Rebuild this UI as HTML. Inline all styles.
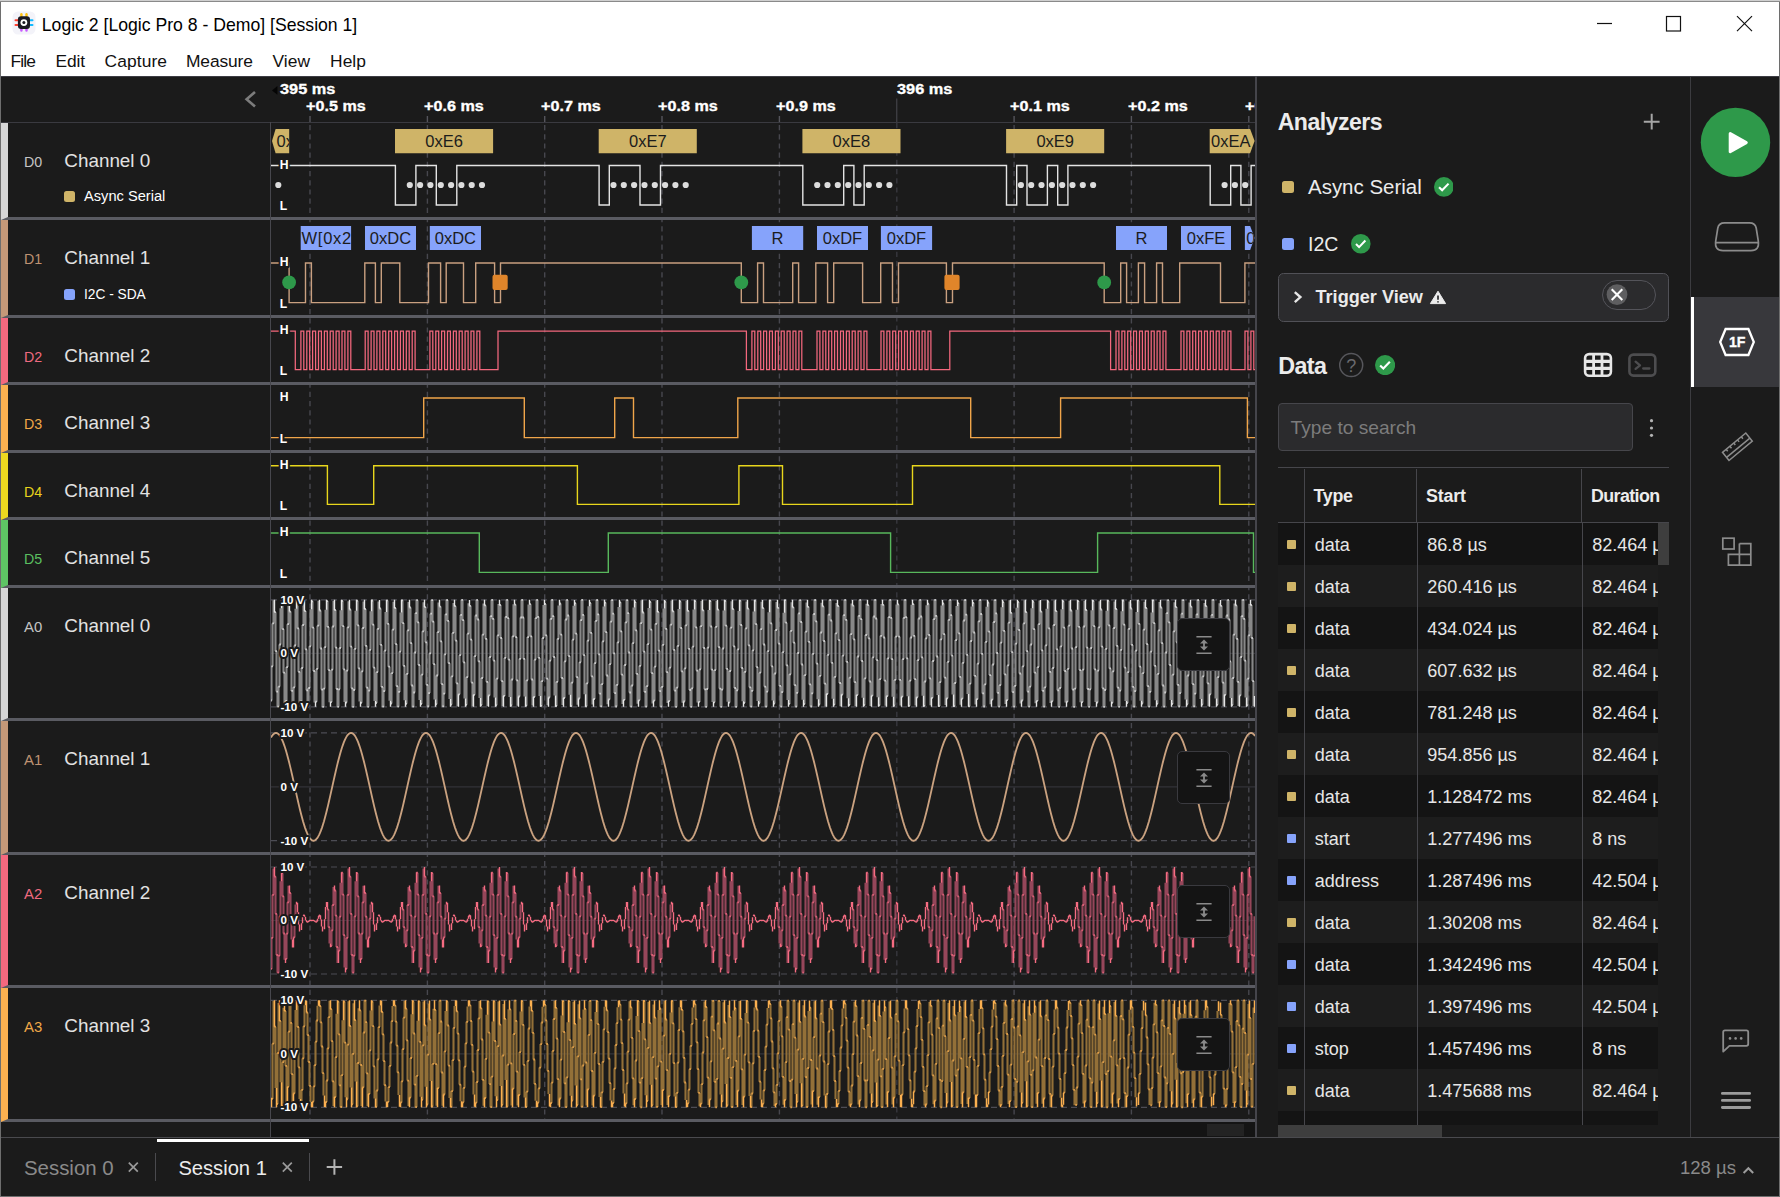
<!DOCTYPE html>
<html lang="en"><head><meta charset="utf-8"><title>Logic 2 [Logic Pro 8 - Demo] [Session 1]</title>
<style>
html,body{margin:0;padding:0;}
body{width:1780px;height:1197px;position:relative;overflow:hidden;background:#fff;font-family:"Liberation Sans", sans-serif;}
.t{position:absolute;white-space:nowrap;line-height:1;}
.abs{position:absolute;}
svg{position:absolute;overflow:hidden;}
svg text{font-family:"Liberation Sans", sans-serif;}
</style></head><body>
<header id="titlebar">
<div style="position:absolute;left:0.0px;top:0.0px;width:1780.0px;height:1.0px;background:#cfcfcf;"></div>
<div style="position:absolute;left:0.0px;top:1.0px;width:1780.0px;height:1.0px;background:#8a8a8a;"></div>
<div class="t" style="left:41.8px;top:17px;font-size:17.64px;color:#000;">Logic 2 [Logic Pro 8 - Demo] [Session 1]</div>
<svg style="left:12px;top:11px" width="24" height="24" viewBox="12 11 24 24">
<rect x="12.5" y="11.5" width="23" height="23" rx="5.5" fill="#f3f3f9"/>
<rect x="20.2" y="13.1" width="2.4" height="4" rx="1.2" fill="#ffc20e"/><rect x="25.3" y="13.1" width="2.4" height="4" rx="1.2" fill="#ffc20e"/>
<rect x="20.2" y="28" width="2.4" height="3.8" rx="1.2" fill="#c85aff"/><rect x="25.3" y="28" width="2.4" height="3.8" rx="1.2" fill="#c85aff"/>
<rect x="14.5" y="19.2" width="4" height="2.1" rx="1" fill="#ff4030"/><rect x="14.5" y="23.9" width="4" height="2.1" rx="1" fill="#ff4030"/>
<rect x="29.5" y="19.2" width="4" height="2.1" rx="1" fill="#10baff"/><rect x="29.5" y="23.9" width="4" height="2.1" rx="1" fill="#10baff"/>
<rect x="17.9" y="16.2" width="12.1" height="12.8" rx="3.2" fill="#1a1a22"/>
<circle cx="23.9" cy="22.6" r="3.4" fill="#fff"/><circle cx="23.9" cy="22.6" r="1.5" fill="#1a1a22"/>
</svg>
<svg style="left:1580px;top:2px" width="198" height="44" viewBox="1580 2 198 44" stroke="#111" stroke-width="1.2" fill="none">
<path d="M1597 23.5H1612"/><rect x="1666.5" y="16.5" width="14" height="14.5"/><path d="M1737 16.2L1752 31.2M1752 16.2L1737 31.2"/></svg>
<div class="t" style="left:10.5px;top:53px;font-size:17.4px;color:#111;letter-spacing:-0.85px;">File</div>
<div class="t" style="left:55.5px;top:53px;font-size:17.4px;color:#111;letter-spacing:-0.16px;">Edit</div>
<div class="t" style="left:104.5px;top:53px;font-size:17.4px;color:#111;letter-spacing:0.10px;">Capture</div>
<div class="t" style="left:186.0px;top:53px;font-size:17.4px;color:#111;letter-spacing:-0.12px;">Measure</div>
<div class="t" style="left:272.5px;top:53px;font-size:17.4px;color:#111;letter-spacing:0.03px;">View</div>
<div class="t" style="left:330.0px;top:53px;font-size:17.4px;color:#111;letter-spacing:0.07px;">Help</div>
</header>
<div id="app-frame">
<div style="position:absolute;left:1.0px;top:76.0px;width:1778.0px;height:1120.0px;background:#1b1b1b;"></div>
<div style="position:absolute;left:0.0px;top:2.0px;width:1.0px;height:1195.0px;background:#6e6e6e;"></div>
<div style="position:absolute;left:1779.0px;top:2.0px;width:1.0px;height:1195.0px;background:#6e6e6e;"></div>
<div style="position:absolute;left:0.0px;top:1196.0px;width:1780.0px;height:1.0px;background:#6e6e6e;"></div>
<div style="position:absolute;left:1.0px;top:76.0px;width:1778.0px;height:1.0px;background:#3d3d44;"></div>
</div>
<main id="capture-view">
<div style="position:absolute;left:1.0px;top:122.0px;width:1254.0px;height:1.0px;background:#3a3a40;"></div>
<svg style="left:240px;top:86px" width="22" height="26" viewBox="240 86 22 26" fill="none" stroke="#7c7c7c" stroke-width="2.6" stroke-linecap="butt"><path d="M255 92L246.6 99.3L255 106.6"/></svg>
<div class="abs" style="left:1px;top:123px;width:1254px;height:94px;border-left:7px solid #d6d6d6;border-bottom:3px solid #5a5b62;box-sizing:content-box;width:1247px"></div>
<div class="t" style="left:24.0px;top:155px;font-size:14.24px;color:#c4c4c4;">D0</div>
<div class="t" style="left:64.3px;top:152px;font-size:18.88px;color:#e2e2e2;">Channel 0</div>
<div class="abs" style="left:1px;top:220px;width:1254px;height:95px;border-left:7px solid #c49878;border-bottom:3px solid #5a5b62;box-sizing:content-box;width:1247px"></div>
<div class="t" style="left:24.0px;top:252px;font-size:14.24px;color:#bf9272;">D1</div>
<div class="t" style="left:64.3px;top:249px;font-size:18.88px;color:#e2e2e2;">Channel 1</div>
<div class="abs" style="left:1px;top:318px;width:1254px;height:64px;border-left:7px solid #f4687e;border-bottom:3px solid #5a5b62;box-sizing:content-box;width:1247px"></div>
<div class="t" style="left:24.0px;top:350px;font-size:14.24px;color:#ee6a80;">D2</div>
<div class="t" style="left:64.3px;top:347px;font-size:18.88px;color:#e2e2e2;">Channel 2</div>
<div class="abs" style="left:1px;top:385px;width:1254px;height:65px;border-left:7px solid #fbb050;border-bottom:3px solid #5a5b62;box-sizing:content-box;width:1247px"></div>
<div class="t" style="left:24.0px;top:417px;font-size:14.24px;color:#f0a848;">D3</div>
<div class="t" style="left:64.3px;top:414px;font-size:18.88px;color:#e2e2e2;">Channel 3</div>
<div class="abs" style="left:1px;top:453px;width:1254px;height:64px;border-left:7px solid #ecd820;border-bottom:3px solid #5a5b62;box-sizing:content-box;width:1247px"></div>
<div class="t" style="left:24.0px;top:485px;font-size:14.24px;color:#e6d21c;">D4</div>
<div class="t" style="left:64.3px;top:482px;font-size:18.88px;color:#e2e2e2;">Channel 4</div>
<div class="abs" style="left:1px;top:520px;width:1254px;height:65px;border-left:7px solid #5ec464;border-bottom:3px solid #5a5b62;box-sizing:content-box;width:1247px"></div>
<div class="t" style="left:24.0px;top:552px;font-size:14.24px;color:#5abf60;">D5</div>
<div class="t" style="left:64.3px;top:549px;font-size:18.88px;color:#e2e2e2;">Channel 5</div>
<div class="abs" style="left:1px;top:588px;width:1254px;height:130px;border-left:7px solid #d6d6d6;border-bottom:3px solid #5a5b62;box-sizing:content-box;width:1247px"></div>
<div class="t" style="left:24.0px;top:620px;font-size:14.88px;color:#c4c4c4;">A0</div>
<div class="t" style="left:64.3px;top:617px;font-size:18.88px;color:#e2e2e2;">Channel 0</div>
<div class="abs" style="left:1px;top:721px;width:1254px;height:131px;border-left:7px solid #c49878;border-bottom:3px solid #5a5b62;box-sizing:content-box;width:1247px"></div>
<div class="t" style="left:24.0px;top:753px;font-size:14.88px;color:#bf9272;">A1</div>
<div class="t" style="left:64.3px;top:750px;font-size:18.88px;color:#e2e2e2;">Channel 1</div>
<div class="abs" style="left:1px;top:855px;width:1254px;height:130px;border-left:7px solid #f4687e;border-bottom:3px solid #5a5b62;box-sizing:content-box;width:1247px"></div>
<div class="t" style="left:24.0px;top:887px;font-size:14.88px;color:#ee6a80;">A2</div>
<div class="t" style="left:64.3px;top:884px;font-size:18.88px;color:#e2e2e2;">Channel 2</div>
<div class="abs" style="left:1px;top:988px;width:1254px;height:131px;border-left:7px solid #fbb050;border-bottom:3px solid #5a5b62;box-sizing:content-box;width:1247px"></div>
<div class="t" style="left:24.0px;top:1020px;font-size:14.88px;color:#f0a848;">A3</div>
<div class="t" style="left:64.3px;top:1017px;font-size:18.88px;color:#e2e2e2;">Channel 3</div>
<div style="position:absolute;left:64.0px;top:191.0px;width:11.0px;height:11.0px;background:#cfb468;border-radius:2.5px;"></div>
<div class="t" style="left:84.0px;top:189px;font-size:14.65px;color:#fff;">Async Serial</div>
<div style="position:absolute;left:64.0px;top:289.0px;width:11.0px;height:10.5px;background:#86a3fb;border-radius:2.5px;"></div>
<div class="t" style="left:84.0px;top:288px;font-size:13.73px;color:#fff;">I2C - SDA</div>
<div style="position:absolute;left:270.0px;top:122.0px;width:1.0px;height:1015.0px;background:#47474d;"></div>
<div style="position:absolute;left:271.0px;top:1122.0px;width:984.0px;height:15.0px;background:#141414;"></div>
<div style="position:absolute;left:1207.0px;top:1124.0px;width:37.0px;height:12.0px;background:#232323;"></div>
<div style="position:absolute;left:1255.0px;top:76.0px;width:1.5px;height:1061.0px;background:#45454b;"></div>
<svg style="left:271px;top:76px" width="984" height="1061" viewBox="271 76 984 1061"><path d="M310 116V122" stroke="#55555c" stroke-width="1.4"/><path d="M310 125V1122" stroke="#47474e" stroke-width="1.4" stroke-dasharray="5.2 4"/><path d="M427.4 116V122" stroke="#55555c" stroke-width="1.4"/><path d="M427.4 125V1122" stroke="#47474e" stroke-width="1.4" stroke-dasharray="5.2 4"/><path d="M544.7 116V122" stroke="#55555c" stroke-width="1.4"/><path d="M544.7 125V1122" stroke="#47474e" stroke-width="1.4" stroke-dasharray="5.2 4"/><path d="M662 116V122" stroke="#55555c" stroke-width="1.4"/><path d="M662 125V1122" stroke="#47474e" stroke-width="1.4" stroke-dasharray="5.2 4"/><path d="M779.4 116V122" stroke="#55555c" stroke-width="1.4"/><path d="M779.4 125V1122" stroke="#47474e" stroke-width="1.4" stroke-dasharray="5.2 4"/><path d="M896.8 98.5V122" stroke="#4a4a52" stroke-width="1"/><path d="M896.8 123V1122" stroke="#38383e" stroke-width="1.4" stroke-dasharray="5.2 4"/><path d="M1014.1 116V122" stroke="#55555c" stroke-width="1.4"/><path d="M1014.1 125V1122" stroke="#47474e" stroke-width="1.4" stroke-dasharray="5.2 4"/><path d="M1131.4 116V122" stroke="#55555c" stroke-width="1.4"/><path d="M1131.4 125V1122" stroke="#47474e" stroke-width="1.4" stroke-dasharray="5.2 4"/><path d="M1248.8 116V122" stroke="#55555c" stroke-width="1.4"/><path d="M1248.8 125V1122" stroke="#47474e" stroke-width="1.4" stroke-dasharray="5.2 4"/><rect x="271" y="217" width="984" height="3" fill="#5a5b62"/><rect x="271" y="315" width="984" height="3" fill="#5a5b62"/><rect x="271" y="382" width="984" height="3" fill="#5a5b62"/><rect x="271" y="450" width="984" height="3" fill="#5a5b62"/><rect x="271" y="517" width="984" height="3" fill="#5a5b62"/><rect x="271" y="585" width="984" height="3" fill="#5a5b62"/><rect x="271" y="718" width="984" height="3" fill="#5a5b62"/><rect x="271" y="852" width="984" height="3" fill="#5a5b62"/><rect x="271" y="985" width="984" height="3" fill="#5a5b62"/><rect x="271" y="1119" width="984" height="3" fill="#5a5b62"/><path d="M271 165.5H395.4V205H415.9V165.5H436.3V205H456.8V165.5H599.1V205H609.3V165.5H640V205H660.5V165.5H802.8V205H843.7V165.5H853.9V205H864.2V165.5H1006.5V205H1016.7V165.5H1027V205H1047.4V165.5H1057.7V205H1067.9V165.5H1210.2V205H1230.7V165.5H1240.9V205H1251.1V165.5H1255" fill="none" stroke="#e4e4e4" stroke-width="1.4" stroke-linejoin="miter"/><text x="279.8" y="168.7" font-size="12.2" font-weight="bold" fill="#fff" stroke="#1b1b1b" stroke-width="4" stroke-linejoin="round" paint-order="stroke">H</text><text x="279.8" y="210.2" font-size="12.2" font-weight="bold" fill="#fff" stroke="#1b1b1b" stroke-width="4" stroke-linejoin="round" paint-order="stroke">L</text><g fill="#dcdcdc"><circle cx="278.3" cy="185" r="3.1"/><circle cx="409.8" cy="185" r="3.1"/><circle cx="420.1" cy="185" r="3.1"/><circle cx="430.4" cy="185" r="3.1"/><circle cx="440.8" cy="185" r="3.1"/><circle cx="451.1" cy="185" r="3.1"/><circle cx="461.4" cy="185" r="3.1"/><circle cx="471.7" cy="185" r="3.1"/><circle cx="482" cy="185" r="3.1"/><circle cx="613.5" cy="185" r="3.1"/><circle cx="623.8" cy="185" r="3.1"/><circle cx="634.1" cy="185" r="3.1"/><circle cx="644.5" cy="185" r="3.1"/><circle cx="654.8" cy="185" r="3.1"/><circle cx="665.1" cy="185" r="3.1"/><circle cx="675.4" cy="185" r="3.1"/><circle cx="685.7" cy="185" r="3.1"/><circle cx="817.2" cy="185" r="3.1"/><circle cx="827.5" cy="185" r="3.1"/><circle cx="837.8" cy="185" r="3.1"/><circle cx="848.2" cy="185" r="3.1"/><circle cx="858.5" cy="185" r="3.1"/><circle cx="868.8" cy="185" r="3.1"/><circle cx="879.1" cy="185" r="3.1"/><circle cx="889.4" cy="185" r="3.1"/><circle cx="1020.9" cy="185" r="3.1"/><circle cx="1031.2" cy="185" r="3.1"/><circle cx="1041.5" cy="185" r="3.1"/><circle cx="1051.9" cy="185" r="3.1"/><circle cx="1062.2" cy="185" r="3.1"/><circle cx="1072.5" cy="185" r="3.1"/><circle cx="1082.8" cy="185" r="3.1"/><circle cx="1093.1" cy="185" r="3.1"/><circle cx="1224.6" cy="185" r="3.1"/><circle cx="1234.9" cy="185" r="3.1"/><circle cx="1245.2" cy="185" r="3.1"/></g><path d="M272 141.1L275.6 129H289.2V153.2H275.6Z" fill="#cfb468"/><clipPath id="c2720_129"><path d="M272 141.1L275.6 129H289.2V153.2H275.6Z"/></clipPath><text x="276.5" y="147" font-size="16.5" letter-spacing="0" fill="#1c1c1c" clip-path="url(#c2720_129)">0xE5</text><path d="M395 129H493.1V153.2H395Z" fill="#cfb468"/><text x="444.1" y="147" font-size="16.5" text-anchor="middle" fill="#1c1c1c">0xE6</text><path d="M598.7 129H696.8V153.2H598.7Z" fill="#cfb468"/><text x="647.8" y="147" font-size="16.5" text-anchor="middle" fill="#1c1c1c">0xE7</text><path d="M802.4 129H900.5V153.2H802.4Z" fill="#cfb468"/><text x="851.4" y="147" font-size="16.5" text-anchor="middle" fill="#1c1c1c">0xE8</text><path d="M1006.1 129H1104.2V153.2H1006.1Z" fill="#cfb468"/><text x="1055.2" y="147" font-size="16.5" text-anchor="middle" fill="#1c1c1c">0xE9</text><path d="M1209.7 129H1250.1L1254.6 141.1L1250.1 153.2H1209.7Z" fill="#cfb468"/><clipPath id="c12097_129"><path d="M1209.7 129H1250.1L1254.6 141.1L1250.1 153.2H1209.7Z"/></clipPath><text x="1211" y="147" font-size="16.5" letter-spacing="0" fill="#1c1c1c" clip-path="url(#c12097_129)">0xEA</text><path d="M271 263H289.1V302.6H305.5V263H311.4V302.6H364.8V263H375.4V302.6H381.3V263H399.8V302.6H428.5V263H440.6V302.6H446.2V263H463.5V302.6H475.7V263H494.6V302.6H500.5V263H741.3V302.6H757.6V263H763.5V302.6H792.7V263H798.6V302.6H815.8V263H827.6V302.6H833.7V263H862.6V302.6H880.7V263H892.5V302.6H898.5V263H946.4V302.6H952.5V263H1104.2V302.6H1120.7V263H1126.6V302.6H1138.4V263H1144.6V302.6H1156.6V263H1162.5V302.6H1179.7V263H1220.5V302.6H1244.9V263H1255" fill="none" stroke="#c9a080" stroke-width="1.4" stroke-linejoin="miter"/><text x="279.8" y="266.2" font-size="12.2" font-weight="bold" fill="#fff" stroke="#1b1b1b" stroke-width="4" stroke-linejoin="round" paint-order="stroke">H</text><text x="279.8" y="307.8" font-size="12.2" font-weight="bold" fill="#fff" stroke="#1b1b1b" stroke-width="4" stroke-linejoin="round" paint-order="stroke">L</text><circle cx="289.1" cy="282.4" r="6.9" fill="#2e994a"/><circle cx="741.3" cy="282.4" r="6.9" fill="#2e994a"/><circle cx="1104.2" cy="282.4" r="6.9" fill="#2e994a"/><rect x="492.5" y="274.8" width="15.2" height="15.2" rx="2" fill="#e0852a"/><rect x="944.4" y="274.8" width="15.2" height="15.2" rx="2" fill="#e0852a"/><path d="M300.7 226.1H351.1V250H300.7Z" fill="#86a3fb"/><clipPath id="c3007_226"><path d="M300.7 226.1H351.1V250H300.7Z"/></clipPath><text x="301.6" y="244" font-size="16.5" letter-spacing="0.7" fill="#1c1c1c" clip-path="url(#c3007_226)">W[0x20]</text><path d="M365 226.1H416V250H365Z" fill="#86a3fb"/><text x="390.5" y="244" font-size="16.5" text-anchor="middle" fill="#1c1c1c">0xDC</text><path d="M429.8 226.1H481V250H429.8Z" fill="#86a3fb"/><text x="455.4" y="244" font-size="16.5" text-anchor="middle" fill="#1c1c1c">0xDC</text><path d="M751.9 226.1H803.2V250H751.9Z" fill="#86a3fb"/><text x="777.5" y="244" font-size="16.5" text-anchor="middle" fill="#1c1c1c">R</text><path d="M817 226.1H868V250H817Z" fill="#86a3fb"/><text x="842.5" y="244" font-size="16.5" text-anchor="middle" fill="#1c1c1c">0xDF</text><path d="M880.9 226.1H932.1V250H880.9Z" fill="#86a3fb"/><text x="906.5" y="244" font-size="16.5" text-anchor="middle" fill="#1c1c1c">0xDF</text><path d="M1116 226.1H1167V250H1116Z" fill="#86a3fb"/><text x="1141.5" y="244" font-size="16.5" text-anchor="middle" fill="#1c1c1c">R</text><path d="M1181 226.1H1231V250H1181Z" fill="#86a3fb"/><text x="1206" y="244" font-size="16.5" text-anchor="middle" fill="#1c1c1c">0xFE</text><path d="M1244.9 226.1H1250.1L1254.6 238.1L1250.1 250H1244.9Z" fill="#86a3fb"/><clipPath id="c12449_226"><path d="M1244.9 226.1H1250.1L1254.6 238.1L1250.1 250H1244.9Z"/></clipPath><text x="1246.2" y="244" font-size="16.5" letter-spacing="0" fill="#1c1c1c" clip-path="url(#c12449_226)">0xFE</text><path d="M271 331H295.3V369.6H300.9V331H303.8V369.6H306.8V331H309.7V369.6H312.6V331H315.6V369.6H318.5V331H321.4V369.6H324.4V331H327.3V369.6H330.2V331H333.2V369.6H336.1V331H339.1V369.6H342V331H344.9V369.6H347.9V331H350.8V369.6H365.2V331H368.1V369.6H371.1V331H374V369.6H376.9V331H379.9V369.6H382.8V331H385.7V369.6H388.7V331H391.6V369.6H394.6V331H397.5V369.6H400.4V331H403.4V369.6H406.3V331H409.2V369.6H412.2V331H415.1V369.6H429.9V331H432.8V369.6H435.8V331H438.7V369.6H441.6V331H444.6V369.6H447.5V331H450.4V369.6H453.4V331H456.3V369.6H459.2V331H462.2V369.6H465.1V331H468.1V369.6H471V331H473.9V369.6H476.9V331H479.8V369.6H498V331H746.4V369.6H751.9V331H754.8V369.6H757.8V331H760.7V369.6H763.6V331H766.6V369.6H769.5V331H772.4V369.6H775.4V331H778.3V369.6H781.2V331H784.2V369.6H787.1V331H790.1V369.6H793V331H795.9V369.6H798.9V331H801.8V369.6H817V331H819.9V369.6H822.9V331H825.8V369.6H828.7V331H831.7V369.6H834.6V331H837.5V369.6H840.5V331H843.4V369.6H846.4V331H849.3V369.6H852.2V331H855.2V369.6H858.1V331H861V369.6H864V331H866.9V369.6H881V331H883.9V369.6H886.9V331H889.8V369.6H892.7V331H895.7V369.6H898.6V331H901.5V369.6H904.5V331H907.4V369.6H910.4V331H913.3V369.6H916.2V331H919.2V369.6H922.1V331H925V369.6H928V331H930.9V369.6H949.8V331H1110.6V369.6H1116V331H1118.9V369.6H1121.9V331H1124.8V369.6H1127.7V331H1130.7V369.6H1133.6V331H1136.5V369.6H1139.5V331H1142.4V369.6H1145.3V331H1148.3V369.6H1151.2V331H1154.2V369.6H1157.1V331H1160V369.6H1163V331H1165.9V369.6H1181V331H1183.9V369.6H1186.9V331H1189.8V369.6H1192.7V331H1195.7V369.6H1198.6V331H1201.5V369.6H1204.5V331H1207.4V369.6H1210.3V331H1213.3V369.6H1216.2V331H1219.2V369.6H1222.1V331H1225V369.6H1228V331H1230.9V369.6H1245V331H1247.9V369.6H1250.9V331H1253.8V369.6H1255" fill="none" stroke="#f4687e" stroke-width="1.25" stroke-linejoin="miter"/><text x="279.8" y="334.2" font-size="12.2" font-weight="bold" fill="#fff" stroke="#1b1b1b" stroke-width="4" stroke-linejoin="round" paint-order="stroke">H</text><text x="279.8" y="374.8" font-size="12.2" font-weight="bold" fill="#fff" stroke="#1b1b1b" stroke-width="4" stroke-linejoin="round" paint-order="stroke">L</text><path d="M271 437.6H423.7V398H524.3V437.6H614.7V398H633.5V437.6H737.8V398H970.7V437.6H1060.6V398H1247.4V437.6H1255" fill="none" stroke="#f0a54a" stroke-width="1.4" stroke-linejoin="miter"/><text x="279.8" y="401.2" font-size="12.2" font-weight="bold" fill="#fff" stroke="#1b1b1b" stroke-width="4" stroke-linejoin="round" paint-order="stroke">H</text><text x="279.8" y="442.8" font-size="12.2" font-weight="bold" fill="#fff" stroke="#1b1b1b" stroke-width="4" stroke-linejoin="round" paint-order="stroke">L</text><path d="M271 465.7H327.4V504.4H373.7V465.7H577.4V504.4H738.9V465.7H782.5V504.4H912.5V465.7H1219.8V504.4H1255" fill="none" stroke="#e8d61c" stroke-width="1.4" stroke-linejoin="miter"/><text x="279.8" y="468.9" font-size="12.2" font-weight="bold" fill="#fff" stroke="#1b1b1b" stroke-width="4" stroke-linejoin="round" paint-order="stroke">H</text><text x="279.8" y="509.6" font-size="12.2" font-weight="bold" fill="#fff" stroke="#1b1b1b" stroke-width="4" stroke-linejoin="round" paint-order="stroke">L</text><path d="M271 533H479.3V572.4H608.3V533H890.6V572.4H1097.6V533H1253.5V572.4H1255" fill="none" stroke="#58b85c" stroke-width="1.4" stroke-linejoin="miter"/><text x="279.8" y="536.2" font-size="12.2" font-weight="bold" fill="#fff" stroke="#1b1b1b" stroke-width="4" stroke-linejoin="round" paint-order="stroke">H</text><text x="279.8" y="577.6" font-size="12.2" font-weight="bold" fill="#fff" stroke="#1b1b1b" stroke-width="4" stroke-linejoin="round" paint-order="stroke">L</text><path d="M271 599.8H1255M271 706.8H1255" stroke="#4c4c54" stroke-width="1.2" stroke-dasharray="6 4" fill="none"/><path d="M271 653.3H1255" stroke="#333338" stroke-width="1.2"/><path d="M271.5 666.3V700.5M272.5 623.4V666.3M273.5 600.3V623.4M275.5 612.2V651.2M276.5 651.2V691.6M277.5 691.6V706.8M278.5 686.6V706.7M279.5 644.5V686.6M280.5 608.2V644.5M282.5 601.7V629.2M283.5 629.2V672.7M284.5 672.7V703.3M286.5 667.1V700.9M287.5 624.2V667.1M288.5 600.5V624.2M290.5 611.6V650.3M291.5 650.3V690.9M292.5 690.9V706.7M293.5 687.3V706.7M294.5 645.4V687.3M295.5 608.7V645.4M297.5 601.5V628.4M298.5 628.4V671.8M299.5 671.8V703M301.5 668V701.3M302.5 625V668M303.5 600.6V625M305.5 611.1V649.4M306.5 649.4V690.3M307.5 690.3V706.8M308.5 688V706.8M309.5 646.3V688M310.5 609.2V646.3M312.5 601.3V627.7M313.5 627.7V671M314.5 671V702.6M316.5 668.9V701.7M317.5 625.7V668.9M318.5 600.8V625.7M320.5 610.5V648.5M321.5 648.5V689.6M322.5 689.6V706.8M323.5 688.6V706.8M324.5 647.2V688.6M325.5 609.7V647.2M327.5 601.1V626.9M328.5 626.9V670.1M329.5 670.1V702.3M331.5 669.7V702.1M332.5 626.5V669.7M333.5 601V626.5M335.5 610V647.6M336.5 647.6V689M337.5 689V706.8M338.5 689.3V706.8M339.5 648V689.3M340.5 610.3V648M342.5 600.9V626.1M343.5 626.1V669.3M344.5 669.3V701.9M346.5 670.6V702.5M347.5 627.3V670.6M348.5 601.2V627.3M350.5 609.5V646.7M351.5 646.7V688.3M352.5 688.3V706.8M353.5 690V706.8M354.5 648.9V690M355.5 610.8V648.9M357.5 600.7V625.3M358.5 625.3V668.4M359.5 668.4V701.5M361.5 671.4V702.8M362.5 628V671.4M363.5 601.4V628M365.5 609V645.8M366.5 645.8V687.6M367.5 687.6V706.8M368.5 690.6V706.8M369.5 649.8V690.6M370.5 611.3V649.8M372.5 600.5V624.6M373.5 624.6V667.6M374.5 667.6V701.1M376.5 672.2V703.1M377.5 628.8V672.2M378.5 601.6V628.8M380.5 608.5V644.9M381.5 644.9V686.9M382.5 686.9V706.7M383.5 691.2V706.7M384.5 650.7V691.2M385.5 611.9V650.7M387.5 600.4V623.8M388.5 623.8V666.7M389.5 666.7V700.7M391.5 673.1V703.5M392.5 629.6V673.1M393.5 601.8V629.6M395.5 608V644.1M396.5 644.1V686.2M397.5 686.2V706.7M398.5 691.9V706.8M399.5 651.6V691.9M400.5 612.5V651.6M402.5 600.3V623.1M403.5 623.1V665.8M404.5 665.8V700.3M406.5 673.9V703.8M407.5 630.4V673.9M408.5 602.1V630.4M410.5 607.5V643.2M411.5 643.2V685.5M412.5 685.5V706.6M413.5 692.5V706.8M414.5 652.5V692.5M415.5 613.1V652.5M416.5 599.8V613.1M417.5 600.2V622.3M418.5 622.3V665M419.5 665V699.9M421.5 674.7V704M422.5 631.3V674.7M423.5 602.3V631.3M425.5 607.1V642.3M426.5 642.3V684.8M427.5 684.8V706.5M428.5 693.1V706.8M429.5 653.4V693.1M430.5 613.7V653.4M431.5 599.8V613.7M432.5 600.1V621.6M433.5 621.6V664.1M434.5 664.1V699.4M436.5 675.5V704.3M437.5 632.1V675.5M438.5 602.6V632.1M440.5 606.6V641.4M441.5 641.4V684.1M442.5 684.1V706.4M443.5 693.7V706.8M444.5 654.3V693.7M445.5 614.3V654.3M446.5 599.8V614.3M447.5 600V620.9M448.5 620.9V663.2M449.5 663.2V699M451.5 676.4V704.6M452.5 632.9V676.4M453.5 602.9V632.9M455.5 606.2V640.6M456.5 640.6V683.3M457.5 683.3V706.3M459.5 655.2V694.3M460.5 614.9V655.2M461.5 599.8V614.9M462.5 599.9V620.2M463.5 620.2V662.3M464.5 662.3V698.5M466.5 677.2V704.8M467.5 633.7V677.2M468.5 603.2V633.7M470.5 605.8V639.7M471.5 639.7V682.6M472.5 682.6V706.2M474.5 656.1V694.8M475.5 615.5V656.1M476.5 599.9V615.5M477.5 599.9V619.5M478.5 619.5V661.4M479.5 661.4V698M481.5 678V705.1M482.5 634.6V678M483.5 603.5V634.6M485.5 605.4V638.8M486.5 638.8V681.8M487.5 681.8V706M489.5 657V695.4M490.5 616.1V657M491.5 599.8V616.1M492.5 599.8V618.8M493.5 618.8V660.6M494.5 660.6V697.5M496.5 678.7V705.3M497.5 635.4V678.7M498.5 603.9V635.4M500.5 605V638M501.5 638V681.1M502.5 681.1V705.9M504.5 657.9V695.9M505.5 616.8V657.9M506.5 599.8V616.8M507.5 599.8V618.1M508.5 618.1V659.7M509.5 659.7V697M511.5 679.5V705.5M512.5 636.3V679.5M513.5 604.2V636.3M515.5 604.6V637.1M516.5 637.1V680.3M517.5 680.3V705.7M519.5 658.8V696.5M520.5 617.5V658.8M521.5 599.8V617.5M522.5 599.8V617.5M523.5 617.5V658.8M524.5 658.8V696.5M526.5 680.3V705.7M527.5 637.1V680.3M528.5 604.6V637.1M530.5 604.2V636.3M531.5 636.3V679.5M532.5 679.5V705.5M534.5 659.7V697M535.5 618.1V659.7M536.5 599.8V618.1M537.5 599.8V616.8M538.5 616.8V657.9M539.5 657.9V695.9M541.5 681.1V705.9M542.5 638V681.1M543.5 605V638M545.5 603.9V635.4M546.5 635.4V678.7M547.5 678.7V705.3M549.5 660.6V697.5M550.5 618.8V660.6M551.5 599.8V618.8M552.5 599.8V616.1M553.5 616.1V657M554.5 657V695.4M556.5 681.8V706M557.5 638.8V681.8M558.5 605.4V638.8M560.5 603.5V634.6M561.5 634.6V678M562.5 678V705.1M564.5 661.4V698M565.5 619.5V661.4M566.5 599.9V619.5M567.5 599.9V615.5M568.5 615.5V656.1M569.5 656.1V694.8M571.5 682.6V706.2M572.5 639.7V682.6M573.5 605.8V639.7M575.5 603.2V633.7M576.5 633.7V677.2M577.5 677.2V704.8M579.5 662.3V698.5M580.5 620.2V662.3M581.5 599.9V620.2M582.5 599.8V614.9M583.5 614.9V655.2M584.5 655.2V694.3M586.5 683.3V706.3M587.5 640.6V683.3M588.5 606.2V640.6M590.5 602.9V632.9M591.5 632.9V676.4M592.5 676.4V704.6M594.5 663.2V699M595.5 620.9V663.2M596.5 600V620.9M597.5 599.8V614.3M598.5 614.3V654.3M599.5 654.3V693.7M600.5 693.7V706.8M601.5 684.1V706.4M602.5 641.4V684.1M603.5 606.6V641.4M605.5 602.6V632.1M606.5 632.1V675.5M607.5 675.5V704.3M609.5 664.1V699.4M610.5 621.6V664.1M611.5 600.1V621.6M612.5 599.8V613.7M613.5 613.7V653.4M614.5 653.4V693.1M615.5 693.1V706.8M616.5 684.8V706.5M617.5 642.3V684.8M618.5 607.1V642.3M620.5 602.3V631.3M621.5 631.3V674.7M622.5 674.7V704M624.5 665V699.9M625.5 622.3V665M626.5 600.2V622.3M627.5 599.8V613.1M628.5 613.1V652.5M629.5 652.5V692.5M630.5 692.5V706.8M631.5 685.5V706.6M632.5 643.2V685.5M633.5 607.5V643.2M635.5 602.1V630.4M636.5 630.4V673.9M637.5 673.9V703.8M639.5 665.8V700.3M640.5 623.1V665.8M641.5 600.3V623.1M643.5 612.5V651.6M644.5 651.6V691.9M645.5 691.9V706.8M646.5 686.2V706.7M647.5 644.1V686.2M648.5 608V644.1M650.5 601.8V629.6M651.5 629.6V673.1M652.5 673.1V703.5M654.5 666.7V700.7M655.5 623.8V666.7M656.5 600.4V623.8M658.5 611.9V650.7M659.5 650.7V691.2M660.5 691.2V706.7M661.5 686.9V706.7M662.5 644.9V686.9M663.5 608.5V644.9M665.5 601.6V628.8M666.5 628.8V672.2M667.5 672.2V703.1M669.5 667.6V701.1M670.5 624.6V667.6M671.5 600.5V624.6M673.5 611.3V649.8M674.5 649.8V690.6M675.5 690.6V706.8M676.5 687.6V706.8M677.5 645.8V687.6M678.5 609V645.8M680.5 601.4V628M681.5 628V671.4M682.5 671.4V702.8M684.5 668.4V701.5M685.5 625.3V668.4M686.5 600.7V625.3M688.5 610.8V648.9M689.5 648.9V690M690.5 690V706.8M691.5 688.3V706.8M692.5 646.7V688.3M693.5 609.5V646.7M695.5 601.2V627.3M696.5 627.3V670.6M697.5 670.6V702.5M699.5 669.3V701.9M700.5 626.1V669.3M701.5 600.9V626.1M703.5 610.3V648M704.5 648V689.3M705.5 689.3V706.8M706.5 689V706.8M707.5 647.6V689M708.5 610V647.6M710.5 601V626.5M711.5 626.5V669.7M712.5 669.7V702.1M714.5 670.1V702.3M715.5 626.9V670.1M716.5 601.1V626.9M718.5 609.7V647.2M719.5 647.2V688.6M720.5 688.6V706.8M721.5 689.6V706.8M722.5 648.5V689.6M723.5 610.5V648.5M725.5 600.8V625.7M726.5 625.7V668.9M727.5 668.9V701.7M729.5 671V702.6M730.5 627.7V671M731.5 601.3V627.7M733.5 609.2V646.3M734.5 646.3V688M735.5 688V706.8M736.5 690.3V706.8M737.5 649.4V690.3M738.5 611.1V649.4M740.5 600.6V625M741.5 625V668M742.5 668V701.3M744.5 671.8V703M745.5 628.4V671.8M746.5 601.5V628.4M748.5 608.7V645.4M749.5 645.4V687.3M750.5 687.3V706.7M751.5 690.9V706.7M752.5 650.3V690.9M753.5 611.6V650.3M755.5 600.5V624.2M756.5 624.2V667.1M757.5 667.1V700.9M759.5 672.7V703.3M760.5 629.2V672.7M761.5 601.7V629.2M763.5 608.2V644.5M764.5 644.5V686.6M765.5 686.6V706.7M766.5 691.6V706.8M767.5 651.2V691.6M768.5 612.2V651.2M770.5 600.3V623.4M771.5 623.4V666.3M772.5 666.3V700.5M774.5 673.5V703.6M775.5 630V673.5M776.5 601.9V630M778.5 607.8V643.6M779.5 643.6V685.9M780.5 685.9V706.6M781.5 692.2V706.8M782.5 652.1V692.2M783.5 612.8V652.1M785.5 600.2V622.7M786.5 622.7V665.4M787.5 665.4V700.1M789.5 674.3V703.9M790.5 630.9V674.3M791.5 602.2V630.9M793.5 607.3V642.7M794.5 642.7V685.2M795.5 685.2V706.6M796.5 692.8V706.8M797.5 653V692.8M798.5 613.4V653M799.5 599.8V613.4M800.5 600.1V622M801.5 622V664.5M802.5 664.5V699.7M804.5 675.1V704.2M805.5 631.7V675.1M806.5 602.5V631.7M808.5 606.8V641.9M809.5 641.9V684.4M810.5 684.4V706.5M811.5 693.4V706.8M812.5 653.9V693.4M813.5 614V653.9M814.5 599.8V614M815.5 600V621.3M816.5 621.3V663.6M817.5 663.6V699.2M819.5 675.9V704.5M820.5 632.5V675.9M821.5 602.8V632.5M823.5 606.4V641M824.5 641V683.7M825.5 683.7V706.4M827.5 654.8V694M828.5 614.6V654.8M829.5 599.8V614.6M830.5 600V620.5M831.5 620.5V662.8M832.5 662.8V698.7M834.5 676.8V704.7M835.5 633.3V676.8M836.5 603.1V633.3M838.5 606V640.1M839.5 640.1V683M840.5 683V706.2M842.5 655.6V694.6M843.5 615.2V655.6M844.5 599.9V615.2M845.5 599.9V619.8M846.5 619.8V661.9M847.5 661.9V698.3M849.5 677.6V705M850.5 634.2V677.6M851.5 603.4V634.2M853.5 605.6V639.3M854.5 639.3V682.2M855.5 682.2V706.1M857.5 656.5V695.1M858.5 615.8V656.5M859.5 599.8V615.8M860.5 599.8V619.1M861.5 619.1V661M862.5 661V697.8M864.5 678.4V705.2M865.5 635V678.4M866.5 603.7V635M868.5 605.2V638.4M869.5 638.4V681.5M870.5 681.5V705.9M872.5 657.4V695.7M873.5 616.5V657.4M874.5 599.8V616.5M875.5 599.8V618.5M876.5 618.5V660.1M877.5 660.1V697.3M879.5 679.1V705.4M880.5 635.8V679.1M881.5 604.1V635.8M883.5 604.8V637.5M884.5 637.5V680.7M885.5 680.7V705.8M887.5 658.3V696.2M888.5 617.1V658.3M889.5 599.8V617.1M890.5 599.8V617.8M891.5 617.8V659.2M892.5 659.2V696.7M894.5 679.9V705.6M895.5 636.7V679.9M896.5 604.4V636.7M898.5 604.4V636.7M899.5 636.7V679.9M900.5 679.9V705.6M902.5 659.2V696.7M903.5 617.8V659.2M904.5 599.8V617.8M905.5 599.8V617.1M906.5 617.1V658.3M907.5 658.3V696.2M909.5 680.7V705.8M910.5 637.5V680.7M911.5 604.8V637.5M913.5 604.1V635.8M914.5 635.8V679.1M915.5 679.1V705.4M917.5 660.1V697.3M918.5 618.5V660.1M919.5 599.8V618.5M920.5 599.8V616.5M921.5 616.5V657.4M922.5 657.4V695.7M924.5 681.5V705.9M925.5 638.4V681.5M926.5 605.2V638.4M928.5 603.7V635M929.5 635V678.4M930.5 678.4V705.2M932.5 661V697.8M933.5 619.1V661M934.5 599.8V619.1M935.5 599.8V615.8M936.5 615.8V656.5M937.5 656.5V695.1M939.5 682.2V706.1M940.5 639.3V682.2M941.5 605.6V639.3M943.5 603.4V634.2M944.5 634.2V677.6M945.5 677.6V705M947.5 661.9V698.3M948.5 619.8V661.9M949.5 599.9V619.8M950.5 599.9V615.2M951.5 615.2V655.6M952.5 655.6V694.6M954.5 683V706.2M955.5 640.1V683M956.5 606V640.1M958.5 603.1V633.3M959.5 633.3V676.8M960.5 676.8V704.7M962.5 662.8V698.7M963.5 620.5V662.8M964.5 600V620.5M965.5 599.8V614.6M966.5 614.6V654.8M967.5 654.8V694M969.5 683.7V706.4M970.5 641V683.7M971.5 606.4V641M973.5 602.8V632.5M974.5 632.5V675.9M975.5 675.9V704.5M977.5 663.6V699.2M978.5 621.3V663.6M979.5 600V621.3M980.5 599.8V614M981.5 614V653.9M982.5 653.9V693.4M983.5 693.4V706.8M984.5 684.4V706.5M985.5 641.9V684.4M986.5 606.8V641.9M988.5 602.5V631.7M989.5 631.7V675.1M990.5 675.1V704.2M992.5 664.5V699.7M993.5 622V664.5M994.5 600.1V622M995.5 599.8V613.4M996.5 613.4V653M997.5 653V692.8M998.5 692.8V706.8M999.5 685.2V706.6M1000.5 642.7V685.2M1001.5 607.3V642.7M1003.5 602.2V630.9M1004.5 630.9V674.3M1005.5 674.3V703.9M1007.5 665.4V700.1M1008.5 622.7V665.4M1009.5 600.2V622.7M1011.5 612.8V652.1M1012.5 652.1V692.2M1013.5 692.2V706.8M1014.5 685.9V706.6M1015.5 643.6V685.9M1016.5 607.8V643.6M1018.5 601.9V630M1019.5 630V673.5M1020.5 673.5V703.6M1022.5 666.3V700.5M1023.5 623.4V666.3M1024.5 600.3V623.4M1026.5 612.2V651.2M1027.5 651.2V691.6M1028.5 691.6V706.8M1029.5 686.6V706.7M1030.5 644.5V686.6M1031.5 608.2V644.5M1033.5 601.7V629.2M1034.5 629.2V672.7M1035.5 672.7V703.3M1037.5 667.1V700.9M1038.5 624.2V667.1M1039.5 600.5V624.2M1041.5 611.6V650.3M1042.5 650.3V690.9M1043.5 690.9V706.7M1044.5 687.3V706.7M1045.5 645.4V687.3M1046.5 608.7V645.4M1048.5 601.5V628.4M1049.5 628.4V671.8M1050.5 671.8V703M1052.5 668V701.3M1053.5 625V668M1054.5 600.6V625M1056.5 611.1V649.4M1057.5 649.4V690.3M1058.5 690.3V706.8M1059.5 688V706.8M1060.5 646.3V688M1061.5 609.2V646.3M1063.5 601.3V627.7M1064.5 627.7V671M1065.5 671V702.6M1067.5 668.9V701.7M1068.5 625.7V668.9M1069.5 600.8V625.7M1071.5 610.5V648.5M1072.5 648.5V689.6M1073.5 689.6V706.8M1074.5 688.6V706.8M1075.5 647.2V688.6M1076.5 609.7V647.2M1078.5 601.1V626.9M1079.5 626.9V670.1M1080.5 670.1V702.3M1082.5 669.7V702.1M1083.5 626.5V669.7M1084.5 601V626.5M1086.5 610V647.6M1087.5 647.6V689M1088.5 689V706.8M1089.5 689.3V706.8M1090.5 648V689.3M1091.5 610.3V648M1093.5 600.9V626.1M1094.5 626.1V669.3M1095.5 669.3V701.9M1097.5 670.6V702.5M1098.5 627.3V670.6M1099.5 601.2V627.3M1101.5 609.5V646.7M1102.5 646.7V688.3M1103.5 688.3V706.8M1104.5 690V706.8M1105.5 648.9V690M1106.5 610.8V648.9M1108.5 600.7V625.3M1109.5 625.3V668.4M1110.5 668.4V701.5M1112.5 671.4V702.8M1113.5 628V671.4M1114.5 601.4V628M1116.5 609V645.8M1117.5 645.8V687.6M1118.5 687.6V706.8M1119.5 690.6V706.8M1120.5 649.8V690.6M1121.5 611.3V649.8M1123.5 600.5V624.6M1124.5 624.6V667.6M1125.5 667.6V701.1M1127.5 672.2V703.1M1128.5 628.8V672.2M1129.5 601.6V628.8M1131.5 608.5V644.9M1132.5 644.9V686.9M1133.5 686.9V706.7M1134.5 691.2V706.7M1135.5 650.7V691.2M1136.5 611.9V650.7M1138.5 600.4V623.8M1139.5 623.8V666.7M1140.5 666.7V700.7M1142.5 673.1V703.5M1143.5 629.6V673.1M1144.5 601.8V629.6M1146.5 608V644.1M1147.5 644.1V686.2M1148.5 686.2V706.7M1149.5 691.9V706.8M1150.5 651.6V691.9M1151.5 612.5V651.6M1153.5 600.3V623.1M1154.5 623.1V665.8M1155.5 665.8V700.3M1157.5 673.9V703.8M1158.5 630.4V673.9M1159.5 602.1V630.4M1161.5 607.5V643.2M1162.5 643.2V685.5M1163.5 685.5V706.6M1164.5 692.5V706.8M1165.5 652.5V692.5M1166.5 613.1V652.5M1167.5 599.8V613.1M1168.5 600.2V622.3M1169.5 622.3V665M1170.5 665V699.9M1172.5 674.7V704M1173.5 631.3V674.7M1174.5 602.3V631.3M1176.5 607.1V642.3M1177.5 642.3V684.8M1178.5 684.8V706.5M1179.5 693.1V706.8M1180.5 653.4V693.1M1181.5 613.7V653.4M1182.5 599.8V613.7M1183.5 600.1V621.6M1184.5 621.6V664.1M1185.5 664.1V699.4M1187.5 675.5V704.3M1188.5 632.1V675.5M1189.5 602.6V632.1M1191.5 606.6V641.4M1192.5 641.4V684.1M1193.5 684.1V706.4M1194.5 693.7V706.8M1195.5 654.3V693.7M1196.5 614.3V654.3M1197.5 599.8V614.3M1198.5 600V620.9M1199.5 620.9V663.2M1200.5 663.2V699M1202.5 676.4V704.6M1203.5 632.9V676.4M1204.5 602.9V632.9M1206.5 606.2V640.6M1207.5 640.6V683.3M1208.5 683.3V706.3M1210.5 655.2V694.3M1211.5 614.9V655.2M1212.5 599.8V614.9M1213.5 599.9V620.2M1214.5 620.2V662.3M1215.5 662.3V698.5M1217.5 677.2V704.8M1218.5 633.7V677.2M1219.5 603.2V633.7M1221.5 605.8V639.7M1222.5 639.7V682.6M1223.5 682.6V706.2M1225.5 656.1V694.8M1226.5 615.5V656.1M1227.5 599.9V615.5M1228.5 599.9V619.5M1229.5 619.5V661.4M1230.5 661.4V698M1232.5 678V705.1M1233.5 634.6V678M1234.5 603.5V634.6M1236.5 605.4V638.8M1237.5 638.8V681.8M1238.5 681.8V706M1240.5 657V695.4M1241.5 616.1V657M1242.5 599.8V616.1M1243.5 599.8V618.8M1244.5 618.8V660.6M1245.5 660.6V697.5M1247.5 678.7V705.3M1248.5 635.4V678.7M1249.5 603.9V635.4M1251.5 605V638M1252.5 638V681.1M1253.5 681.1V705.9" fill="none" stroke="#888888" stroke-width="2.1"/><path d="M274.5 599.8V612.2M281.5 599.9V608.2M285.5 700.9V706.7M289.5 599.9V611.6M296.5 599.8V608.7M300.5 701.3V706.8M304.5 599.8V611.1M311.5 599.8V609.2M315.5 701.7V706.8M319.5 599.8V610.5M326.5 599.8V609.7M330.5 702.1V706.8M334.5 599.8V610M341.5 599.8V610.3M345.5 701.9V706.8M349.5 599.8V609.5M356.5 599.8V610.8M360.5 701.5V706.8M364.5 599.8V609M371.5 599.8V611.3M375.5 701.1V706.7M379.5 599.9V608.5M386.5 599.9V611.9M390.5 700.7V706.8M394.5 599.8V608M401.5 599.8V612.5M405.5 700.3V706.8M409.5 599.8V607.5M420.5 699.9V706.8M424.5 599.8V607.1M435.5 699.4V706.8M439.5 599.8V606.6M450.5 699V706.8M454.5 599.8V606.2M458.5 694.3V706.8M465.5 698.5V706.8M469.5 599.9V605.8M473.5 694.8V706.7M480.5 698V706.7M484.5 599.8V605.4M488.5 695.4V706.8M495.5 697.5V706.8M499.5 599.8V605M503.5 695.9V706.8M510.5 697V706.8M514.5 599.8V604.6M518.5 696.5V706.8M525.5 696.5V706.8M529.5 599.8V604.6M533.5 697V706.8M540.5 695.9V706.8M544.5 599.8V605M548.5 697.5V706.8M555.5 695.4V706.8M559.5 599.8V605.4M563.5 698V706.7M570.5 694.8V706.7M574.5 599.9V605.8M578.5 698.5V706.8M585.5 694.3V706.8M589.5 599.8V606.2M593.5 699V706.8M604.5 599.8V606.6M608.5 699.4V706.8M619.5 599.8V607.1M623.5 699.9V706.8M634.5 599.8V607.5M638.5 700.3V706.8M642.5 599.8V612.5M649.5 599.8V608M653.5 700.7V706.8M657.5 599.9V611.9M664.5 599.9V608.5M668.5 701.1V706.7M672.5 599.8V611.3M679.5 599.8V609M683.5 701.5V706.8M687.5 599.8V610.8M694.5 599.8V609.5M698.5 701.9V706.8M702.5 599.8V610.3M709.5 599.8V610M713.5 702.1V706.8M717.5 599.8V609.7M724.5 599.8V610.5M728.5 701.7V706.8M732.5 599.8V609.2M739.5 599.8V611.1M743.5 701.3V706.8M747.5 599.8V608.7M754.5 599.9V611.6M758.5 700.9V706.7M762.5 599.9V608.2M769.5 599.8V612.2M773.5 700.5V706.8M777.5 599.8V607.8M784.5 599.8V612.8M788.5 700.1V706.8M792.5 599.8V607.3M803.5 699.7V706.8M807.5 599.8V606.8M818.5 699.2V706.8M822.5 599.8V606.4M826.5 694V706.8M833.5 698.7V706.8M837.5 599.8V606M841.5 694.6V706.8M848.5 698.3V706.7M852.5 599.9V605.6M856.5 695.1V706.7M863.5 697.8V706.8M867.5 599.8V605.2M871.5 695.7V706.8M878.5 697.3V706.8M882.5 599.8V604.8M886.5 696.2V706.8M893.5 696.7V706.8M897.5 599.8V604.4M901.5 696.7V706.8M908.5 696.2V706.8M912.5 599.8V604.8M916.5 697.3V706.8M923.5 695.7V706.8M927.5 599.8V605.2M931.5 697.8V706.8M938.5 695.1V706.7M942.5 599.9V605.6M946.5 698.3V706.7M953.5 694.6V706.8M957.5 599.8V606M961.5 698.7V706.8M968.5 694V706.8M972.5 599.8V606.4M976.5 699.2V706.8M987.5 599.8V606.8M991.5 699.7V706.8M1002.5 599.8V607.3M1006.5 700.1V706.8M1010.5 599.8V612.8M1017.5 599.8V607.8M1021.5 700.5V706.8M1025.5 599.8V612.2M1032.5 599.9V608.2M1036.5 700.9V706.7M1040.5 599.9V611.6M1047.5 599.8V608.7M1051.5 701.3V706.8M1055.5 599.8V611.1M1062.5 599.8V609.2M1066.5 701.7V706.8M1070.5 599.8V610.5M1077.5 599.8V609.7M1081.5 702.1V706.8M1085.5 599.8V610M1092.5 599.8V610.3M1096.5 701.9V706.8M1100.5 599.8V609.5M1107.5 599.8V610.8M1111.5 701.5V706.8M1115.5 599.8V609M1122.5 599.8V611.3M1126.5 701.1V706.7M1130.5 599.9V608.5M1137.5 599.9V611.9M1141.5 700.7V706.8M1145.5 599.8V608M1152.5 599.8V612.5M1156.5 700.3V706.8M1160.5 599.8V607.5M1171.5 699.9V706.8M1175.5 599.8V607.1M1186.5 699.4V706.8M1190.5 599.8V606.6M1201.5 699V706.8M1205.5 599.8V606.2M1209.5 694.3V706.8M1216.5 698.5V706.8M1220.5 599.9V605.8M1224.5 694.8V706.7M1231.5 698V706.7M1235.5 599.8V605.4M1239.5 695.4V706.8M1246.5 697.5V706.8M1250.5 599.8V605M1254.5 695.9V706.8" fill="none" stroke="#e6e6e6" stroke-width="1.4"/><path d="M271.1 699.6V701.4M272.1 665.4V667.2M273.1 622.5V624.3M275.1 611.3V613.1M276.1 650.3V652.1M277.1 690.7V692.5M278.1 705.8V707.6M279.1 685.7V687.5M280.1 643.6V645.4M282.1 600.8V602.6M283.1 628.3V630.1M284.1 671.8V673.6M286.1 700V701.8M287.1 666.2V668M288.1 623.3V625.1M290.1 610.7V612.5M291.1 649.4V651.2M292.1 690V691.8M293.1 705.8V707.6M294.1 686.4V688.2M295.1 644.5V646.3M297.1 600.6V602.4M298.1 627.5V629.3M299.1 670.9V672.7M301.1 700.4V702.2M302.1 667.1V668.9M303.1 624.1V625.9M305.1 610.2V612M306.1 648.5V650.3M307.1 689.4V691.2M308.1 705.9V707.7M309.1 687.1V688.9M310.1 645.4V647.2M312.1 600.4V602.2M313.1 626.8V628.6M314.1 670.1V671.9M316.1 700.8V702.6M317.1 668V669.8M318.1 624.8V626.6M320.1 609.6V611.4M321.1 647.6V649.4M322.1 688.7V690.5M323.1 705.9V707.7M324.1 687.7V689.5M325.1 646.3V648.1M327.1 600.2V602M328.1 626V627.8M329.1 669.2V671M331.1 701.2V703M332.1 668.8V670.6M333.1 625.6V627.4M335.1 609.1V610.9M336.1 646.7V648.5M337.1 688.1V689.9M338.1 705.9V707.7M339.1 688.4V690.2M340.1 647.1V648.9M342.1 600V601.8M343.1 625.2V627M344.1 668.4V670.2M346.1 701.6V703.4M347.1 669.7V671.5M348.1 626.4V628.2M350.1 608.6V610.4M351.1 645.8V647.6M352.1 687.4V689.2M353.1 705.9V707.7M354.1 689.1V690.9M355.1 648V649.8M357.1 599.8V601.6M358.1 624.4V626.2M359.1 667.5V669.3M361.1 701.9V703.7M362.1 670.5V672.3M363.1 627.1V628.9M365.1 608.1V609.9M366.1 644.9V646.7M367.1 686.7V688.5M368.1 705.9V707.7M369.1 689.7V691.5M370.1 648.9V650.7M372.1 599.6V601.4M373.1 623.7V625.5M374.1 666.7V668.5M376.1 702.2V704M377.1 671.3V673.1M378.1 627.9V629.7M380.1 607.6V609.4M381.1 644V645.8M382.1 686V687.8M383.1 705.8V707.6M384.1 690.3V692.1M385.1 649.8V651.6M387.1 599.5V601.3M388.1 622.9V624.7M389.1 665.8V667.6M391.1 702.6V704.4M392.1 672.2V674M393.1 628.7V630.5M395.1 607.1V608.9M396.1 643.2V645M397.1 685.3V687.1M398.1 705.8V707.6M399.1 691V692.8M400.1 650.7V652.5M402.1 599.4V601.2M403.1 622.2V624M404.1 664.9V666.7M406.1 702.9V704.7M407.1 673V674.8M408.1 629.5V631.3M410.1 606.6V608.4M411.1 642.3V644.1M412.1 684.6V686.4M413.1 705.7V707.5M414.1 691.6V693.4M415.1 651.6V653.4M416.1 612.2V614M417.1 599.3V601.1M418.1 621.4V623.2M419.1 664.1V665.9M421.1 703.1V704.9M422.1 673.8V675.6M423.1 630.4V632.2M425.1 606.2V608M426.1 641.4V643.2M427.1 683.9V685.7M428.1 705.6V707.4M429.1 692.2V694M430.1 652.5V654.3M431.1 612.8V614.6M432.1 599.2V601M433.1 620.7V622.5M434.1 663.2V665M436.1 703.4V705.2M437.1 674.6V676.4M438.1 631.2V633M440.1 605.7V607.5M441.1 640.5V642.3M442.1 683.2V685M443.1 705.5V707.3M444.1 692.8V694.6M445.1 653.4V655.2M446.1 613.4V615.2M447.1 599.1V600.9M448.1 620V621.8M449.1 662.3V664.1M451.1 703.7V705.5M452.1 675.5V677.3M453.1 632V633.8M455.1 605.3V607.1M456.1 639.7V641.5M457.1 682.4V684.2M459.1 693.4V695.2M460.1 654.3V656.1M461.1 614V615.8M462.1 599V600.8M463.1 619.3V621.1M464.1 661.4V663.2M466.1 703.9V705.7M467.1 676.3V678.1M468.1 632.8V634.6M470.1 604.9V606.7M471.1 638.8V640.6M472.1 681.7V683.5M474.1 693.9V695.7M475.1 655.2V657M476.1 614.6V616.4M477.1 599V600.8M478.1 618.6V620.4M479.1 660.5V662.3M481.1 704.2V706M482.1 677.1V678.9M483.1 633.7V635.5M485.1 604.5V606.3M486.1 637.9V639.7M487.1 680.9V682.7M489.1 694.5V696.3M490.1 656.1V657.9M491.1 615.2V617M492.1 598.9V600.7M493.1 617.9V619.7M494.1 659.7V661.5M496.1 704.4V706.2M497.1 677.8V679.6M498.1 634.5V636.3M500.1 604.1V605.9M501.1 637.1V638.9M502.1 680.2V682M504.1 695V696.8M505.1 657V658.8M506.1 615.9V617.7M507.1 598.9V600.7M508.1 617.2V619M509.1 658.8V660.6M511.1 704.6V706.4M512.1 678.6V680.4M513.1 635.4V637.2M515.1 603.7V605.5M516.1 636.2V638M517.1 679.4V681.2M519.1 695.6V697.4M520.1 657.9V659.7M521.1 616.6V618.4M522.1 598.9V600.7M523.1 616.6V618.4M524.1 657.9V659.7M526.1 704.8V706.6M527.1 679.4V681.2M528.1 636.2V638M530.1 603.3V605.1M531.1 635.4V637.2M532.1 678.6V680.4M534.1 696.1V697.9M535.1 658.8V660.6M536.1 617.2V619M537.1 598.9V600.7M538.1 615.9V617.7M539.1 657V658.8M541.1 705V706.8M542.1 680.2V682M543.1 637.1V638.9M545.1 603V604.8M546.1 634.5V636.3M547.1 677.8V679.6M549.1 696.6V698.4M550.1 659.7V661.5M551.1 617.9V619.7M552.1 598.9V600.7M553.1 615.2V617M554.1 656.1V657.9M556.1 705.1V706.9M557.1 680.9V682.7M558.1 637.9V639.7M560.1 602.6V604.4M561.1 633.7V635.5M562.1 677.1V678.9M564.1 697.1V698.9M565.1 660.5V662.3M566.1 618.6V620.4M567.1 599V600.8M568.1 614.6V616.4M569.1 655.2V657M571.1 705.3V707.1M572.1 681.7V683.5M573.1 638.8V640.6M575.1 602.3V604.1M576.1 632.8V634.6M577.1 676.3V678.1M579.1 697.6V699.4M580.1 661.4V663.2M581.1 619.3V621.1M582.1 599V600.8M583.1 614V615.8M584.1 654.3V656.1M586.1 705.4V707.2M587.1 682.4V684.2M588.1 639.7V641.5M590.1 602V603.8M591.1 632V633.8M592.1 675.5V677.3M594.1 698.1V699.9M595.1 662.3V664.1M596.1 620V621.8M597.1 599.1V600.9M598.1 613.4V615.2M599.1 653.4V655.2M600.1 692.8V694.6M601.1 705.5V707.3M602.1 683.2V685M603.1 640.5V642.3M605.1 601.7V603.5M606.1 631.2V633M607.1 674.6V676.4M609.1 698.5V700.3M610.1 663.2V665M611.1 620.7V622.5M612.1 599.2V601M613.1 612.8V614.6M614.1 652.5V654.3M615.1 692.2V694M616.1 705.6V707.4M617.1 683.9V685.7M618.1 641.4V643.2M620.1 601.4V603.2M621.1 630.4V632.2M622.1 673.8V675.6M624.1 699V700.8M625.1 664.1V665.9M626.1 621.4V623.2M627.1 599.3V601.1M628.1 612.2V614M629.1 651.6V653.4M630.1 691.6V693.4M631.1 705.7V707.5M632.1 684.6V686.4M633.1 642.3V644.1M635.1 601.2V603M636.1 629.5V631.3M637.1 673V674.8M639.1 699.4V701.2M640.1 664.9V666.7M641.1 622.2V624M643.1 611.6V613.4M644.1 650.7V652.5M645.1 691V692.8M646.1 705.8V707.6M647.1 685.3V687.1M648.1 643.2V645M650.1 600.9V602.7M651.1 628.7V630.5M652.1 672.2V674M654.1 699.8V701.6M655.1 665.8V667.6M656.1 622.9V624.7M658.1 611V612.8M659.1 649.8V651.6M660.1 690.3V692.1M661.1 705.8V707.6M662.1 686V687.8M663.1 644V645.8M665.1 600.7V602.5M666.1 627.9V629.7M667.1 671.3V673.1M669.1 700.2V702M670.1 666.7V668.5M671.1 623.7V625.5M673.1 610.4V612.2M674.1 648.9V650.7M675.1 689.7V691.5M676.1 705.9V707.7M677.1 686.7V688.5M678.1 644.9V646.7M680.1 600.5V602.3M681.1 627.1V628.9M682.1 670.5V672.3M684.1 700.6V702.4M685.1 667.5V669.3M686.1 624.4V626.2M688.1 609.9V611.7M689.1 648V649.8M690.1 689.1V690.9M691.1 705.9V707.7M692.1 687.4V689.2M693.1 645.8V647.6M695.1 600.3V602.1M696.1 626.4V628.2M697.1 669.7V671.5M699.1 701V702.8M700.1 668.4V670.2M701.1 625.2V627M703.1 609.4V611.2M704.1 647.1V648.9M705.1 688.4V690.2M706.1 705.9V707.7M707.1 688.1V689.9M708.1 646.7V648.5M710.1 600.1V601.9M711.1 625.6V627.4M712.1 668.8V670.6M714.1 701.4V703.2M715.1 669.2V671M716.1 626V627.8M718.1 608.8V610.6M719.1 646.3V648.1M720.1 687.7V689.5M721.1 705.9V707.7M722.1 688.7V690.5M723.1 647.6V649.4M725.1 599.9V601.7M726.1 624.8V626.6M727.1 668V669.8M729.1 701.7V703.5M730.1 670.1V671.9M731.1 626.8V628.6M733.1 608.3V610.1M734.1 645.4V647.2M735.1 687.1V688.9M736.1 705.9V707.7M737.1 689.4V691.2M738.1 648.5V650.3M740.1 599.7V601.5M741.1 624.1V625.9M742.1 667.1V668.9M744.1 702.1V703.9M745.1 670.9V672.7M746.1 627.5V629.3M748.1 607.8V609.6M749.1 644.5V646.3M750.1 686.4V688.2M751.1 705.8V707.6M752.1 690V691.8M753.1 649.4V651.2M755.1 599.6V601.4M756.1 623.3V625.1M757.1 666.2V668M759.1 702.4V704.2M760.1 671.8V673.6M761.1 628.3V630.1M763.1 607.3V609.1M764.1 643.6V645.4M765.1 685.7V687.5M766.1 705.8V707.6M767.1 690.7V692.5M768.1 650.3V652.1M770.1 599.4V601.2M771.1 622.5V624.3M772.1 665.4V667.2M774.1 702.7V704.5M775.1 672.6V674.4M776.1 629.1V630.9M778.1 606.9V608.7M779.1 642.7V644.5M780.1 685V686.8M781.1 705.7V707.5M782.1 691.3V693.1M783.1 651.2V653M785.1 599.3V601.1M786.1 621.8V623.6M787.1 664.5V666.3M789.1 703V704.8M790.1 673.4V675.2M791.1 630V631.8M793.1 606.4V608.2M794.1 641.8V643.6M795.1 684.3V686.1M796.1 705.7V707.5M797.1 691.9V693.7M798.1 652.1V653.9M799.1 612.5V614.3M800.1 599.2V601M801.1 621.1V622.9M802.1 663.6V665.4M804.1 703.3V705.1M805.1 674.2V676M806.1 630.8V632.6M808.1 605.9V607.7M809.1 641V642.8M810.1 683.5V685.3M811.1 705.6V707.4M812.1 692.5V694.3M813.1 653V654.8M814.1 613.1V614.9M815.1 599.1V600.9M816.1 620.4V622.2M817.1 662.7V664.5M819.1 703.6V705.4M820.1 675V676.8M821.1 631.6V633.4M823.1 605.5V607.3M824.1 640.1V641.9M825.1 682.8V684.6M827.1 693.1V694.9M828.1 653.9V655.7M829.1 613.7V615.5M830.1 599.1V600.9M831.1 619.6V621.4M832.1 661.9V663.7M834.1 703.8V705.6M835.1 675.9V677.7M836.1 632.4V634.2M838.1 605.1V606.9M839.1 639.2V641M840.1 682.1V683.9M842.1 693.7V695.5M843.1 654.7V656.5M844.1 614.3V616.1M845.1 599V600.8M846.1 618.9V620.7M847.1 661V662.8M849.1 704.1V705.9M850.1 676.7V678.5M851.1 633.3V635.1M853.1 604.7V606.5M854.1 638.4V640.2M855.1 681.3V683.1M857.1 694.2V696M858.1 655.6V657.4M859.1 614.9V616.7M860.1 598.9V600.7M861.1 618.2V620M862.1 660.1V661.9M864.1 704.3V706.1M865.1 677.5V679.3M866.1 634.1V635.9M868.1 604.3V606.1M869.1 637.5V639.3M870.1 680.6V682.4M872.1 694.8V696.6M873.1 656.5V658.3M874.1 615.6V617.4M875.1 598.9V600.7M876.1 617.6V619.4M877.1 659.2V661M879.1 704.5V706.3M880.1 678.2V680M881.1 634.9V636.7M883.1 603.9V605.7M884.1 636.6V638.4M885.1 679.8V681.6M887.1 695.3V697.1M888.1 657.4V659.2M889.1 616.2V618M890.1 598.9V600.7M891.1 616.9V618.7M892.1 658.3V660.1M894.1 704.7V706.5M895.1 679V680.8M896.1 635.8V637.6M898.1 603.5V605.3M899.1 635.8V637.6M900.1 679V680.8M902.1 695.8V697.6M903.1 658.3V660.1M904.1 616.9V618.7M905.1 598.9V600.7M906.1 616.2V618M907.1 657.4V659.2M909.1 704.9V706.7M910.1 679.8V681.6M911.1 636.6V638.4M913.1 603.2V605M914.1 634.9V636.7M915.1 678.2V680M917.1 696.4V698.2M918.1 659.2V661M919.1 617.6V619.4M920.1 598.9V600.7M921.1 615.6V617.4M922.1 656.5V658.3M924.1 705V706.8M925.1 680.6V682.4M926.1 637.5V639.3M928.1 602.8V604.6M929.1 634.1V635.9M930.1 677.5V679.3M932.1 696.9V698.7M933.1 660.1V661.9M934.1 618.2V620M935.1 598.9V600.7M936.1 614.9V616.7M937.1 655.6V657.4M939.1 705.2V707M940.1 681.3V683.1M941.1 638.4V640.2M943.1 602.5V604.3M944.1 633.3V635.1M945.1 676.7V678.5M947.1 697.4V699.2M948.1 661V662.8M949.1 618.9V620.7M950.1 599V600.8M951.1 614.3V616.1M952.1 654.7V656.5M954.1 705.3V707.1M955.1 682.1V683.9M956.1 639.2V641M958.1 602.2V604M959.1 632.4V634.2M960.1 675.9V677.7M962.1 697.8V699.6M963.1 661.9V663.7M964.1 619.6V621.4M965.1 599.1V600.9M966.1 613.7V615.5M967.1 653.9V655.7M969.1 705.5V707.3M970.1 682.8V684.6M971.1 640.1V641.9M973.1 601.9V603.7M974.1 631.6V633.4M975.1 675V676.8M977.1 698.3V700.1M978.1 662.7V664.5M979.1 620.4V622.2M980.1 599.1V600.9M981.1 613.1V614.9M982.1 653V654.8M983.1 692.5V694.3M984.1 705.6V707.4M985.1 683.5V685.3M986.1 641V642.8M988.1 601.6V603.4M989.1 630.8V632.6M990.1 674.2V676M992.1 698.8V700.6M993.1 663.6V665.4M994.1 621.1V622.9M995.1 599.2V601M996.1 612.5V614.3M997.1 652.1V653.9M998.1 691.9V693.7M999.1 705.7V707.5M1000.1 684.3V686.1M1001.1 641.8V643.6M1003.1 601.3V603.1M1004.1 630V631.8M1005.1 673.4V675.2M1007.1 699.2V701M1008.1 664.5V666.3M1009.1 621.8V623.6M1011.1 611.9V613.7M1012.1 651.2V653M1013.1 691.3V693.1M1014.1 705.7V707.5M1015.1 685V686.8M1016.1 642.7V644.5M1018.1 601V602.8M1019.1 629.1V630.9M1020.1 672.6V674.4M1022.1 699.6V701.4M1023.1 665.4V667.2M1024.1 622.5V624.3M1026.1 611.3V613.1M1027.1 650.3V652.1M1028.1 690.7V692.5M1029.1 705.8V707.6M1030.1 685.7V687.5M1031.1 643.6V645.4M1033.1 600.8V602.6M1034.1 628.3V630.1M1035.1 671.8V673.6M1037.1 700V701.8M1038.1 666.2V668M1039.1 623.3V625.1M1041.1 610.7V612.5M1042.1 649.4V651.2M1043.1 690V691.8M1044.1 705.8V707.6M1045.1 686.4V688.2M1046.1 644.5V646.3M1048.1 600.6V602.4M1049.1 627.5V629.3M1050.1 670.9V672.7M1052.1 700.4V702.2M1053.1 667.1V668.9M1054.1 624.1V625.9M1056.1 610.2V612M1057.1 648.5V650.3M1058.1 689.4V691.2M1059.1 705.9V707.7M1060.1 687.1V688.9M1061.1 645.4V647.2M1063.1 600.4V602.2M1064.1 626.8V628.6M1065.1 670.1V671.9M1067.1 700.8V702.6M1068.1 668V669.8M1069.1 624.8V626.6M1071.1 609.6V611.4M1072.1 647.6V649.4M1073.1 688.7V690.5M1074.1 705.9V707.7M1075.1 687.7V689.5M1076.1 646.3V648.1M1078.1 600.2V602M1079.1 626V627.8M1080.1 669.2V671M1082.1 701.2V703M1083.1 668.8V670.6M1084.1 625.6V627.4M1086.1 609.1V610.9M1087.1 646.7V648.5M1088.1 688.1V689.9M1089.1 705.9V707.7M1090.1 688.4V690.2M1091.1 647.1V648.9M1093.1 600V601.8M1094.1 625.2V627M1095.1 668.4V670.2M1097.1 701.6V703.4M1098.1 669.7V671.5M1099.1 626.4V628.2M1101.1 608.6V610.4M1102.1 645.8V647.6M1103.1 687.4V689.2M1104.1 705.9V707.7M1105.1 689.1V690.9M1106.1 648V649.8M1108.1 599.8V601.6M1109.1 624.4V626.2M1110.1 667.5V669.3M1112.1 701.9V703.7M1113.1 670.5V672.3M1114.1 627.1V628.9M1116.1 608.1V609.9M1117.1 644.9V646.7M1118.1 686.7V688.5M1119.1 705.9V707.7M1120.1 689.7V691.5M1121.1 648.9V650.7M1123.1 599.6V601.4M1124.1 623.7V625.5M1125.1 666.7V668.5M1127.1 702.2V704M1128.1 671.3V673.1M1129.1 627.9V629.7M1131.1 607.6V609.4M1132.1 644V645.8M1133.1 686V687.8M1134.1 705.8V707.6M1135.1 690.3V692.1M1136.1 649.8V651.6M1138.1 599.5V601.3M1139.1 622.9V624.7M1140.1 665.8V667.6M1142.1 702.6V704.4M1143.1 672.2V674M1144.1 628.7V630.5M1146.1 607.1V608.9M1147.1 643.2V645M1148.1 685.3V687.1M1149.1 705.8V707.6M1150.1 691V692.8M1151.1 650.7V652.5M1153.1 599.4V601.2M1154.1 622.2V624M1155.1 664.9V666.7M1157.1 702.9V704.7M1158.1 673V674.8M1159.1 629.5V631.3M1161.1 606.6V608.4M1162.1 642.3V644.1M1163.1 684.6V686.4M1164.1 705.7V707.5M1165.1 691.6V693.4M1166.1 651.6V653.4M1167.1 612.2V614M1168.1 599.3V601.1M1169.1 621.4V623.2M1170.1 664.1V665.9M1172.1 703.1V704.9M1173.1 673.8V675.6M1174.1 630.4V632.2M1176.1 606.2V608M1177.1 641.4V643.2M1178.1 683.9V685.7M1179.1 705.6V707.4M1180.1 692.2V694M1181.1 652.5V654.3M1182.1 612.8V614.6M1183.1 599.2V601M1184.1 620.7V622.5M1185.1 663.2V665M1187.1 703.4V705.2M1188.1 674.6V676.4M1189.1 631.2V633M1191.1 605.7V607.5M1192.1 640.5V642.3M1193.1 683.2V685M1194.1 705.5V707.3M1195.1 692.8V694.6M1196.1 653.4V655.2M1197.1 613.4V615.2M1198.1 599.1V600.9M1199.1 620V621.8M1200.1 662.3V664.1M1202.1 703.7V705.5M1203.1 675.5V677.3M1204.1 632V633.8M1206.1 605.3V607.1M1207.1 639.7V641.5M1208.1 682.4V684.2M1210.1 693.4V695.2M1211.1 654.3V656.1M1212.1 614V615.8M1213.1 599V600.8M1214.1 619.3V621.1M1215.1 661.4V663.2M1217.1 703.9V705.7M1218.1 676.3V678.1M1219.1 632.8V634.6M1221.1 604.9V606.7M1222.1 638.8V640.6M1223.1 681.7V683.5M1225.1 693.9V695.7M1226.1 655.2V657M1227.1 614.6V616.4M1228.1 599V600.8M1229.1 618.6V620.4M1230.1 660.5V662.3M1232.1 704.2V706M1233.1 677.1V678.9M1234.1 633.7V635.5M1236.1 604.5V606.3M1237.1 637.9V639.7M1238.1 680.9V682.7M1240.1 694.5V696.3M1241.1 656.1V657.9M1242.1 615.2V617M1243.1 598.9V600.7M1244.1 617.9V619.7M1245.1 659.7V661.5M1247.1 704.4V706.2M1248.1 677.8V679.6M1249.1 634.5V636.3M1251.1 604.1V605.9M1252.1 637.1V638.9M1253.1 680.2V682" fill="none" stroke="#e6e6e6" stroke-width="1.3"/><text x="280.5" y="603.7" font-size="11.6" font-weight="bold" fill="#fff" stroke="#1b1b1b" stroke-width="4" stroke-linejoin="round" paint-order="stroke">10 V</text><text x="280.5" y="657.2" font-size="11.6" font-weight="bold" fill="#fff" stroke="#1b1b1b" stroke-width="4" stroke-linejoin="round" paint-order="stroke">0 V</text><text x="280.5" y="710.7" font-size="11.6" font-weight="bold" fill="#fff" stroke="#1b1b1b" stroke-width="4" stroke-linejoin="round" paint-order="stroke">-10 V</text><path d="M271 732.9H1255M271 840.7H1255" stroke="#4c4c54" stroke-width="1.2" stroke-dasharray="6 4" fill="none"/><path d="M271 786.8H1255" stroke="#333338" stroke-width="1.2"/><path d="M271 737.6L272 735.9L273 734.6L274 733.7L275 733.1L276 732.9L277 733.1L278 733.7L279 734.6L280 735.9L281 737.6L282 739.6L283 741.9L284 744.6L285 747.5L286 750.7L287 754.2L288 757.9L289 761.8L290 765.9L291 770.1L292 774.5L293 778.9L294 783.4L295 787.9L296 792.4L297 796.9L298 801.3L299 805.6L300 809.7L301 813.8L302 817.6L303 821.2L304 824.5L305 827.6L306 830.4L307 832.9L308 835.1L309 836.9L310 838.4L311 839.5L312 840.3L313 840.7L314 840.7L315 840.3L316 839.5L317 838.4L318 836.9L319 835.1L320 832.9L321 830.4L322 827.6L323 824.5L324 821.2L325 817.6L326 813.7L327 809.7L328 805.6L329 801.3L330 796.9L331 792.4L332 787.9L333 783.4L334 778.9L335 774.5L336 770.1L337 765.9L338 761.8L339 757.9L340 754.2L341 750.7L342 747.5L343 744.6L344 741.9L345 739.6L346 737.6L347 735.9L348 734.6L349 733.7L350 733.1L351 732.9L352 733.1L353 733.7L354 734.6L355 735.9L356 737.6L357 739.6L358 741.9L359 744.6L360 747.5L361 750.7L362 754.2L363 757.9L364 761.8L365 765.9L366 770.1L367 774.5L368 778.9L369 783.4L370 787.9L371 792.4L372 796.9L373 801.3L374 805.6L375 809.7L376 813.8L377 817.6L378 821.2L379 824.5L380 827.6L381 830.4L382 832.9L383 835.1L384 836.9L385 838.4L386 839.5L387 840.3L388 840.7L389 840.7L390 840.3L391 839.5L392 838.4L393 836.9L394 835.1L395 832.9L396 830.4L397 827.6L398 824.5L399 821.2L400 817.6L401 813.8L402 809.7L403 805.6L404 801.3L405 796.9L406 792.4L407 787.9L408 783.4L409 778.9L410 774.5L411 770.1L412 765.9L413 761.8L414 757.9L415 754.2L416 750.7L417 747.5L418 744.6L419 741.9L420 739.6L421 737.6L422 735.9L423 734.6L424 733.7L425 733.1L426 732.9L427 733.1L428 733.7L429 734.6L430 735.9L431 737.6L432 739.6L433 741.9L434 744.6L435 747.5L436 750.7L437 754.2L438 757.9L439 761.8L440 765.9L441 770.1L442 774.5L443 778.9L444 783.4L445 787.9L446 792.4L447 796.9L448 801.3L449 805.6L450 809.7L451 813.7L452 817.6L453 821.2L454 824.5L455 827.6L456 830.4L457 832.9L458 835.1L459 836.9L460 838.4L461 839.5L462 840.3L463 840.7L464 840.7L465 840.3L466 839.5L467 838.4L468 836.9L469 835.1L470 832.9L471 830.4L472 827.6L473 824.5L474 821.2L475 817.6L476 813.7L477 809.7L478 805.6L479 801.3L480 796.9L481 792.4L482 787.9L483 783.4L484 778.9L485 774.5L486 770.1L487 765.9L488 761.8L489 757.9L490 754.2L491 750.7L492 747.5L493 744.6L494 741.9L495 739.6L496 737.6L497 735.9L498 734.6L499 733.7L500 733.1L501 732.9L502 733.1L503 733.7L504 734.6L505 735.9L506 737.6L507 739.6L508 741.9L509 744.6L510 747.5L511 750.7L512 754.2L513 757.9L514 761.8L515 765.9L516 770.1L517 774.5L518 778.9L519 783.4L520 787.9L521 792.4L522 796.9L523 801.3L524 805.6L525 809.7L526 813.7L527 817.6L528 821.2L529 824.5L530 827.6L531 830.4L532 832.9L533 835.1L534 836.9L535 838.4L536 839.5L537 840.3L538 840.7L539 840.7L540 840.3L541 839.5L542 838.4L543 836.9L544 835.1L545 832.9L546 830.4L547 827.6L548 824.5L549 821.2L550 817.6L551 813.7L552 809.7L553 805.6L554 801.3L555 796.9L556 792.4L557 787.9L558 783.4L559 778.9L560 774.5L561 770.1L562 765.9L563 761.8L564 757.9L565 754.2L566 750.7L567 747.5L568 744.6L569 741.9L570 739.6L571 737.6L572 735.9L573 734.6L574 733.7L575 733.1L576 732.9L577 733.1L578 733.7L579 734.6L580 735.9L581 737.6L582 739.6L583 741.9L584 744.6L585 747.5L586 750.7L587 754.2L588 757.9L589 761.8L590 765.9L591 770.1L592 774.5L593 778.9L594 783.4L595 787.9L596 792.4L597 796.9L598 801.3L599 805.6L600 809.7L601 813.7L602 817.6L603 821.2L604 824.5L605 827.6L606 830.4L607 832.9L608 835.1L609 836.9L610 838.4L611 839.5L612 840.3L613 840.7L614 840.7L615 840.3L616 839.5L617 838.4L618 836.9L619 835.1L620 832.9L621 830.4L622 827.6L623 824.5L624 821.2L625 817.6L626 813.8L627 809.7L628 805.6L629 801.3L630 796.9L631 792.4L632 787.9L633 783.4L634 778.9L635 774.5L636 770.1L637 765.9L638 761.8L639 757.9L640 754.2L641 750.7L642 747.5L643 744.6L644 741.9L645 739.6L646 737.6L647 735.9L648 734.6L649 733.7L650 733.1L651 732.9L652 733.1L653 733.7L654 734.6L655 735.9L656 737.6L657 739.6L658 741.9L659 744.6L660 747.5L661 750.7L662 754.2L663 757.9L664 761.8L665 765.9L666 770.1L667 774.5L668 778.9L669 783.4L670 787.9L671 792.4L672 796.9L673 801.3L674 805.6L675 809.7L676 813.8L677 817.6L678 821.2L679 824.5L680 827.6L681 830.4L682 832.9L683 835.1L684 836.9L685 838.4L686 839.5L687 840.3L688 840.7L689 840.7L690 840.3L691 839.5L692 838.4L693 836.9L694 835.1L695 832.9L696 830.4L697 827.6L698 824.5L699 821.2L700 817.6L701 813.8L702 809.7L703 805.6L704 801.3L705 796.9L706 792.4L707 787.9L708 783.4L709 778.9L710 774.5L711 770.1L712 765.9L713 761.8L714 757.9L715 754.2L716 750.7L717 747.5L718 744.6L719 741.9L720 739.6L721 737.6L722 735.9L723 734.6L724 733.7L725 733.1L726 732.9L727 733.1L728 733.7L729 734.6L730 735.9L731 737.6L732 739.6L733 741.9L734 744.6L735 747.5L736 750.7L737 754.2L738 757.9L739 761.8L740 765.9L741 770.1L742 774.5L743 778.9L744 783.4L745 787.9L746 792.4L747 796.9L748 801.3L749 805.6L750 809.7L751 813.8L752 817.6L753 821.2L754 824.5L755 827.6L756 830.4L757 832.9L758 835.1L759 836.9L760 838.4L761 839.5L762 840.3L763 840.7L764 840.7L765 840.3L766 839.5L767 838.4L768 836.9L769 835.1L770 832.9L771 830.4L772 827.6L773 824.5L774 821.2L775 817.6L776 813.8L777 809.7L778 805.6L779 801.3L780 796.9L781 792.4L782 787.9L783 783.4L784 778.9L785 774.5L786 770.1L787 765.9L788 761.8L789 757.9L790 754.2L791 750.7L792 747.5L793 744.6L794 741.9L795 739.6L796 737.6L797 735.9L798 734.6L799 733.7L800 733.1L801 732.9L802 733.1L803 733.7L804 734.6L805 735.9L806 737.6L807 739.6L808 741.9L809 744.6L810 747.5L811 750.7L812 754.2L813 757.9L814 761.8L815 765.9L816 770.1L817 774.5L818 778.9L819 783.4L820 787.9L821 792.4L822 796.9L823 801.3L824 805.6L825 809.7L826 813.8L827 817.6L828 821.2L829 824.5L830 827.6L831 830.4L832 832.9L833 835.1L834 836.9L835 838.4L836 839.5L837 840.3L838 840.7L839 840.7L840 840.3L841 839.5L842 838.4L843 836.9L844 835.1L845 832.9L846 830.4L847 827.6L848 824.5L849 821.2L850 817.6L851 813.8L852 809.7L853 805.6L854 801.3L855 796.9L856 792.4L857 787.9L858 783.4L859 778.9L860 774.5L861 770.1L862 765.9L863 761.8L864 757.9L865 754.2L866 750.7L867 747.5L868 744.6L869 741.9L870 739.6L871 737.6L872 735.9L873 734.6L874 733.7L875 733.1L876 732.9L877 733.1L878 733.7L879 734.6L880 735.9L881 737.6L882 739.6L883 741.9L884 744.6L885 747.5L886 750.7L887 754.2L888 757.9L889 761.8L890 765.9L891 770.1L892 774.5L893 778.9L894 783.4L895 787.9L896 792.4L897 796.9L898 801.3L899 805.6L900 809.7L901 813.8L902 817.6L903 821.2L904 824.5L905 827.6L906 830.4L907 832.9L908 835.1L909 836.9L910 838.4L911 839.5L912 840.3L913 840.7L914 840.7L915 840.3L916 839.5L917 838.4L918 836.9L919 835.1L920 832.9L921 830.4L922 827.6L923 824.5L924 821.2L925 817.6L926 813.8L927 809.7L928 805.6L929 801.3L930 796.9L931 792.4L932 787.9L933 783.4L934 778.9L935 774.5L936 770.1L937 765.9L938 761.8L939 757.9L940 754.2L941 750.7L942 747.5L943 744.6L944 741.9L945 739.6L946 737.6L947 735.9L948 734.6L949 733.7L950 733.1L951 732.9L952 733.1L953 733.7L954 734.6L955 735.9L956 737.6L957 739.6L958 741.9L959 744.6L960 747.5L961 750.7L962 754.2L963 757.9L964 761.8L965 765.9L966 770.1L967 774.5L968 778.9L969 783.4L970 787.9L971 792.4L972 796.9L973 801.3L974 805.6L975 809.7L976 813.7L977 817.6L978 821.2L979 824.5L980 827.6L981 830.4L982 832.9L983 835.1L984 836.9L985 838.4L986 839.5L987 840.3L988 840.7L989 840.7L990 840.3L991 839.5L992 838.4L993 836.9L994 835.1L995 832.9L996 830.4L997 827.6L998 824.5L999 821.2L1000 817.6L1001 813.8L1002 809.7L1003 805.6L1004 801.3L1005 796.9L1006 792.4L1007 787.9L1008 783.4L1009 778.9L1010 774.5L1011 770.1L1012 765.9L1013 761.8L1014 757.9L1015 754.2L1016 750.7L1017 747.5L1018 744.6L1019 741.9L1020 739.6L1021 737.6L1022 735.9L1023 734.6L1024 733.7L1025 733.1L1026 732.9L1027 733.1L1028 733.7L1029 734.6L1030 735.9L1031 737.6L1032 739.6L1033 741.9L1034 744.6L1035 747.5L1036 750.7L1037 754.2L1038 757.9L1039 761.8L1040 765.9L1041 770.1L1042 774.5L1043 778.9L1044 783.4L1045 787.9L1046 792.4L1047 796.9L1048 801.3L1049 805.6L1050 809.7L1051 813.7L1052 817.6L1053 821.2L1054 824.5L1055 827.6L1056 830.4L1057 832.9L1058 835.1L1059 836.9L1060 838.4L1061 839.5L1062 840.3L1063 840.7L1064 840.7L1065 840.3L1066 839.5L1067 838.4L1068 836.9L1069 835.1L1070 832.9L1071 830.4L1072 827.6L1073 824.5L1074 821.2L1075 817.6L1076 813.7L1077 809.7L1078 805.6L1079 801.3L1080 796.9L1081 792.4L1082 787.9L1083 783.4L1084 778.9L1085 774.5L1086 770.1L1087 765.9L1088 761.8L1089 757.9L1090 754.2L1091 750.7L1092 747.5L1093 744.6L1094 741.9L1095 739.6L1096 737.6L1097 735.9L1098 734.6L1099 733.7L1100 733.1L1101 732.9L1102 733.1L1103 733.7L1104 734.6L1105 735.9L1106 737.6L1107 739.6L1108 741.9L1109 744.6L1110 747.5L1111 750.7L1112 754.2L1113 757.9L1114 761.8L1115 765.9L1116 770.1L1117 774.5L1118 778.9L1119 783.4L1120 787.9L1121 792.4L1122 796.9L1123 801.3L1124 805.6L1125 809.7L1126 813.7L1127 817.6L1128 821.2L1129 824.5L1130 827.6L1131 830.4L1132 832.9L1133 835.1L1134 836.9L1135 838.4L1136 839.5L1137 840.3L1138 840.7L1139 840.7L1140 840.3L1141 839.5L1142 838.4L1143 836.9L1144 835.1L1145 832.9L1146 830.4L1147 827.6L1148 824.5L1149 821.2L1150 817.6L1151 813.8L1152 809.7L1153 805.6L1154 801.3L1155 796.9L1156 792.4L1157 787.9L1158 783.4L1159 778.9L1160 774.5L1161 770.1L1162 765.9L1163 761.8L1164 757.9L1165 754.2L1166 750.7L1167 747.5L1168 744.6L1169 741.9L1170 739.6L1171 737.6L1172 735.9L1173 734.6L1174 733.7L1175 733.1L1176 732.9L1177 733.1L1178 733.7L1179 734.6L1180 735.9L1181 737.6L1182 739.6L1183 741.9L1184 744.6L1185 747.5L1186 750.7L1187 754.2L1188 757.9L1189 761.8L1190 765.9L1191 770.1L1192 774.5L1193 778.9L1194 783.4L1195 787.9L1196 792.4L1197 796.9L1198 801.3L1199 805.6L1200 809.7L1201 813.7L1202 817.6L1203 821.2L1204 824.5L1205 827.6L1206 830.4L1207 832.9L1208 835.1L1209 836.9L1210 838.4L1211 839.5L1212 840.3L1213 840.7L1214 840.7L1215 840.3L1216 839.5L1217 838.4L1218 836.9L1219 835.1L1220 832.9L1221 830.4L1222 827.6L1223 824.5L1224 821.2L1225 817.6L1226 813.7L1227 809.7L1228 805.6L1229 801.3L1230 796.9L1231 792.4L1232 787.9L1233 783.4L1234 778.9L1235 774.5L1236 770.1L1237 765.9L1238 761.8L1239 757.9L1240 754.2L1241 750.7L1242 747.5L1243 744.6L1244 741.9L1245 739.6L1246 737.6L1247 735.9L1248 734.6L1249 733.7L1250 733.1L1251 732.9L1252 733.1L1253 733.7L1254 734.6L1255 735.9" fill="none" stroke="#caa280" stroke-width="1.85" stroke-linejoin="round"/><text x="280.5" y="736.8" font-size="11.6" font-weight="bold" fill="#fff" stroke="#1b1b1b" stroke-width="4" stroke-linejoin="round" paint-order="stroke">10 V</text><text x="280.5" y="790.7" font-size="11.6" font-weight="bold" fill="#fff" stroke="#1b1b1b" stroke-width="4" stroke-linejoin="round" paint-order="stroke">0 V</text><text x="280.5" y="844.6" font-size="11.6" font-weight="bold" fill="#fff" stroke="#1b1b1b" stroke-width="4" stroke-linejoin="round" paint-order="stroke">-10 V</text><path d="M271 867H1255M271 974H1255" stroke="#4c4c54" stroke-width="1.2" stroke-dasharray="6 4" fill="none"/><path d="M271 920.5H1255" stroke="#333338" stroke-width="1.2"/><path d="M271.5 937.9V968.9M272.5 894.8V937.9M273.5 868.4V894.8M275.5 876.6V913.8M276.5 913.8V955M277.5 955V972.7M278.5 955.7V972.7M279.5 916.3V955.7M280.5 881.2V916.3M282.5 873.2V896.3M283.5 896.3V933.5M284.5 933.5V959.8M286.5 933.6V958.9M287.5 902.3V933.6M288.5 885.8V902.3M290.5 893V916.6M291.5 916.6V939.5M294.5 918.6V937.4M295.5 904.4V918.6M328.5 909.6V927.2M329.5 927.2V943.6M331.5 930.4V946.1M332.5 905V930.4M333.5 887V905M335.5 890.5V915.7M336.5 915.7V947M337.5 947V962.9M339.5 916.7V950.7M340.5 882.8V916.7M342.5 872.7V894.7M343.5 894.7V935.2M344.5 935.2V967.4M346.5 937.9V968.9M347.5 894.8V937.9M348.5 868.4V894.8M350.5 876.6V913.8M351.5 913.8V955M352.5 955V972.7M353.5 955.7V972.7M354.5 916.3V955.7M355.5 881.2V916.3M357.5 873.2V896.3M358.5 896.3V933.5M359.5 933.5V959.8M361.5 933.6V958.9M362.5 902.3V933.6M363.5 885.8V902.3M365.5 893V916.6M366.5 916.6V939.5M369.5 918.6V937.4M370.5 904.4V918.6M403.5 909.6V927.2M404.5 927.2V943.6M406.5 930.4V946.1M407.5 905V930.4M408.5 887V905M410.5 890.5V915.7M411.5 915.7V947M412.5 947V962.9M414.5 916.7V950.7M415.5 882.8V916.7M417.5 872.7V894.7M418.5 894.7V935.2M419.5 935.2V967.4M421.5 937.9V968.9M422.5 894.8V937.9M423.5 868.4V894.8M425.5 876.6V913.8M426.5 913.8V955M427.5 955V972.7M428.5 955.7V972.7M429.5 916.3V955.7M430.5 881.2V916.3M432.5 873.2V896.3M433.5 896.3V933.5M434.5 933.5V959.8M436.5 933.6V958.9M437.5 902.3V933.6M438.5 885.8V902.3M440.5 893V916.6M441.5 916.6V939.5M444.5 918.6V937.4M445.5 904.4V918.6M478.5 909.6V927.2M479.5 927.2V943.6M481.5 930.4V946.1M482.5 905V930.4M483.5 887V905M485.5 890.5V915.7M486.5 915.7V947M487.5 947V962.9M489.5 916.7V950.7M490.5 882.8V916.7M492.5 872.7V894.7M493.5 894.7V935.2M494.5 935.2V967.4M496.5 937.9V968.9M497.5 894.8V937.9M498.5 868.4V894.8M500.5 876.6V913.8M501.5 913.8V955M502.5 955V972.7M503.5 955.7V972.7M504.5 916.3V955.7M505.5 881.2V916.3M507.5 873.2V896.3M508.5 896.3V933.5M509.5 933.5V959.8M511.5 933.6V958.9M512.5 902.3V933.6M513.5 885.8V902.3M515.5 893V916.6M516.5 916.6V939.5M519.5 918.6V937.4M520.5 904.4V918.6M553.5 909.6V927.2M554.5 927.2V943.6M556.5 930.4V946.1M557.5 905V930.4M558.5 887V905M560.5 890.5V915.7M561.5 915.7V947M562.5 947V962.9M564.5 916.7V950.7M565.5 882.8V916.7M567.5 872.7V894.7M568.5 894.7V935.2M569.5 935.2V967.4M571.5 937.9V968.9M572.5 894.8V937.9M573.5 868.4V894.8M575.5 876.6V913.8M576.5 913.8V955M577.5 955V972.7M578.5 955.7V972.7M579.5 916.3V955.7M580.5 881.2V916.3M582.5 873.2V896.3M583.5 896.3V933.5M584.5 933.5V959.8M586.5 933.6V958.9M587.5 902.3V933.6M588.5 885.8V902.3M590.5 893V916.6M591.5 916.6V939.5M594.5 918.6V937.4M595.5 904.4V918.6M628.5 909.6V927.2M629.5 927.2V943.6M631.5 930.4V946.1M632.5 905V930.4M633.5 887V905M635.5 890.5V915.7M636.5 915.7V947M637.5 947V962.9M639.5 916.7V950.7M640.5 882.8V916.7M642.5 872.7V894.7M643.5 894.7V935.2M644.5 935.2V967.4M646.5 937.9V968.9M647.5 894.8V937.9M648.5 868.4V894.8M650.5 876.6V913.8M651.5 913.8V955M652.5 955V972.7M653.5 955.7V972.7M654.5 916.3V955.7M655.5 881.2V916.3M657.5 873.2V896.3M658.5 896.3V933.5M659.5 933.5V959.8M661.5 933.6V958.9M662.5 902.3V933.6M663.5 885.8V902.3M665.5 893V916.6M666.5 916.6V939.5M669.5 918.6V937.4M670.5 904.4V918.6M703.5 909.6V927.2M704.5 927.2V943.6M706.5 930.4V946.1M707.5 905V930.4M708.5 887V905M710.5 890.5V915.7M711.5 915.7V947M712.5 947V962.9M714.5 916.7V950.7M715.5 882.8V916.7M717.5 872.7V894.7M718.5 894.7V935.2M719.5 935.2V967.4M721.5 937.9V968.9M722.5 894.8V937.9M723.5 868.4V894.8M725.5 876.6V913.8M726.5 913.8V955M727.5 955V972.7M728.5 955.7V972.7M729.5 916.3V955.7M730.5 881.2V916.3M732.5 873.2V896.3M733.5 896.3V933.5M734.5 933.5V959.8M736.5 933.6V958.9M737.5 902.3V933.6M738.5 885.8V902.3M740.5 893V916.6M741.5 916.6V939.5M744.5 918.6V937.4M745.5 904.4V918.6M778.5 909.6V927.2M779.5 927.2V943.6M781.5 930.4V946.1M782.5 905V930.4M783.5 887V905M785.5 890.5V915.7M786.5 915.7V947M787.5 947V962.9M789.5 916.7V950.7M790.5 882.8V916.7M792.5 872.7V894.7M793.5 894.7V935.2M794.5 935.2V967.4M796.5 937.9V968.9M797.5 894.8V937.9M798.5 868.4V894.8M800.5 876.6V913.8M801.5 913.8V955M802.5 955V972.7M803.5 955.7V972.7M804.5 916.3V955.7M805.5 881.2V916.3M807.5 873.2V896.3M808.5 896.3V933.5M809.5 933.5V959.8M811.5 933.6V958.9M812.5 902.3V933.6M813.5 885.8V902.3M815.5 893V916.6M816.5 916.6V939.5M819.5 918.6V937.4M820.5 904.4V918.6M853.5 909.6V927.2M854.5 927.2V943.6M856.5 930.4V946.1M857.5 905V930.4M858.5 887V905M860.5 890.5V915.7M861.5 915.7V947M862.5 947V962.9M864.5 916.7V950.7M865.5 882.8V916.7M867.5 872.7V894.7M868.5 894.7V935.2M869.5 935.2V967.4M871.5 937.9V968.9M872.5 894.8V937.9M873.5 868.4V894.8M875.5 876.6V913.8M876.5 913.8V955M877.5 955V972.7M878.5 955.7V972.7M879.5 916.3V955.7M880.5 881.2V916.3M882.5 873.2V896.3M883.5 896.3V933.5M884.5 933.5V959.8M886.5 933.6V958.9M887.5 902.3V933.6M888.5 885.8V902.3M890.5 893V916.6M891.5 916.6V939.5M894.5 918.6V937.4M895.5 904.4V918.6M928.5 909.6V927.2M929.5 927.2V943.6M931.5 930.4V946.1M932.5 905V930.4M933.5 887V905M935.5 890.5V915.7M936.5 915.7V947M937.5 947V962.9M939.5 916.7V950.7M940.5 882.8V916.7M942.5 872.7V894.7M943.5 894.7V935.2M944.5 935.2V967.4M946.5 937.9V968.9M947.5 894.8V937.9M948.5 868.4V894.8M950.5 876.6V913.8M951.5 913.8V955M952.5 955V972.7M953.5 955.7V972.7M954.5 916.3V955.7M955.5 881.2V916.3M957.5 873.2V896.3M958.5 896.3V933.5M959.5 933.5V959.8M961.5 933.6V958.9M962.5 902.3V933.6M963.5 885.8V902.3M965.5 893V916.6M966.5 916.6V939.5M969.5 918.6V937.4M970.5 904.4V918.6M1003.5 909.6V927.2M1004.5 927.2V943.6M1006.5 930.4V946.1M1007.5 905V930.4M1008.5 887V905M1010.5 890.5V915.7M1011.5 915.7V947M1012.5 947V962.9M1014.5 916.7V950.7M1015.5 882.8V916.7M1017.5 872.7V894.7M1018.5 894.7V935.2M1019.5 935.2V967.4M1021.5 937.9V968.9M1022.5 894.8V937.9M1023.5 868.4V894.8M1025.5 876.6V913.8M1026.5 913.8V955M1027.5 955V972.7M1028.5 955.7V972.7M1029.5 916.3V955.7M1030.5 881.2V916.3M1032.5 873.2V896.3M1033.5 896.3V933.5M1034.5 933.5V959.8M1036.5 933.6V958.9M1037.5 902.3V933.6M1038.5 885.8V902.3M1040.5 893V916.6M1041.5 916.6V939.5M1044.5 918.6V937.4M1045.5 904.4V918.6M1078.5 909.6V927.2M1079.5 927.2V943.6M1081.5 930.4V946.1M1082.5 905V930.4M1083.5 887V905M1085.5 890.5V915.7M1086.5 915.7V947M1087.5 947V962.9M1089.5 916.7V950.7M1090.5 882.8V916.7M1092.5 872.7V894.7M1093.5 894.7V935.2M1094.5 935.2V967.4M1096.5 937.9V968.9M1097.5 894.8V937.9M1098.5 868.4V894.8M1100.5 876.6V913.8M1101.5 913.8V955M1102.5 955V972.7M1103.5 955.7V972.7M1104.5 916.3V955.7M1105.5 881.2V916.3M1107.5 873.2V896.3M1108.5 896.3V933.5M1109.5 933.5V959.8M1111.5 933.6V958.9M1112.5 902.3V933.6M1113.5 885.8V902.3M1115.5 893V916.6M1116.5 916.6V939.5M1119.5 918.6V937.4M1120.5 904.4V918.6M1153.5 909.6V927.2M1154.5 927.2V943.6M1156.5 930.4V946.1M1157.5 905V930.4M1158.5 887V905M1160.5 890.5V915.7M1161.5 915.7V947M1162.5 947V962.9M1164.5 916.7V950.7M1165.5 882.8V916.7M1167.5 872.7V894.7M1168.5 894.7V935.2M1169.5 935.2V967.4M1171.5 937.9V968.9M1172.5 894.8V937.9M1173.5 868.4V894.8M1175.5 876.6V913.8M1176.5 913.8V955M1177.5 955V972.7M1178.5 955.7V972.7M1179.5 916.3V955.7M1180.5 881.2V916.3M1182.5 873.2V896.3M1183.5 896.3V933.5M1184.5 933.5V959.8M1186.5 933.6V958.9M1187.5 902.3V933.6M1188.5 885.8V902.3M1190.5 893V916.6M1191.5 916.6V939.5M1194.5 918.6V937.4M1195.5 904.4V918.6M1228.5 909.6V927.2M1229.5 927.2V943.6M1231.5 930.4V946.1M1232.5 905V930.4M1233.5 887V905M1235.5 890.5V915.7M1236.5 915.7V947M1237.5 947V962.9M1239.5 916.7V950.7M1240.5 882.8V916.7M1242.5 872.7V894.7M1243.5 894.7V935.2M1244.5 935.2V967.4M1246.5 937.9V968.9M1247.5 894.8V937.9M1248.5 868.4V894.8M1250.5 876.6V913.8M1251.5 913.8V955M1252.5 955V972.7M1253.5 955.7V972.7M1254.5 916.3V955.7" fill="none" stroke="#96465a" stroke-width="2.1"/><path d="M274.5 867V876.6M281.5 872.1V881.2M285.5 958.9V963.1M289.5 885.4V893M292.5 939.5V947.4M293.5 937.4V947.4M296.5 901.8V904.4M297.5 902.8V912.2M298.5 912.2V924.5M299.5 924.5V931.4M301.5 923.3V929.9M302.5 917.2V923.3M305.5 917V920.1M317.5 918.8V921.3M318.5 915.9V918.8M320.5 915.5V919.6M321.5 919.6V926.5M322.5 926.5V931.4M324.5 919.3V929.3M325.5 907.1V919.3M326.5 901.9V907.1M327.5 901.9V909.6M330.5 943.6V947.3M334.5 885.4V890.5M338.5 950.7V963M341.5 872.2V882.8M345.5 967.4V972.6M349.5 867V876.6M356.5 872.1V881.2M360.5 958.9V963.1M364.5 885.4V893M367.5 939.5V947.4M368.5 937.4V947.4M371.5 901.8V904.4M372.5 902.8V912.2M373.5 912.2V924.5M374.5 924.5V931.4M376.5 923.3V929.9M377.5 917.2V923.3M380.5 917V920.1M392.5 918.8V921.3M393.5 915.9V918.8M395.5 915.5V919.6M396.5 919.6V926.5M397.5 926.5V931.4M399.5 919.3V929.3M400.5 907.1V919.3M401.5 901.9V907.1M402.5 901.9V909.6M405.5 943.6V947.3M409.5 885.4V890.5M413.5 950.7V963M416.5 872.2V882.8M420.5 967.4V972.6M424.5 867V876.6M431.5 872.1V881.2M435.5 958.9V963.1M439.5 885.4V893M442.5 939.5V947.4M443.5 937.4V947.4M446.5 901.8V904.4M447.5 902.8V912.2M448.5 912.2V924.5M449.5 924.5V931.4M451.5 923.3V929.9M452.5 917.2V923.3M455.5 917V920.1M467.5 918.8V921.3M468.5 915.9V918.8M470.5 915.5V919.6M471.5 919.6V926.5M472.5 926.5V931.4M474.5 919.3V929.3M475.5 907.1V919.3M476.5 901.9V907.1M477.5 901.9V909.6M480.5 943.6V947.3M484.5 885.4V890.5M488.5 950.7V963M491.5 872.2V882.8M495.5 967.4V972.6M499.5 867V876.6M506.5 872.1V881.2M510.5 958.9V963.1M514.5 885.4V893M517.5 939.5V947.4M518.5 937.4V947.4M521.5 901.8V904.4M522.5 902.8V912.2M523.5 912.2V924.5M524.5 924.5V931.4M526.5 923.3V929.9M527.5 917.2V923.3M530.5 917V920.1M542.5 918.8V921.3M543.5 915.9V918.8M545.5 915.5V919.6M546.5 919.6V926.5M547.5 926.5V931.4M549.5 919.3V929.3M550.5 907.1V919.3M551.5 901.9V907.1M552.5 901.9V909.6M555.5 943.6V947.3M559.5 885.4V890.5M563.5 950.7V963M566.5 872.2V882.8M570.5 967.4V972.6M574.5 867V876.6M581.5 872.1V881.2M585.5 958.9V963.1M589.5 885.4V893M592.5 939.5V947.4M593.5 937.4V947.4M596.5 901.8V904.4M597.5 902.8V912.2M598.5 912.2V924.5M599.5 924.5V931.4M601.5 923.3V929.9M602.5 917.2V923.3M605.5 917V920.1M617.5 918.8V921.3M618.5 915.9V918.8M620.5 915.5V919.6M621.5 919.6V926.5M622.5 926.5V931.4M624.5 919.3V929.3M625.5 907.1V919.3M626.5 901.9V907.1M627.5 901.9V909.6M630.5 943.6V947.3M634.5 885.4V890.5M638.5 950.7V963M641.5 872.2V882.8M645.5 967.4V972.6M649.5 867V876.6M656.5 872.1V881.2M660.5 958.9V963.1M664.5 885.4V893M667.5 939.5V947.4M668.5 937.4V947.4M671.5 901.8V904.4M672.5 902.8V912.2M673.5 912.2V924.5M674.5 924.5V931.4M676.5 923.3V929.9M677.5 917.2V923.3M680.5 917V920.1M692.5 918.8V921.3M693.5 915.9V918.8M695.5 915.5V919.6M696.5 919.6V926.5M697.5 926.5V931.4M699.5 919.3V929.3M700.5 907.1V919.3M701.5 901.9V907.1M702.5 901.9V909.6M705.5 943.6V947.3M709.5 885.4V890.5M713.5 950.7V963M716.5 872.2V882.8M720.5 967.4V972.6M724.5 867V876.6M731.5 872.1V881.2M735.5 958.9V963.1M739.5 885.4V893M742.5 939.5V947.4M743.5 937.4V947.4M746.5 901.8V904.4M747.5 902.8V912.2M748.5 912.2V924.5M749.5 924.5V931.4M751.5 923.3V929.9M752.5 917.2V923.3M755.5 917V920.1M767.5 918.8V921.3M768.5 915.9V918.8M770.5 915.5V919.6M771.5 919.6V926.5M772.5 926.5V931.4M774.5 919.3V929.3M775.5 907.1V919.3M776.5 901.9V907.1M777.5 901.9V909.6M780.5 943.6V947.3M784.5 885.4V890.5M788.5 950.7V963M791.5 872.2V882.8M795.5 967.4V972.6M799.5 867V876.6M806.5 872.1V881.2M810.5 958.9V963.1M814.5 885.4V893M817.5 939.5V947.4M818.5 937.4V947.4M821.5 901.8V904.4M822.5 902.8V912.2M823.5 912.2V924.5M824.5 924.5V931.4M826.5 923.3V929.9M827.5 917.2V923.3M830.5 917V920.1M842.5 918.8V921.3M843.5 915.9V918.8M845.5 915.5V919.6M846.5 919.6V926.5M847.5 926.5V931.4M849.5 919.3V929.3M850.5 907.1V919.3M851.5 901.9V907.1M852.5 901.9V909.6M855.5 943.6V947.3M859.5 885.4V890.5M863.5 950.7V963M866.5 872.2V882.8M870.5 967.4V972.6M874.5 867V876.6M881.5 872.1V881.2M885.5 958.9V963.1M889.5 885.4V893M892.5 939.5V947.4M893.5 937.4V947.4M896.5 901.8V904.4M897.5 902.8V912.2M898.5 912.2V924.5M899.5 924.5V931.4M901.5 923.3V929.9M902.5 917.2V923.3M905.5 917V920.1M917.5 918.8V921.3M918.5 915.9V918.8M920.5 915.5V919.6M921.5 919.6V926.5M922.5 926.5V931.4M924.5 919.3V929.3M925.5 907.1V919.3M926.5 901.9V907.1M927.5 901.9V909.6M930.5 943.6V947.3M934.5 885.4V890.5M938.5 950.7V963M941.5 872.2V882.8M945.5 967.4V972.6M949.5 867V876.6M956.5 872.1V881.2M960.5 958.9V963.1M964.5 885.4V893M967.5 939.5V947.4M968.5 937.4V947.4M971.5 901.8V904.4M972.5 902.8V912.2M973.5 912.2V924.5M974.5 924.5V931.4M976.5 923.3V929.9M977.5 917.2V923.3M980.5 917V920.1M992.5 918.8V921.3M993.5 915.9V918.8M995.5 915.5V919.6M996.5 919.6V926.5M997.5 926.5V931.4M999.5 919.3V929.3M1000.5 907.1V919.3M1001.5 901.9V907.1M1002.5 901.9V909.6M1005.5 943.6V947.3M1009.5 885.4V890.5M1013.5 950.7V963M1016.5 872.2V882.8M1020.5 967.4V972.6M1024.5 867V876.6M1031.5 872.1V881.2M1035.5 958.9V963.1M1039.5 885.4V893M1042.5 939.5V947.4M1043.5 937.4V947.4M1046.5 901.8V904.4M1047.5 902.8V912.2M1048.5 912.2V924.5M1049.5 924.5V931.4M1051.5 923.3V929.9M1052.5 917.2V923.3M1055.5 917V920.1M1067.5 918.8V921.3M1068.5 915.9V918.8M1070.5 915.5V919.6M1071.5 919.6V926.5M1072.5 926.5V931.4M1074.5 919.3V929.3M1075.5 907.1V919.3M1076.5 901.9V907.1M1077.5 901.9V909.6M1080.5 943.6V947.3M1084.5 885.4V890.5M1088.5 950.7V963M1091.5 872.2V882.8M1095.5 967.4V972.6M1099.5 867V876.6M1106.5 872.1V881.2M1110.5 958.9V963.1M1114.5 885.4V893M1117.5 939.5V947.4M1118.5 937.4V947.4M1121.5 901.8V904.4M1122.5 902.8V912.2M1123.5 912.2V924.5M1124.5 924.5V931.4M1126.5 923.3V929.9M1127.5 917.2V923.3M1130.5 917V920.1M1142.5 918.8V921.3M1143.5 915.9V918.8M1145.5 915.5V919.6M1146.5 919.6V926.5M1147.5 926.5V931.4M1149.5 919.3V929.3M1150.5 907.1V919.3M1151.5 901.9V907.1M1152.5 901.9V909.6M1155.5 943.6V947.3M1159.5 885.4V890.5M1163.5 950.7V963M1166.5 872.2V882.8M1170.5 967.4V972.6M1174.5 867V876.6M1181.5 872.1V881.2M1185.5 958.9V963.1M1189.5 885.4V893M1192.5 939.5V947.4M1193.5 937.4V947.4M1196.5 901.8V904.4M1197.5 902.8V912.2M1198.5 912.2V924.5M1199.5 924.5V931.4M1201.5 923.3V929.9M1202.5 917.2V923.3M1205.5 917V920.1M1217.5 918.8V921.3M1218.5 915.9V918.8M1220.5 915.5V919.6M1221.5 919.6V926.5M1222.5 926.5V931.4M1224.5 919.3V929.3M1225.5 907.1V919.3M1226.5 901.9V907.1M1227.5 901.9V909.6M1230.5 943.6V947.3M1234.5 885.4V890.5M1238.5 950.7V963M1241.5 872.2V882.8M1245.5 967.4V972.6M1249.5 867V876.6" fill="none" stroke="#f66c82" stroke-width="1.4"/><path d="M271.1 968V969.8M272.1 937V938.8M273.1 893.9V895.7M275.1 875.7V877.5M276.1 912.9V914.7M277.1 954.1V955.9M278.1 971.8V973.6M279.1 954.8V956.6M280.1 915.4V917.2M282.1 872.3V874.1M283.1 895.4V897.2M284.1 932.6V934.4M286.1 958V959.8M287.1 932.7V934.5M288.1 901.4V903.2M290.1 892.1V893.9M291.1 915.7V917.5M294.1 936.5V938.3M295.1 917.7V919.5M328.1 908.7V910.5M329.1 926.3V928.1M331.1 945.2V947M332.1 929.5V931.3M333.1 904.1V905.9M335.1 889.6V891.4M336.1 914.8V916.6M337.1 946.1V947.9M339.1 949.8V951.6M340.1 915.8V917.6M342.1 871.8V873.6M343.1 893.8V895.6M344.1 934.3V936.1M346.1 968V969.8M347.1 937V938.8M348.1 893.9V895.7M350.1 875.7V877.5M351.1 912.9V914.7M352.1 954.1V955.9M353.1 971.8V973.6M354.1 954.8V956.6M355.1 915.4V917.2M357.1 872.3V874.1M358.1 895.4V897.2M359.1 932.6V934.4M361.1 958V959.8M362.1 932.7V934.5M363.1 901.4V903.2M365.1 892.1V893.9M366.1 915.7V917.5M369.1 936.5V938.3M370.1 917.7V919.5M403.1 908.7V910.5M404.1 926.3V928.1M406.1 945.2V947M407.1 929.5V931.3M408.1 904.1V905.9M410.1 889.6V891.4M411.1 914.8V916.6M412.1 946.1V947.9M414.1 949.8V951.6M415.1 915.8V917.6M417.1 871.8V873.6M418.1 893.8V895.6M419.1 934.3V936.1M421.1 968V969.8M422.1 937V938.8M423.1 893.9V895.7M425.1 875.7V877.5M426.1 912.9V914.7M427.1 954.1V955.9M428.1 971.8V973.6M429.1 954.8V956.6M430.1 915.4V917.2M432.1 872.3V874.1M433.1 895.4V897.2M434.1 932.6V934.4M436.1 958V959.8M437.1 932.7V934.5M438.1 901.4V903.2M440.1 892.1V893.9M441.1 915.7V917.5M444.1 936.5V938.3M445.1 917.7V919.5M478.1 908.7V910.5M479.1 926.3V928.1M481.1 945.2V947M482.1 929.5V931.3M483.1 904.1V905.9M485.1 889.6V891.4M486.1 914.8V916.6M487.1 946.1V947.9M489.1 949.8V951.6M490.1 915.8V917.6M492.1 871.8V873.6M493.1 893.8V895.6M494.1 934.3V936.1M496.1 968V969.8M497.1 937V938.8M498.1 893.9V895.7M500.1 875.7V877.5M501.1 912.9V914.7M502.1 954.1V955.9M503.1 971.8V973.6M504.1 954.8V956.6M505.1 915.4V917.2M507.1 872.3V874.1M508.1 895.4V897.2M509.1 932.6V934.4M511.1 958V959.8M512.1 932.7V934.5M513.1 901.4V903.2M515.1 892.1V893.9M516.1 915.7V917.5M519.1 936.5V938.3M520.1 917.7V919.5M553.1 908.7V910.5M554.1 926.3V928.1M556.1 945.2V947M557.1 929.5V931.3M558.1 904.1V905.9M560.1 889.6V891.4M561.1 914.8V916.6M562.1 946.1V947.9M564.1 949.8V951.6M565.1 915.8V917.6M567.1 871.8V873.6M568.1 893.8V895.6M569.1 934.3V936.1M571.1 968V969.8M572.1 937V938.8M573.1 893.9V895.7M575.1 875.7V877.5M576.1 912.9V914.7M577.1 954.1V955.9M578.1 971.8V973.6M579.1 954.8V956.6M580.1 915.4V917.2M582.1 872.3V874.1M583.1 895.4V897.2M584.1 932.6V934.4M586.1 958V959.8M587.1 932.7V934.5M588.1 901.4V903.2M590.1 892.1V893.9M591.1 915.7V917.5M594.1 936.5V938.3M595.1 917.7V919.5M628.1 908.7V910.5M629.1 926.3V928.1M631.1 945.2V947M632.1 929.5V931.3M633.1 904.1V905.9M635.1 889.6V891.4M636.1 914.8V916.6M637.1 946.1V947.9M639.1 949.8V951.6M640.1 915.8V917.6M642.1 871.8V873.6M643.1 893.8V895.6M644.1 934.3V936.1M646.1 968V969.8M647.1 937V938.8M648.1 893.9V895.7M650.1 875.7V877.5M651.1 912.9V914.7M652.1 954.1V955.9M653.1 971.8V973.6M654.1 954.8V956.6M655.1 915.4V917.2M657.1 872.3V874.1M658.1 895.4V897.2M659.1 932.6V934.4M661.1 958V959.8M662.1 932.7V934.5M663.1 901.4V903.2M665.1 892.1V893.9M666.1 915.7V917.5M669.1 936.5V938.3M670.1 917.7V919.5M703.1 908.7V910.5M704.1 926.3V928.1M706.1 945.2V947M707.1 929.5V931.3M708.1 904.1V905.9M710.1 889.6V891.4M711.1 914.8V916.6M712.1 946.1V947.9M714.1 949.8V951.6M715.1 915.8V917.6M717.1 871.8V873.6M718.1 893.8V895.6M719.1 934.3V936.1M721.1 968V969.8M722.1 937V938.8M723.1 893.9V895.7M725.1 875.7V877.5M726.1 912.9V914.7M727.1 954.1V955.9M728.1 971.8V973.6M729.1 954.8V956.6M730.1 915.4V917.2M732.1 872.3V874.1M733.1 895.4V897.2M734.1 932.6V934.4M736.1 958V959.8M737.1 932.7V934.5M738.1 901.4V903.2M740.1 892.1V893.9M741.1 915.7V917.5M744.1 936.5V938.3M745.1 917.7V919.5M778.1 908.7V910.5M779.1 926.3V928.1M781.1 945.2V947M782.1 929.5V931.3M783.1 904.1V905.9M785.1 889.6V891.4M786.1 914.8V916.6M787.1 946.1V947.9M789.1 949.8V951.6M790.1 915.8V917.6M792.1 871.8V873.6M793.1 893.8V895.6M794.1 934.3V936.1M796.1 968V969.8M797.1 937V938.8M798.1 893.9V895.7M800.1 875.7V877.5M801.1 912.9V914.7M802.1 954.1V955.9M803.1 971.8V973.6M804.1 954.8V956.6M805.1 915.4V917.2M807.1 872.3V874.1M808.1 895.4V897.2M809.1 932.6V934.4M811.1 958V959.8M812.1 932.7V934.5M813.1 901.4V903.2M815.1 892.1V893.9M816.1 915.7V917.5M819.1 936.5V938.3M820.1 917.7V919.5M853.1 908.7V910.5M854.1 926.3V928.1M856.1 945.2V947M857.1 929.5V931.3M858.1 904.1V905.9M860.1 889.6V891.4M861.1 914.8V916.6M862.1 946.1V947.9M864.1 949.8V951.6M865.1 915.8V917.6M867.1 871.8V873.6M868.1 893.8V895.6M869.1 934.3V936.1M871.1 968V969.8M872.1 937V938.8M873.1 893.9V895.7M875.1 875.7V877.5M876.1 912.9V914.7M877.1 954.1V955.9M878.1 971.8V973.6M879.1 954.8V956.6M880.1 915.4V917.2M882.1 872.3V874.1M883.1 895.4V897.2M884.1 932.6V934.4M886.1 958V959.8M887.1 932.7V934.5M888.1 901.4V903.2M890.1 892.1V893.9M891.1 915.7V917.5M894.1 936.5V938.3M895.1 917.7V919.5M928.1 908.7V910.5M929.1 926.3V928.1M931.1 945.2V947M932.1 929.5V931.3M933.1 904.1V905.9M935.1 889.6V891.4M936.1 914.8V916.6M937.1 946.1V947.9M939.1 949.8V951.6M940.1 915.8V917.6M942.1 871.8V873.6M943.1 893.8V895.6M944.1 934.3V936.1M946.1 968V969.8M947.1 937V938.8M948.1 893.9V895.7M950.1 875.7V877.5M951.1 912.9V914.7M952.1 954.1V955.9M953.1 971.8V973.6M954.1 954.8V956.6M955.1 915.4V917.2M957.1 872.3V874.1M958.1 895.4V897.2M959.1 932.6V934.4M961.1 958V959.8M962.1 932.7V934.5M963.1 901.4V903.2M965.1 892.1V893.9M966.1 915.7V917.5M969.1 936.5V938.3M970.1 917.7V919.5M1003.1 908.7V910.5M1004.1 926.3V928.1M1006.1 945.2V947M1007.1 929.5V931.3M1008.1 904.1V905.9M1010.1 889.6V891.4M1011.1 914.8V916.6M1012.1 946.1V947.9M1014.1 949.8V951.6M1015.1 915.8V917.6M1017.1 871.8V873.6M1018.1 893.8V895.6M1019.1 934.3V936.1M1021.1 968V969.8M1022.1 937V938.8M1023.1 893.9V895.7M1025.1 875.7V877.5M1026.1 912.9V914.7M1027.1 954.1V955.9M1028.1 971.8V973.6M1029.1 954.8V956.6M1030.1 915.4V917.2M1032.1 872.3V874.1M1033.1 895.4V897.2M1034.1 932.6V934.4M1036.1 958V959.8M1037.1 932.7V934.5M1038.1 901.4V903.2M1040.1 892.1V893.9M1041.1 915.7V917.5M1044.1 936.5V938.3M1045.1 917.7V919.5M1078.1 908.7V910.5M1079.1 926.3V928.1M1081.1 945.2V947M1082.1 929.5V931.3M1083.1 904.1V905.9M1085.1 889.6V891.4M1086.1 914.8V916.6M1087.1 946.1V947.9M1089.1 949.8V951.6M1090.1 915.8V917.6M1092.1 871.8V873.6M1093.1 893.8V895.6M1094.1 934.3V936.1M1096.1 968V969.8M1097.1 937V938.8M1098.1 893.9V895.7M1100.1 875.7V877.5M1101.1 912.9V914.7M1102.1 954.1V955.9M1103.1 971.8V973.6M1104.1 954.8V956.6M1105.1 915.4V917.2M1107.1 872.3V874.1M1108.1 895.4V897.2M1109.1 932.6V934.4M1111.1 958V959.8M1112.1 932.7V934.5M1113.1 901.4V903.2M1115.1 892.1V893.9M1116.1 915.7V917.5M1119.1 936.5V938.3M1120.1 917.7V919.5M1153.1 908.7V910.5M1154.1 926.3V928.1M1156.1 945.2V947M1157.1 929.5V931.3M1158.1 904.1V905.9M1160.1 889.6V891.4M1161.1 914.8V916.6M1162.1 946.1V947.9M1164.1 949.8V951.6M1165.1 915.8V917.6M1167.1 871.8V873.6M1168.1 893.8V895.6M1169.1 934.3V936.1M1171.1 968V969.8M1172.1 937V938.8M1173.1 893.9V895.7M1175.1 875.7V877.5M1176.1 912.9V914.7M1177.1 954.1V955.9M1178.1 971.8V973.6M1179.1 954.8V956.6M1180.1 915.4V917.2M1182.1 872.3V874.1M1183.1 895.4V897.2M1184.1 932.6V934.4M1186.1 958V959.8M1187.1 932.7V934.5M1188.1 901.4V903.2M1190.1 892.1V893.9M1191.1 915.7V917.5M1194.1 936.5V938.3M1195.1 917.7V919.5M1228.1 908.7V910.5M1229.1 926.3V928.1M1231.1 945.2V947M1232.1 929.5V931.3M1233.1 904.1V905.9M1235.1 889.6V891.4M1236.1 914.8V916.6M1237.1 946.1V947.9M1239.1 949.8V951.6M1240.1 915.8V917.6M1242.1 871.8V873.6M1243.1 893.8V895.6M1244.1 934.3V936.1M1246.1 968V969.8M1247.1 937V938.8M1248.1 893.9V895.7M1250.1 875.7V877.5M1251.1 912.9V914.7M1252.1 954.1V955.9M1253.1 971.8V973.6M1254.1 954.8V956.6" fill="none" stroke="#f66c82" stroke-width="1.3"/><path d="M303.5 915.6L304 915.1L304.5 915.7L304.8 916.3M306.2 920.7L306.8 921.6L307.2 922L307.8 922L308.2 921.7L308.8 921.2L309.2 920.8L309.8 920.5L310.2 920.4L310.8 920.4L311.2 920.5L311.8 920.5L312.2 920.5L312.8 920.4L313.2 920.4L313.8 920.5L314.2 920.8L314.8 921.1L315.2 921.6L315.8 921.9L316.2 922L316.8 921.7L317.2 920.8L317.5 920.2M318.8 916.5L319.2 915.5L319.8 915.2L320.2 916.1M378.5 915.6L379 915.1L379.5 915.7L379.8 916.3M381.2 920.7L381.8 921.6L382.2 922L382.8 922L383.2 921.7L383.8 921.2L384.2 920.8L384.8 920.5L385.2 920.4L385.8 920.4L386.2 920.5L386.8 920.5L387.2 920.5L387.8 920.4L388.2 920.4L388.8 920.5L389.2 920.8L389.8 921.1L390.2 921.6L390.8 921.9L391.2 922L391.8 921.7L392.2 920.8L392.5 920.2M393.8 916.5L394.2 915.5L394.8 915.2L395.2 916.1M453.5 915.6L454 915.1L454.5 915.7L454.8 916.3M456.2 920.7L456.8 921.6L457.2 922L457.8 922L458.2 921.7L458.8 921.2L459.2 920.8L459.8 920.5L460.2 920.4L460.8 920.4L461.2 920.5L461.8 920.5L462.2 920.5L462.8 920.4L463.2 920.4L463.8 920.5L464.2 920.8L464.8 921.1L465.2 921.6L465.8 921.9L466.2 922L466.8 921.7L467.2 920.8L467.5 920.2M468.8 916.5L469.2 915.5L469.8 915.2L470.2 916.1M528.5 915.6L529 915.1L529.5 915.7L529.8 916.3M531.2 920.7L531.8 921.6L532.2 922L532.8 922L533.2 921.7L533.8 921.2L534.2 920.8L534.8 920.5L535.2 920.4L535.8 920.4L536.2 920.5L536.8 920.5L537.2 920.5L537.8 920.4L538.2 920.4L538.8 920.5L539.2 920.8L539.8 921.1L540.2 921.6L540.8 921.9L541.2 922L541.8 921.7L542.2 920.8L542.5 920.2M543.8 916.5L544.2 915.5L544.8 915.2L545.2 916.1M603.5 915.6L604 915.1L604.5 915.7L604.8 916.3M606.2 920.7L606.8 921.6L607.2 922L607.8 922L608.2 921.7L608.8 921.2L609.2 920.8L609.8 920.5L610.2 920.4L610.8 920.4L611.2 920.5L611.8 920.5L612.2 920.5L612.8 920.4L613.2 920.4L613.8 920.5L614.2 920.8L614.8 921.1L615.2 921.6L615.8 921.9L616.2 922L616.8 921.7L617.2 920.8L617.5 920.2M618.8 916.5L619.2 915.5L619.8 915.2L620.2 916.1M678.5 915.6L679 915.1L679.5 915.7L679.8 916.3M681.2 920.7L681.8 921.6L682.2 922L682.8 922L683.2 921.7L683.8 921.2L684.2 920.8L684.8 920.5L685.2 920.4L685.8 920.4L686.2 920.5L686.8 920.5L687.2 920.5L687.8 920.4L688.2 920.4L688.8 920.5L689.2 920.8L689.8 921.1L690.2 921.6L690.8 921.9L691.2 922L691.8 921.7L692.2 920.8L692.5 920.2M693.8 916.5L694.2 915.5L694.8 915.2L695.2 916.1M753.5 915.6L754 915.1L754.5 915.7L754.8 916.3M756.2 920.7L756.8 921.6L757.2 922L757.8 922L758.2 921.7L758.8 921.2L759.2 920.8L759.8 920.5L760.2 920.4L760.8 920.4L761.2 920.5L761.8 920.5L762.2 920.5L762.8 920.4L763.2 920.4L763.8 920.5L764.2 920.8L764.8 921.1L765.2 921.6L765.8 921.9L766.2 922L766.8 921.7L767.2 920.8L767.5 920.2M768.8 916.5L769.2 915.5L769.8 915.2L770.2 916.1M828.5 915.6L829 915.1L829.5 915.7L829.8 916.3M831.2 920.7L831.8 921.6L832.2 922L832.8 922L833.2 921.7L833.8 921.2L834.2 920.8L834.8 920.5L835.2 920.4L835.8 920.4L836.2 920.5L836.8 920.5L837.2 920.5L837.8 920.4L838.2 920.4L838.8 920.5L839.2 920.8L839.8 921.1L840.2 921.6L840.8 921.9L841.2 922L841.8 921.7L842.2 920.8L842.5 920.2M843.8 916.5L844.2 915.5L844.8 915.2L845.2 916.1M903.5 915.6L904 915.1L904.5 915.7L904.8 916.3M906.2 920.7L906.8 921.6L907.2 922L907.8 922L908.2 921.7L908.8 921.2L909.2 920.8L909.8 920.5L910.2 920.4L910.8 920.4L911.2 920.5L911.8 920.5L912.2 920.5L912.8 920.4L913.2 920.4L913.8 920.5L914.2 920.8L914.8 921.1L915.2 921.6L915.8 921.9L916.2 922L916.8 921.7L917.2 920.8L917.5 920.2M918.8 916.5L919.2 915.5L919.8 915.2L920.2 916.1M978.5 915.6L979 915.1L979.5 915.7L979.8 916.3M981.2 920.7L981.8 921.6L982.2 922L982.8 922L983.2 921.7L983.8 921.2L984.2 920.8L984.8 920.5L985.2 920.4L985.8 920.4L986.2 920.5L986.8 920.5L987.2 920.5L987.8 920.4L988.2 920.4L988.8 920.5L989.2 920.8L989.8 921.1L990.2 921.6L990.8 921.9L991.2 922L991.8 921.7L992.2 920.8L992.5 920.2M993.8 916.5L994.2 915.5L994.8 915.2L995.2 916.1M1053.5 915.6L1054 915.1L1054.5 915.7L1054.8 916.3M1056.2 920.7L1056.8 921.6L1057.2 922L1057.8 922L1058.2 921.7L1058.8 921.2L1059.2 920.8L1059.8 920.5L1060.2 920.4L1060.8 920.4L1061.2 920.5L1061.8 920.5L1062.2 920.5L1062.8 920.4L1063.2 920.4L1063.8 920.5L1064.2 920.8L1064.8 921.1L1065.2 921.6L1065.8 921.9L1066.2 922L1066.8 921.7L1067.2 920.8L1067.5 920.2M1068.8 916.5L1069.2 915.5L1069.8 915.2L1070.2 916.1M1128.5 915.6L1129 915.1L1129.5 915.7L1129.8 916.3M1131.2 920.7L1131.8 921.6L1132.2 922L1132.8 922L1133.2 921.7L1133.8 921.2L1134.2 920.8L1134.8 920.5L1135.2 920.4L1135.8 920.4L1136.2 920.5L1136.8 920.5L1137.2 920.5L1137.8 920.4L1138.2 920.4L1138.8 920.5L1139.2 920.8L1139.8 921.1L1140.2 921.6L1140.8 921.9L1141.2 922L1141.8 921.7L1142.2 920.8L1142.5 920.2M1143.8 916.5L1144.2 915.5L1144.8 915.2L1145.2 916.1M1203.5 915.6L1204 915.1L1204.5 915.7L1204.8 916.3M1206.2 920.7L1206.8 921.6L1207.2 922L1207.8 922L1208.2 921.7L1208.8 921.2L1209.2 920.8L1209.8 920.5L1210.2 920.4L1210.8 920.4L1211.2 920.5L1211.8 920.5L1212.2 920.5L1212.8 920.4L1213.2 920.4L1213.8 920.5L1214.2 920.8L1214.8 921.1L1215.2 921.6L1215.8 921.9L1216.2 922L1216.8 921.7L1217.2 920.8L1217.5 920.2M1218.8 916.5L1219.2 915.5L1219.8 915.2L1220.2 916.1" fill="none" stroke="#f66c82" stroke-width="1.4" stroke-linecap="round" stroke-linejoin="round"/><text x="280.5" y="870.9" font-size="11.6" font-weight="bold" fill="#fff" stroke="#1b1b1b" stroke-width="4" stroke-linejoin="round" paint-order="stroke">10 V</text><text x="280.5" y="924.4" font-size="11.6" font-weight="bold" fill="#fff" stroke="#1b1b1b" stroke-width="4" stroke-linejoin="round" paint-order="stroke">0 V</text><text x="280.5" y="977.9" font-size="11.6" font-weight="bold" fill="#fff" stroke="#1b1b1b" stroke-width="4" stroke-linejoin="round" paint-order="stroke">-10 V</text><path d="M271 1000.3H1255M271 1107.3H1255" stroke="#4c4c54" stroke-width="1.2" stroke-dasharray="6 4" fill="none"/><path d="M271 1053.8H1255" stroke="#333338" stroke-width="1.2"/><path d="M272.5 1043.7V1098.9M273.5 1001.1V1043.7M275.5 1026.7V1088M277.5 1053V1104M278.5 1003.1V1053M280.5 1020.9V1082.3M282.5 1062.2V1106.2M283.5 1007.8V1062.2M285.5 1010.9V1065.8M286.5 1065.8V1106.2M288.5 1031.7V1086.8M289.5 1000.5V1031.7M290.5 1000.4V1022.9M291.5 1022.9V1074.1M292.5 1074.1V1106.2M294.5 1049.6V1093.4M295.5 1010V1049.6M297.5 1001.7V1027M298.5 1027V1067.3M299.5 1067.3V1098.9M301.5 1089.9V1106.7M302.5 1058.4V1089.9M303.5 1026.3V1058.4M304.5 1005.2V1026.3M307.5 1012.5V1035.2M308.5 1035.2V1062M309.5 1062V1085.9M310.5 1085.9V1102M313.5 1086.4V1101.6M314.5 1065.1V1086.4M315.5 1041.7V1065.1M316.5 1020.5V1041.7M317.5 1005.7V1020.5M320.5 1006V1022.4M321.5 1022.4V1046.5M322.5 1046.5V1073.2M323.5 1073.2V1095.6M326.5 1080.5V1102M327.5 1048.3V1080.5M328.5 1017.1V1048.3M329.5 1000.8V1017.1M331.5 1009.2V1041.2M332.5 1041.2V1081.4M333.5 1081.4V1106M335.5 1057.2V1097.1M336.5 1013.7V1057.2M338.5 1001.6V1034.3M339.5 1034.3V1085.4M340.5 1085.4V1107.3M341.5 1075.1V1107M342.5 1020.2V1075.1M344.5 1001.6V1042.6M345.5 1042.6V1097.2M347.5 1044.6V1099.3M348.5 1001.3V1044.6M350.5 1026V1087.4M352.5 1053.8V1104.3M353.5 1003.3V1053.8M355.5 1020.2V1081.6M357.5 1063V1106.3M358.5 1008.3V1063M360.5 1010.4V1065M361.5 1065V1106M363.5 1032.5V1087.4M364.5 1000.6V1032.5M365.5 1000.3V1022.2M366.5 1022.2V1073.3M367.5 1073.3V1106M369.5 1050.4V1093.9M370.5 1010.5V1050.4M372.5 1001.6V1026.2M373.5 1026.2V1066.4M374.5 1066.4V1098.4M376.5 1090.5V1106.8M377.5 1059.3V1090.5M378.5 1027.1V1059.3M379.5 1005.6V1027.1M382.5 1012V1034.4M383.5 1034.4V1061.1M384.5 1061.1V1085.2M385.5 1085.2V1101.6M388.5 1087.1V1101.9M389.5 1065.9V1087.1M390.5 1042.5V1065.9M391.5 1021.2V1042.5M392.5 1006V1021.2M395.5 1005.6V1021.7M396.5 1021.7V1045.6M397.5 1045.6V1072.4M398.5 1072.4V1095.1M401.5 1081.3V1102.4M402.5 1049.2V1081.3M403.5 1017.7V1049.2M404.5 1000.9V1017.7M406.5 1008.7V1040.3M407.5 1040.3V1080.6M408.5 1080.6V1105.9M410.5 1058V1097.6M411.5 1014.2V1058M413.5 1001.4V1033.5M414.5 1033.5V1084.7M415.5 1084.7V1107.2M416.5 1075.9V1107.1M417.5 1020.8V1075.9M419.5 1001.4V1041.8M420.5 1041.8V1096.7M422.5 1045.4V1099.8M423.5 1001.4V1045.4M425.5 1025.3V1086.7M427.5 1054.6V1104.5M428.5 1003.6V1054.6M430.5 1019.6V1080.9M432.5 1063.9V1106.5M433.5 1008.7V1063.9M435.5 1009.9V1064.2M436.5 1064.2V1105.8M438.5 1033.2V1088.1M439.5 1000.6V1033.2M440.5 1000.3V1021.5M441.5 1021.5V1072.5M442.5 1072.5V1105.8M444.5 1051.3V1094.5M445.5 1011V1051.3M447.5 1001.4V1025.5M448.5 1025.5V1065.6M449.5 1065.6V1097.9M451.5 1091.1V1106.9M452.5 1060.1V1091.1M453.5 1027.8V1060.1M454.5 1006V1027.8M457.5 1011.4V1033.6M458.5 1033.6V1060.3M459.5 1060.3V1084.6M460.5 1084.6V1101.2M463.5 1087.8V1102.3M464.5 1066.7V1087.8M465.5 1043.3V1066.7M466.5 1021.8V1043.3M467.5 1006.4V1021.8M470.5 1005.3V1021M471.5 1021V1044.8M472.5 1044.8V1071.6M473.5 1071.6V1094.6M476.5 1082V1102.7M477.5 1050V1082M478.5 1018.3V1050M479.5 1001V1018.3M481.5 1008.3V1039.5M482.5 1039.5V1079.9M483.5 1079.9V1105.7M485.5 1058.8V1098M486.5 1014.8V1058.8M488.5 1001.3V1032.7M489.5 1032.7V1084.1M490.5 1084.1V1107.2M491.5 1076.7V1107.2M492.5 1021.5V1076.7M494.5 1001.3V1041M495.5 1041V1096.2M497.5 1046.2V1100.2M498.5 1001.6V1046.2M500.5 1024.6V1086.1M502.5 1055.5V1104.8M503.5 1003.9V1055.5M505.5 1018.9V1080.1M507.5 1064.7V1106.6M508.5 1009.2V1064.7M510.5 1009.4V1063.3M511.5 1063.3V1105.6M513.5 1034V1088.7M514.5 1000.7V1034M515.5 1000.3V1020.8M516.5 1020.8V1071.7M517.5 1071.7V1105.6M519.5 1052.1V1095M520.5 1011.5V1052.1M522.5 1001.2V1024.8M523.5 1024.8V1064.8M524.5 1064.8V1097.5M526.5 1091.7V1107M527.5 1060.9V1091.7M528.5 1028.5V1060.9M529.5 1006.4V1028.5M532.5 1010.9V1032.9M533.5 1032.9V1059.5M534.5 1059.5V1083.9M535.5 1083.9V1100.8M538.5 1088.4V1102.6M539.5 1067.6V1088.4M540.5 1044.1V1067.6M541.5 1022.5V1044.1M542.5 1006.8V1022.5M545.5 1004.9V1020.4M546.5 1020.4V1044M547.5 1044V1070.8M548.5 1070.8V1094M551.5 1082.7V1103M552.5 1050.9V1082.7M553.5 1019V1050.9M554.5 1001.1V1019M556.5 1007.9V1038.7M557.5 1038.7V1079.2M558.5 1079.2V1105.4M560.5 1059.7V1098.5M561.5 1015.4V1059.7M563.5 1001.1V1032M564.5 1032V1083.4M565.5 1083.4V1107.2M566.5 1077.4V1107.2M567.5 1022.2V1077.4M569.5 1001.1V1040.2M570.5 1040.2V1095.7M572.5 1047.1V1100.6M573.5 1001.8V1047.1M575.5 1023.9V1085.4M577.5 1056.3V1105.1M578.5 1004.2V1056.3M580.5 1018.3V1079.4M581.5 1079.4V1107.3M582.5 1065.5V1106.7M583.5 1009.6V1065.5M585.5 1008.9V1062.5M586.5 1062.5V1105.4M588.5 1034.8V1089.3M589.5 1000.9V1034.8M590.5 1000.3V1020.2M591.5 1020.2V1071M592.5 1071V1105.4M594.5 1052.9V1095.6M595.5 1012.1V1052.9M597.5 1001.1V1024.1M598.5 1024.1V1064M599.5 1064V1097M601.5 1092.3V1107.1M602.5 1061.8V1092.3M603.5 1029.3V1061.8M604.5 1006.8V1029.3M607.5 1010.4V1032.1M608.5 1032.1V1058.6M609.5 1058.6V1083.2M610.5 1083.2V1100.4M613.5 1089V1103M614.5 1068.4V1089M615.5 1045V1068.4M616.5 1023.2V1045M617.5 1007.2V1023.2M620.5 1004.6V1019.7M621.5 1019.7V1043.2M622.5 1043.2V1070M623.5 1070V1093.5M626.5 1083.4V1103.4M627.5 1051.7V1083.4M628.5 1019.6V1051.7M629.5 1001.3V1019.6M631.5 1007.4V1037.9M632.5 1037.9V1078.4M633.5 1078.4V1105.2M635.5 1060.5V1099M636.5 1016V1060.5M638.5 1001V1031.2M639.5 1031.2V1082.7M640.5 1082.7V1107.3M641.5 1078.2V1107.3M642.5 1022.9V1078.2M644.5 1001V1039.4M645.5 1039.4V1095.2M647.5 1047.9V1101M648.5 1002V1047.9M650.5 1023.2V1084.7M652.5 1057.2V1105.3M653.5 1004.5V1057.2M655.5 1017.7V1078.7M656.5 1078.7V1107.3M657.5 1066.3V1106.9M658.5 1010.1V1066.3M660.5 1008.5V1061.7M661.5 1061.7V1105.1M663.5 1035.6V1090M664.5 1001V1035.6M666.5 1019.5V1070.2M667.5 1070.2V1105.1M669.5 1053.8V1096.1M670.5 1012.6V1053.8M672.5 1000.9V1023.4M673.5 1023.4V1063.2M674.5 1063.2V1096.5M676.5 1092.9V1107.2M677.5 1062.6V1092.9M678.5 1030V1062.6M679.5 1007.2V1030M682.5 1009.9V1031.3M683.5 1031.3V1057.8M684.5 1057.8V1082.5M685.5 1082.5V1100M688.5 1089.7V1103.3M689.5 1069.2V1089.7M690.5 1045.8V1069.2M691.5 1023.9V1045.8M692.5 1007.6V1023.9M695.5 1004.3V1019.1M696.5 1019.1V1042.3M697.5 1042.3V1069.2M698.5 1069.2V1092.9M699.5 1092.9V1106.2M701.5 1084.1V1103.7M702.5 1052.5V1084.1M703.5 1020.3V1052.5M704.5 1001.5V1020.3M706.5 1007V1037.1M707.5 1037.1V1077.7M708.5 1077.7V1105M710.5 1061.4V1099.4M711.5 1016.6V1061.4M712.5 1000.3V1016.6M713.5 1000.8V1030.4M714.5 1030.4V1081.9M715.5 1081.9V1107.3M716.5 1078.9V1107.3M717.5 1023.5V1078.9M718.5 1000.3V1023.5M719.5 1000.9V1038.5M720.5 1038.5V1094.6M722.5 1048.7V1101.4M723.5 1002.2V1048.7M725.5 1022.5V1084M727.5 1058V1105.5M728.5 1004.9V1058M730.5 1017.1V1077.9M731.5 1077.9V1107.3M732.5 1067.1V1107M733.5 1010.6V1067.1M735.5 1008.1V1060.8M736.5 1060.8V1104.9M738.5 1036.4V1090.6M739.5 1001.1V1036.4M741.5 1018.9V1069.4M742.5 1069.4V1104.9M744.5 1054.6V1096.6M745.5 1013.1V1054.6M747.5 1000.8V1022.7M748.5 1022.7V1062.3M749.5 1062.3V1096M751.5 1093.5V1107.2M752.5 1063.4V1093.5M753.5 1030.8V1063.4M754.5 1007.6V1030.8M757.5 1009.5V1030.6M758.5 1030.6V1056.9M759.5 1056.9V1081.7M760.5 1081.7V1099.5M763.5 1090.3V1103.6M764.5 1070V1090.3M765.5 1046.6V1070M766.5 1024.6V1046.6M767.5 1008.1V1024.6M770.5 1004V1018.4M771.5 1018.4V1041.5M772.5 1041.5V1068.4M773.5 1068.4V1092.3M774.5 1092.3V1106M776.5 1084.8V1104M777.5 1053.4V1084.8M778.5 1020.9V1053.4M779.5 1001.6V1020.9M781.5 1006.6V1036.3M782.5 1036.3V1076.9M783.5 1076.9V1104.7M785.5 1062.2V1099.8M786.5 1017.2V1062.2M787.5 1000.3V1017.2M788.5 1000.7V1029.7M789.5 1029.7V1081.2M790.5 1081.2V1107.3M791.5 1079.7V1107.3M792.5 1024.2V1079.7M793.5 1000.3V1024.2M794.5 1000.7V1037.7M795.5 1037.7V1094.1M797.5 1049.6V1101.8M798.5 1002.5V1049.6M800.5 1021.8V1083.3M802.5 1058.8V1105.7M803.5 1005.2V1058.8M805.5 1016.5V1077.2M806.5 1077.2V1107.2M807.5 1068V1107M808.5 1011.1V1068M810.5 1007.6V1060M811.5 1060V1104.6M813.5 1037.2V1091.2M814.5 1001.3V1037.2M816.5 1018.3V1068.5M817.5 1068.5V1104.7M819.5 1055.5V1097.1M820.5 1013.7V1055.5M821.5 1000.3V1013.7M822.5 1000.7V1022.1M823.5 1022.1V1061.5M824.5 1061.5V1095.4M826.5 1094V1107.3M827.5 1064.2V1094M828.5 1031.5V1064.2M829.5 1008V1031.5M832.5 1009V1029.8M833.5 1029.8V1056.1M834.5 1056.1V1081M835.5 1081V1099.1M838.5 1090.9V1103.9M839.5 1070.8V1090.9M840.5 1047.5V1070.8M841.5 1025.3V1047.5M842.5 1008.5V1025.3M845.5 1003.7V1017.8M846.5 1017.8V1040.7M847.5 1040.7V1067.6M848.5 1067.6V1091.7M849.5 1091.7V1105.8M851.5 1085.5V1104.3M852.5 1054.2V1085.5M853.5 1021.6V1054.2M854.5 1001.8V1021.6M856.5 1006.2V1035.5M857.5 1035.5V1076.2M858.5 1076.2V1104.5M860.5 1063V1100.3M861.5 1017.8V1063M862.5 1000.3V1017.8M863.5 1000.6V1028.9M864.5 1028.9V1080.5M865.5 1080.5V1107.3M866.5 1080.4V1107.3M867.5 1024.9V1080.4M868.5 1000.3V1024.9M869.5 1000.6V1036.9M870.5 1036.9V1093.5M872.5 1050.4V1102.1M873.5 1002.7V1050.4M875.5 1021.2V1082.6M877.5 1059.7V1105.9M878.5 1005.6V1059.7M880.5 1015.9V1076.4M881.5 1076.4V1107.2M882.5 1068.8V1107.1M883.5 1011.6V1068.8M885.5 1007.2V1059.2M886.5 1059.2V1104.4M888.5 1038V1091.8M889.5 1001.4V1038M891.5 1017.6V1067.7M892.5 1067.7V1104.4M894.5 1056.3V1097.6M895.5 1014.2V1056.3M896.5 1000.3V1014.2M897.5 1000.6V1021.4M898.5 1021.4V1060.7M899.5 1060.7V1094.9M902.5 1065.1V1094.6M903.5 1032.3V1065.1M904.5 1008.4V1032.3M907.5 1008.6V1029.1M908.5 1029.1V1055.3M909.5 1055.3V1080.3M910.5 1080.3V1098.7M914.5 1071.6V1091.5M915.5 1048.3V1071.6M916.5 1026V1048.3M917.5 1009V1026M920.5 1003.4V1017.2M921.5 1017.2V1039.9M922.5 1039.9V1066.8M923.5 1066.8V1091.1M924.5 1091.1V1105.6M926.5 1086.1V1104.5M927.5 1055.1V1086.1M928.5 1022.3V1055.1M929.5 1002V1022.3M931.5 1005.8V1034.7M932.5 1034.7V1075.4M933.5 1075.4V1104.2M935.5 1063.8V1100.7M936.5 1018.4V1063.8M937.5 1000.3V1018.4M938.5 1000.5V1028.2M939.5 1028.2V1079.8M940.5 1079.8V1107.3M941.5 1081.1V1107.3M942.5 1025.7V1081.1M943.5 1000.3V1025.7M944.5 1000.6V1036.2M945.5 1036.2V1093M947.5 1051.2V1102.5M948.5 1003V1051.2M950.5 1020.5V1081.9M952.5 1060.5V1106.1M953.5 1005.9V1060.5M955.5 1015.3V1075.6M956.5 1075.6V1107.2M957.5 1069.6V1107.2M958.5 1012.1V1069.6M960.5 1006.8V1058.3M961.5 1058.3V1104.1M963.5 1038.8V1092.4M964.5 1001.6V1038.8M966.5 1017V1066.9M967.5 1066.9V1104.1M969.5 1057.1V1098.1M970.5 1014.8V1057.1M971.5 1000.3V1014.8M972.5 1000.5V1020.7M973.5 1020.7V1059.8M974.5 1059.8V1094.4M977.5 1065.9V1095.1M978.5 1033.1V1065.9M979.5 1008.9V1033.1M982.5 1008.1V1028.3M983.5 1028.3V1054.4M984.5 1054.4V1079.6M985.5 1079.6V1098.2M989.5 1072.4V1092.1M990.5 1049.1V1072.4M991.5 1026.7V1049.1M992.5 1009.4V1026.7M995.5 1003.1V1016.6M996.5 1016.6V1039.1M997.5 1039.1V1066M998.5 1066V1090.5M999.5 1090.5V1105.4M1001.5 1086.8V1104.8M1002.5 1055.9V1086.8M1003.5 1022.9V1055.9M1004.5 1002.3V1022.9M1006.5 1005.5V1034M1007.5 1034V1074.6M1008.5 1074.6V1103.9M1010.5 1064.7V1101.1M1011.5 1019V1064.7M1012.5 1000.3V1019M1013.5 1000.5V1027.5M1014.5 1027.5V1079M1015.5 1079V1107.2M1016.5 1081.8V1107.2M1017.5 1026.4V1081.8M1018.5 1000.4V1026.4M1019.5 1000.5V1035.4M1020.5 1035.4V1092.4M1022.5 1052.1V1102.8M1023.5 1003.2V1052.1M1025.5 1019.8V1081.2M1027.5 1061.3V1106.3M1028.5 1006.3V1061.3M1030.5 1014.7V1074.9M1031.5 1074.9V1107.2M1032.5 1070.4V1107.2M1033.5 1012.7V1070.4M1035.5 1006.4V1057.5M1036.5 1057.5V1103.8M1038.5 1039.6V1092.9M1039.5 1001.8V1039.6M1041.5 1016.4V1066.1M1042.5 1066.1V1103.8M1044.5 1058V1098.5M1045.5 1015.4V1058M1046.5 1000.3V1015.4M1047.5 1000.5V1020.1M1048.5 1020.1V1059M1049.5 1059V1093.8M1050.5 1093.8V1107.3M1052.5 1066.7V1095.6M1053.5 1033.9V1066.7M1054.5 1009.4V1033.9M1057.5 1007.7V1027.6M1058.5 1027.6V1053.6M1059.5 1053.6V1078.8M1060.5 1078.8V1097.7M1064.5 1073.2V1092.7M1065.5 1050V1073.2M1066.5 1027.5V1050M1067.5 1009.9V1027.5M1070.5 1002.8V1016M1071.5 1016V1038.3M1072.5 1038.3V1065.1M1073.5 1065.1V1089.9M1074.5 1089.9V1105.2M1076.5 1087.5V1105M1077.5 1056.7V1087.5M1078.5 1023.6V1056.7M1079.5 1002.5V1023.6M1081.5 1005.1V1033.2M1082.5 1033.2V1073.8M1083.5 1073.8V1103.6M1085.5 1065.5V1101.5M1086.5 1019.7V1065.5M1087.5 1000.4V1019.7M1088.5 1000.4V1026.7M1089.5 1026.7V1078.3M1090.5 1078.3V1107.2M1091.5 1082.6V1107.2M1092.5 1027.1V1082.6M1093.5 1000.4V1027.1M1094.5 1000.4V1034.6M1095.5 1034.6V1091.8M1097.5 1052.9V1103.2M1098.5 1003.5V1052.9M1100.5 1019.2V1080.4M1102.5 1062.2V1106.4M1103.5 1006.7V1062.2M1105.5 1014.1V1074.1M1106.5 1074.1V1107.3M1107.5 1071.2V1107.3M1108.5 1013.2V1071.2M1110.5 1006V1056.7M1111.5 1056.7V1103.5M1113.5 1040.4V1093.5M1114.5 1002V1040.4M1116.5 1015.8V1065.3M1117.5 1065.3V1103.5M1119.5 1058.8V1099M1120.5 1016V1058.8M1121.5 1000.4V1016M1122.5 1000.4V1019.4M1123.5 1019.4V1058.2M1124.5 1058.2V1093.2M1125.5 1093.2V1107.3M1127.5 1067.5V1096.1M1128.5 1034.6V1067.5M1129.5 1009.8V1034.6M1132.5 1007.3V1026.9M1133.5 1026.9V1052.7M1134.5 1052.7V1078.1M1135.5 1078.1V1097.2M1139.5 1073.9V1093.2M1140.5 1050.8V1073.9M1141.5 1028.2V1050.8M1142.5 1010.4V1028.2M1146.5 1015.4V1037.5M1147.5 1037.5V1064.3M1148.5 1064.3V1089.3M1149.5 1089.3V1105M1151.5 1088.1V1105.3M1152.5 1057.6V1088.1M1153.5 1024.3V1057.6M1154.5 1002.7V1024.3M1156.5 1004.8V1032.4M1157.5 1032.4V1073.1M1158.5 1073.1V1103.3M1160.5 1066.3V1101.8M1161.5 1020.3V1066.3M1162.5 1000.4V1020.3M1163.5 1000.4V1026M1164.5 1026V1077.5M1165.5 1077.5V1107.1M1166.5 1083.3V1107.2M1167.5 1027.8V1083.3M1168.5 1000.4V1027.8M1169.5 1000.4V1033.8M1170.5 1033.8V1091.2M1172.5 1053.8V1103.5M1173.5 1003.8V1053.8M1175.5 1018.6V1079.7M1177.5 1063V1106.6M1178.5 1007.1V1063M1180.5 1013.6V1073.3M1181.5 1073.3V1107.3M1182.5 1072V1107.3M1183.5 1013.8V1072M1185.5 1005.6V1055.8M1186.5 1055.8V1103.2M1188.5 1041.2V1094.1M1189.5 1002.2V1041.2M1191.5 1015.2V1064.5M1192.5 1064.5V1103.2M1194.5 1059.7V1099.4M1195.5 1016.6V1059.7M1196.5 1000.4V1016.6M1197.5 1000.4V1018.8M1198.5 1018.8V1057.3M1199.5 1057.3V1092.7M1200.5 1092.7V1107.3M1202.5 1068.3V1096.7M1203.5 1035.4V1068.3M1204.5 1010.3V1035.4M1207.5 1006.8V1026.1M1208.5 1026.1V1051.9M1209.5 1051.9V1077.3M1210.5 1077.3V1096.7M1214.5 1074.7V1093.8M1215.5 1051.6V1074.7M1216.5 1028.9V1051.6M1217.5 1010.9V1028.9M1221.5 1014.8V1036.7M1222.5 1036.7V1063.5M1223.5 1063.5V1088.7M1224.5 1088.7V1104.7M1226.5 1088.8V1105.5M1227.5 1058.4V1088.8M1228.5 1025V1058.4M1229.5 1003V1025M1231.5 1004.4V1031.6M1232.5 1031.6V1072.3M1233.5 1072.3V1103M1235.5 1067.1V1102.2M1236.5 1021V1067.1M1237.5 1000.3V1021M1238.5 1000.3V1025.3M1239.5 1025.3V1076.8M1240.5 1076.8V1107.1M1241.5 1084V1107.3M1242.5 1028.6V1084M1243.5 1000.3V1028.6M1244.5 1000.3V1033M1245.5 1033V1090.6M1247.5 1054.6V1103.8M1248.5 1004.1V1054.6M1250.5 1017.9V1079M1251.5 1079V1107.3M1252.5 1063.8V1106.7M1253.5 1007.5V1063.8" fill="none" stroke="#937038" stroke-width="2.1"/><path d="M271.5 1097.7V1107.3M274.5 1000.3V1026.7M276.5 1088V1107.2M279.5 1000.3V1020.9M281.5 1082.3V1107.2M284.5 1000.4V1010.9M287.5 1086.8V1107.2M293.5 1093.4V1107.3M296.5 1000.3V1010M300.5 1098.9V1107.3M305.5 1000.3V1005.2M306.5 1000.8V1012.5M311.5 1102V1107.3M312.5 1101.6V1107.3M318.5 1000.3V1005.7M319.5 1000.3V1006M324.5 1095.6V1106.9M325.5 1102V1107.3M330.5 1000.3V1009.2M334.5 1097.1V1107.3M337.5 1000.3V1013.7M343.5 1000.4V1020.2M346.5 1097.2V1107.3M349.5 1000.3V1026M351.5 1087.4V1107.3M354.5 1000.3V1020.2M356.5 1081.6V1107.3M359.5 1000.3V1010.4M362.5 1087.4V1107.2M368.5 1093.9V1107.3M371.5 1000.3V1010.5M375.5 1098.4V1107.3M380.5 1000.3V1005.6M381.5 1000.7V1012M386.5 1101.6V1107.3M387.5 1101.9V1107.3M393.5 1000.3V1006M394.5 1000.3V1005.6M399.5 1095.1V1106.8M400.5 1102.4V1107.3M405.5 1000.3V1008.7M409.5 1097.6V1107.3M412.5 1000.3V1014.2M418.5 1000.4V1020.8M421.5 1096.7V1107.2M424.5 1000.4V1025.3M426.5 1086.7V1107.3M429.5 1000.4V1019.6M431.5 1080.9V1107.3M434.5 1000.3V1009.9M437.5 1088.1V1107.3M443.5 1094.5V1107.3M446.5 1000.3V1011M450.5 1097.9V1107.3M455.5 1000.3V1006M456.5 1000.6V1011.4M461.5 1101.2V1107.3M462.5 1102.3V1107.3M468.5 1000.3V1006.4M469.5 1000.3V1005.3M474.5 1094.6V1106.7M475.5 1102.7V1107.3M480.5 1000.3V1008.3M484.5 1098V1107.3M487.5 1000.4V1014.8M493.5 1000.4V1021.5M496.5 1096.2V1107.2M499.5 1000.4V1024.6M501.5 1086.1V1107.3M504.5 1000.4V1018.9M506.5 1080.1V1107.3M509.5 1000.3V1009.4M512.5 1088.7V1107.3M518.5 1095V1107.3M521.5 1000.3V1011.5M525.5 1097.5V1107.3M530.5 1000.3V1006.4M531.5 1000.5V1010.9M536.5 1100.8V1107.3M537.5 1102.6V1107.3M543.5 1000.4V1006.8M544.5 1000.3V1004.9M549.5 1094V1106.5M550.5 1103V1107.3M555.5 1000.3V1007.9M559.5 1098.5V1107.2M562.5 1000.4V1015.4M568.5 1000.3V1022.2M571.5 1095.7V1107.2M574.5 1000.4V1023.9M576.5 1085.4V1107.3M579.5 1000.5V1018.3M584.5 1000.3V1009.6M587.5 1089.3V1107.3M593.5 1095.6V1107.3M596.5 1000.3V1012.1M600.5 1097V1107.3M605.5 1000.3V1006.8M606.5 1000.5V1010.4M611.5 1100.4V1107.2M612.5 1103V1107.3M618.5 1000.4V1007.2M619.5 1000.3V1004.6M624.5 1093.5V1106.4M625.5 1103.4V1107.3M630.5 1000.3V1007.4M634.5 1099V1107.3M637.5 1000.3V1016M643.5 1000.3V1022.9M646.5 1095.2V1107.2M649.5 1000.4V1023.2M651.5 1084.7V1107.3M654.5 1000.4V1017.7M659.5 1000.3V1010.1M662.5 1090V1107.3M665.5 1000.3V1019.5M668.5 1096.1V1107.2M671.5 1000.4V1012.6M675.5 1096.5V1107.3M680.5 1000.3V1007.2M681.5 1000.4V1009.9M686.5 1100V1107.2M687.5 1103.3V1107.3M693.5 1000.5V1007.6M694.5 1000.3V1004.3M700.5 1103.7V1107.3M705.5 1000.3V1007M709.5 1099.4V1107.3M721.5 1094.6V1107.3M724.5 1000.3V1022.5M726.5 1084V1107.2M729.5 1000.4V1017.1M734.5 1000.3V1010.6M737.5 1090.6V1107.3M740.5 1000.4V1018.9M743.5 1096.6V1107.2M746.5 1000.3V1013.1M750.5 1096V1107.3M755.5 1000.3V1007.6M756.5 1000.4V1009.5M761.5 1099.5V1107.1M762.5 1103.6V1107.3M768.5 1000.5V1008.1M769.5 1000.3V1004M775.5 1104V1107.3M780.5 1000.3V1006.6M784.5 1099.8V1107.3M796.5 1094.1V1107.3M799.5 1000.3V1021.8M801.5 1083.3V1107.2M804.5 1000.3V1016.5M809.5 1000.4V1011.1M812.5 1091.2V1107.3M815.5 1000.4V1018.3M818.5 1097.1V1107.3M825.5 1095.4V1107.3M830.5 1000.3V1008M831.5 1000.3V1009M836.5 1099.1V1107M837.5 1103.9V1107.3M843.5 1000.6V1008.5M844.5 1000.3V1003.7M850.5 1104.3V1107.3M855.5 1000.3V1006.2M859.5 1100.3V1107.3M871.5 1093.5V1107.3M874.5 1000.3V1021.2M876.5 1082.6V1107.2M879.5 1000.3V1015.9M884.5 1000.4V1011.6M887.5 1091.8V1107.2M890.5 1000.4V1017.6M893.5 1097.6V1107.3M900.5 1094.9V1107.3M901.5 1094.6V1107.3M905.5 1000.3V1008.4M906.5 1000.3V1008.6M911.5 1098.7V1107M912.5 1104.2V1107.3M913.5 1091.5V1104.2M918.5 1000.7V1009M919.5 1000.3V1003.4M925.5 1104.5V1107.3M930.5 1000.3V1005.8M934.5 1100.7V1107.3M946.5 1093V1107.3M949.5 1000.3V1020.5M951.5 1081.9V1107.2M954.5 1000.3V1015.3M959.5 1000.4V1012.1M962.5 1092.4V1107.2M965.5 1000.3V1017M968.5 1098.1V1107.3M975.5 1094.4V1107.3M976.5 1095.1V1107.3M980.5 1000.3V1008.9M981.5 1000.3V1008.1M986.5 1098.2V1106.9M987.5 1104.5V1107.3M988.5 1092.1V1104.5M993.5 1000.8V1009.4M994.5 1000.3V1003.1M1000.5 1104.8V1107.3M1005.5 1000.3V1005.5M1009.5 1101.1V1107.2M1021.5 1092.4V1107.3M1024.5 1000.3V1019.8M1026.5 1081.2V1107.3M1029.5 1000.3V1014.7M1034.5 1000.4V1012.7M1037.5 1092.9V1107.2M1040.5 1000.3V1016.4M1043.5 1098.5V1107.3M1051.5 1095.6V1107.3M1055.5 1000.3V1009.4M1056.5 1000.3V1007.7M1061.5 1097.7V1106.7M1062.5 1104.7V1107.3M1063.5 1092.7V1104.7M1068.5 1000.9V1009.9M1069.5 1000.3V1002.8M1080.5 1000.3V1005.1M1084.5 1101.5V1107.2M1096.5 1091.8V1107.2M1099.5 1000.4V1019.2M1101.5 1080.4V1107.3M1104.5 1000.3V1014.1M1109.5 1000.3V1013.2M1112.5 1093.5V1107.3M1115.5 1000.3V1015.8M1118.5 1099V1107.3M1126.5 1096.1V1107.3M1130.5 1000.3V1009.8M1131.5 1000.3V1007.3M1136.5 1097.2V1106.6M1138.5 1093.2V1105M1143.5 1001.1V1010.4M1145.5 1002.6V1015.4M1155.5 1000.3V1004.8M1159.5 1101.8V1107.3M1171.5 1091.2V1107.2M1174.5 1000.4V1018.6M1176.5 1079.7V1107.3M1179.5 1000.4V1013.6M1184.5 1000.3V1013.8M1187.5 1094.1V1107.3M1190.5 1000.3V1015.2M1193.5 1099.4V1107.3M1201.5 1096.7V1107.3M1205.5 1000.4V1010.3M1206.5 1000.3V1006.8M1211.5 1096.7V1106.5M1213.5 1093.8V1105.2M1218.5 1001.2V1010.9M1220.5 1002.4V1014.8M1225.5 1104.7V1107.3M1230.5 1000.3V1004.4M1234.5 1102.2V1107.3M1246.5 1090.6V1107.2M1249.5 1000.4V1017.9M1254.5 1000.4V1013" fill="none" stroke="#fbb050" stroke-width="1.5"/><path d="M272.1 1098V1099.8M273.1 1042.8V1044.6M275.1 1025.8V1027.6M277.1 1103.1V1104.9M278.1 1052.1V1053.9M280.1 1020V1021.8M282.1 1105.3V1107.1M283.1 1061.3V1063.1M285.1 1010V1011.8M286.1 1064.9V1066.7M288.1 1085.9V1087.7M289.1 1030.8V1032.6M290.1 999.6V1001.4M291.1 1022V1023.8M292.1 1073.2V1075M294.1 1092.5V1094.3M295.1 1048.7V1050.5M297.1 1000.8V1002.6M298.1 1026.1V1027.9M299.1 1066.4V1068.2M301.1 1105.8V1107.6M302.1 1089V1090.8M303.1 1057.5V1059.3M304.1 1025.4V1027.2M307.1 1011.6V1013.4M308.1 1034.3V1036.1M309.1 1061.1V1062.9M310.1 1085V1086.8M313.1 1100.7V1102.5M314.1 1085.5V1087.3M315.1 1064.2V1066M316.1 1040.8V1042.6M317.1 1019.6V1021.4M320.1 1005.1V1006.9M321.1 1021.5V1023.3M322.1 1045.6V1047.4M323.1 1072.3V1074.1M326.1 1101.1V1102.9M327.1 1079.6V1081.4M328.1 1047.4V1049.2M329.1 1016.2V1018M331.1 1008.3V1010.1M332.1 1040.3V1042.1M333.1 1080.5V1082.3M335.1 1096.2V1098M336.1 1056.3V1058.1M338.1 1000.7V1002.5M339.1 1033.4V1035.2M340.1 1084.5V1086.3M341.1 1106.1V1107.9M342.1 1074.2V1076M344.1 1000.7V1002.5M345.1 1041.7V1043.5M347.1 1098.4V1100.2M348.1 1043.7V1045.5M350.1 1025.1V1026.9M352.1 1103.4V1105.2M353.1 1052.9V1054.7M355.1 1019.3V1021.1M357.1 1105.4V1107.2M358.1 1062.1V1063.9M360.1 1009.5V1011.3M361.1 1064.1V1065.9M363.1 1086.5V1088.3M364.1 1031.6V1033.4M365.1 999.7V1001.5M366.1 1021.3V1023.1M367.1 1072.4V1074.2M369.1 1093V1094.8M370.1 1049.5V1051.3M372.1 1000.7V1002.5M373.1 1025.3V1027.1M374.1 1065.5V1067.3M376.1 1105.9V1107.7M377.1 1089.6V1091.4M378.1 1058.4V1060.2M379.1 1026.2V1028M382.1 1011.1V1012.9M383.1 1033.5V1035.3M384.1 1060.2V1062M385.1 1084.3V1086.1M388.1 1101V1102.8M389.1 1086.2V1088M390.1 1065V1066.8M391.1 1041.6V1043.4M392.1 1020.3V1022.1M395.1 1004.7V1006.5M396.1 1020.8V1022.6M397.1 1044.7V1046.5M398.1 1071.5V1073.3M401.1 1101.5V1103.3M402.1 1080.4V1082.2M403.1 1048.3V1050.1M404.1 1016.8V1018.6M406.1 1007.8V1009.6M407.1 1039.4V1041.2M408.1 1079.7V1081.5M410.1 1096.7V1098.5M411.1 1057.1V1058.9M413.1 1000.5V1002.3M414.1 1032.6V1034.4M415.1 1083.8V1085.6M416.1 1106.2V1108M417.1 1075V1076.8M419.1 1000.5V1002.3M420.1 1040.9V1042.7M422.1 1098.9V1100.7M423.1 1044.5V1046.3M425.1 1024.4V1026.2M427.1 1103.6V1105.4M428.1 1053.7V1055.5M430.1 1018.7V1020.5M432.1 1105.6V1107.4M433.1 1063V1064.8M435.1 1009V1010.8M436.1 1063.3V1065.1M438.1 1087.2V1089M439.1 1032.3V1034.1M440.1 999.7V1001.5M441.1 1020.6V1022.4M442.1 1071.6V1073.4M444.1 1093.6V1095.4M445.1 1050.4V1052.2M447.1 1000.5V1002.3M448.1 1024.6V1026.4M449.1 1064.7V1066.5M451.1 1106V1107.8M452.1 1090.2V1092M453.1 1059.2V1061M454.1 1026.9V1028.7M457.1 1010.5V1012.3M458.1 1032.7V1034.5M459.1 1059.4V1061.2M460.1 1083.7V1085.5M463.1 1101.4V1103.2M464.1 1086.9V1088.7M465.1 1065.8V1067.6M466.1 1042.4V1044.2M467.1 1020.9V1022.7M470.1 1004.4V1006.2M471.1 1020.1V1021.9M472.1 1043.9V1045.7M473.1 1070.7V1072.5M476.1 1101.8V1103.6M477.1 1081.1V1082.9M478.1 1049.1V1050.9M479.1 1017.4V1019.2M481.1 1007.4V1009.2M482.1 1038.6V1040.4M483.1 1079V1080.8M485.1 1097.1V1098.9M486.1 1057.9V1059.7M488.1 1000.4V1002.2M489.1 1031.8V1033.6M490.1 1083.2V1085M491.1 1106.3V1108.1M492.1 1075.8V1077.6M494.1 1000.4V1002.2M495.1 1040.1V1041.9M497.1 1099.3V1101.1M498.1 1045.3V1047.1M500.1 1023.7V1025.5M502.1 1103.9V1105.7M503.1 1054.6V1056.4M505.1 1018V1019.8M507.1 1105.7V1107.5M508.1 1063.8V1065.6M510.1 1008.5V1010.3M511.1 1062.4V1064.2M513.1 1087.8V1089.6M514.1 1033.1V1034.9M515.1 999.8V1001.6M516.1 1019.9V1021.7M517.1 1070.8V1072.6M519.1 1094.1V1095.9M520.1 1051.2V1053M522.1 1000.3V1002.1M523.1 1023.9V1025.7M524.1 1063.9V1065.7M526.1 1106.1V1107.9M527.1 1090.8V1092.6M528.1 1060V1061.8M529.1 1027.6V1029.4M532.1 1010V1011.8M533.1 1032V1033.8M534.1 1058.6V1060.4M535.1 1083V1084.8M538.1 1101.7V1103.5M539.1 1087.5V1089.3M540.1 1066.7V1068.5M541.1 1043.2V1045M542.1 1021.6V1023.4M545.1 1004V1005.8M546.1 1019.5V1021.3M547.1 1043.1V1044.9M548.1 1069.9V1071.7M551.1 1102.1V1103.9M552.1 1081.8V1083.6M553.1 1050V1051.8M554.1 1018.1V1019.9M556.1 1007V1008.8M557.1 1037.8V1039.6M558.1 1078.3V1080.1M560.1 1097.6V1099.4M561.1 1058.8V1060.6M563.1 1000.2V1002M564.1 1031.1V1032.9M565.1 1082.5V1084.3M566.1 1106.3V1108.1M567.1 1076.5V1078.3M569.1 1000.2V1002M570.1 1039.3V1041.1M572.1 1099.7V1101.5M573.1 1046.2V1048M575.1 1023V1024.8M577.1 1104.2V1106M578.1 1055.4V1057.2M580.1 1017.4V1019.2M581.1 1078.5V1080.3M582.1 1105.8V1107.6M583.1 1064.6V1066.4M585.1 1008V1009.8M586.1 1061.6V1063.4M588.1 1088.4V1090.2M589.1 1033.9V1035.7M590.1 1000V1001.8M591.1 1019.3V1021.1M592.1 1070.1V1071.9M594.1 1094.7V1096.5M595.1 1052V1053.8M597.1 1000.2V1002M598.1 1023.2V1025M599.1 1063.1V1064.9M601.1 1106.2V1108M602.1 1091.4V1093.2M603.1 1060.9V1062.7M604.1 1028.4V1030.2M607.1 1009.5V1011.3M608.1 1031.2V1033M609.1 1057.7V1059.5M610.1 1082.3V1084.1M613.1 1102.1V1103.9M614.1 1088.1V1089.9M615.1 1067.5V1069.3M616.1 1044.1V1045.9M617.1 1022.3V1024.1M620.1 1003.7V1005.5M621.1 1018.8V1020.6M622.1 1042.3V1044.1M623.1 1069.1V1070.9M626.1 1102.5V1104.3M627.1 1082.5V1084.3M628.1 1050.8V1052.6M629.1 1018.7V1020.5M631.1 1006.5V1008.3M632.1 1037V1038.8M633.1 1077.5V1079.3M635.1 1098.1V1099.9M636.1 1059.6V1061.4M638.1 1000.1V1001.9M639.1 1030.3V1032.1M640.1 1081.8V1083.6M641.1 1106.4V1108.2M642.1 1077.3V1079.1M644.1 1000.1V1001.9M645.1 1038.5V1040.3M647.1 1100.1V1101.9M648.1 1047V1048.8M650.1 1022.3V1024.1M652.1 1104.4V1106.2M653.1 1056.3V1058.1M655.1 1016.8V1018.6M656.1 1077.8V1079.6M657.1 1106V1107.8M658.1 1065.4V1067.2M660.1 1007.6V1009.4M661.1 1060.8V1062.6M663.1 1089.1V1090.9M664.1 1034.7V1036.5M666.1 1018.6V1020.4M667.1 1069.3V1071.1M669.1 1095.2V1097M670.1 1052.9V1054.7M672.1 1000V1001.8M673.1 1022.5V1024.3M674.1 1062.3V1064.1M676.1 1106.3V1108.1M677.1 1092V1093.8M678.1 1061.7V1063.5M679.1 1029.1V1030.9M682.1 1009V1010.8M683.1 1030.4V1032.2M684.1 1056.9V1058.7M685.1 1081.6V1083.4M688.1 1102.4V1104.2M689.1 1088.8V1090.6M690.1 1068.3V1070.1M691.1 1044.9V1046.7M692.1 1023V1024.8M695.1 1003.4V1005.2M696.1 1018.2V1020M697.1 1041.4V1043.2M698.1 1068.3V1070.1M699.1 1092V1093.8M701.1 1102.8V1104.6M702.1 1083.2V1085M703.1 1051.6V1053.4M704.1 1019.4V1021.2M706.1 1006.1V1007.9M707.1 1036.2V1038M708.1 1076.8V1078.6M710.1 1098.5V1100.3M711.1 1060.5V1062.3M712.1 1015.7V1017.5M713.1 999.9V1001.7M714.1 1029.5V1031.3M715.1 1081V1082.8M716.1 1106.4V1108.2M717.1 1078V1079.8M718.1 1022.6V1024.4M719.1 1000V1001.8M720.1 1037.6V1039.4M722.1 1100.5V1102.3M723.1 1047.8V1049.6M725.1 1021.6V1023.4M727.1 1104.6V1106.4M728.1 1057.1V1058.9M730.1 1016.2V1018M731.1 1077V1078.8M732.1 1106.1V1107.9M733.1 1066.2V1068M735.1 1007.2V1009M736.1 1059.9V1061.7M738.1 1089.7V1091.5M739.1 1035.5V1037.3M741.1 1018V1019.8M742.1 1068.5V1070.3M744.1 1095.7V1097.5M745.1 1053.7V1055.5M747.1 999.9V1001.7M748.1 1021.8V1023.6M749.1 1061.4V1063.2M751.1 1106.3V1108.1M752.1 1092.6V1094.4M753.1 1062.5V1064.3M754.1 1029.9V1031.7M757.1 1008.6V1010.4M758.1 1029.7V1031.5M759.1 1056V1057.8M760.1 1080.8V1082.6M763.1 1102.7V1104.5M764.1 1089.4V1091.2M765.1 1069.1V1070.9M766.1 1045.7V1047.5M767.1 1023.7V1025.5M770.1 1003.1V1004.9M771.1 1017.5V1019.3M772.1 1040.6V1042.4M773.1 1067.5V1069.3M774.1 1091.4V1093.2M776.1 1103.1V1104.9M777.1 1083.9V1085.7M778.1 1052.5V1054.3M779.1 1020V1021.8M781.1 1005.7V1007.5M782.1 1035.4V1037.2M783.1 1076V1077.8M785.1 1098.9V1100.7M786.1 1061.3V1063.1M787.1 1016.3V1018.1M788.1 999.8V1001.6M789.1 1028.8V1030.6M790.1 1080.3V1082.1M791.1 1106.4V1108.2M792.1 1078.8V1080.6M793.1 1023.3V1025.1M794.1 999.8V1001.6M795.1 1036.8V1038.6M797.1 1100.9V1102.7M798.1 1048.7V1050.5M800.1 1020.9V1022.7M802.1 1104.8V1106.6M803.1 1057.9V1059.7M805.1 1015.6V1017.4M806.1 1076.3V1078.1M807.1 1106.1V1107.9M808.1 1067.1V1068.9M810.1 1006.7V1008.5M811.1 1059.1V1060.9M813.1 1090.3V1092.1M814.1 1036.3V1038.1M816.1 1017.4V1019.2M817.1 1067.6V1069.4M819.1 1096.2V1098M820.1 1054.6V1056.4M821.1 1012.8V1014.6M822.1 999.8V1001.6M823.1 1021.2V1023M824.1 1060.6V1062.4M826.1 1106.4V1108.2M827.1 1093.1V1094.9M828.1 1063.3V1065.1M829.1 1030.6V1032.4M832.1 1008.1V1009.9M833.1 1028.9V1030.7M834.1 1055.2V1057M835.1 1080.1V1081.9M838.1 1103V1104.8M839.1 1090V1091.8M840.1 1069.9V1071.7M841.1 1046.6V1048.4M842.1 1024.4V1026.2M845.1 1002.8V1004.6M846.1 1016.9V1018.7M847.1 1039.8V1041.6M848.1 1066.7V1068.5M849.1 1090.8V1092.6M851.1 1103.4V1105.2M852.1 1084.6V1086.4M853.1 1053.3V1055.1M854.1 1020.7V1022.5M856.1 1005.3V1007.1M857.1 1034.6V1036.4M858.1 1075.3V1077.1M860.1 1099.4V1101.2M861.1 1062.1V1063.9M862.1 1016.9V1018.7M863.1 999.7V1001.5M864.1 1028V1029.8M865.1 1079.6V1081.4M866.1 1106.4V1108.2M867.1 1079.5V1081.3M868.1 1024V1025.8M869.1 999.7V1001.5M870.1 1036V1037.8M872.1 1101.2V1103M873.1 1049.5V1051.3M875.1 1020.3V1022.1M877.1 1105V1106.8M878.1 1058.8V1060.6M880.1 1015V1016.8M881.1 1075.5V1077.3M882.1 1106.2V1108M883.1 1067.9V1069.7M885.1 1006.3V1008.1M886.1 1058.3V1060.1M888.1 1090.9V1092.7M889.1 1037.1V1038.9M891.1 1016.7V1018.5M892.1 1066.8V1068.6M894.1 1096.7V1098.5M895.1 1055.4V1057.2M896.1 1013.3V1015.1M897.1 999.7V1001.5M898.1 1020.5V1022.3M899.1 1059.8V1061.6M902.1 1093.7V1095.5M903.1 1064.2V1066M904.1 1031.4V1033.2M907.1 1007.7V1009.5M908.1 1028.2V1030M909.1 1054.4V1056.2M910.1 1079.4V1081.2M914.1 1090.6V1092.4M915.1 1070.7V1072.5M916.1 1047.4V1049.2M917.1 1025.1V1026.9M920.1 1002.5V1004.3M921.1 1016.3V1018.1M922.1 1039V1040.8M923.1 1065.9V1067.7M924.1 1090.2V1092M926.1 1103.6V1105.4M927.1 1085.2V1087M928.1 1054.2V1056M929.1 1021.4V1023.2M931.1 1004.9V1006.7M932.1 1033.8V1035.6M933.1 1074.5V1076.3M935.1 1099.8V1101.6M936.1 1062.9V1064.7M937.1 1017.5V1019.3M938.1 999.6V1001.4M939.1 1027.3V1029.1M940.1 1078.9V1080.7M941.1 1106.4V1108.2M942.1 1080.2V1082M943.1 1024.8V1026.6M944.1 999.7V1001.5M945.1 1035.3V1037.1M947.1 1101.6V1103.4M948.1 1050.3V1052.1M950.1 1019.6V1021.4M952.1 1105.2V1107M953.1 1059.6V1061.4M955.1 1014.4V1016.2M956.1 1074.7V1076.5M957.1 1106.3V1108.1M958.1 1068.7V1070.5M960.1 1005.9V1007.7M961.1 1057.4V1059.2M963.1 1091.5V1093.3M964.1 1037.9V1039.7M966.1 1016.1V1017.9M967.1 1066V1067.8M969.1 1097.2V1099M970.1 1056.2V1058M971.1 1013.9V1015.7M972.1 999.6V1001.4M973.1 1019.8V1021.6M974.1 1058.9V1060.7M977.1 1094.2V1096M978.1 1065V1066.8M979.1 1032.2V1034M982.1 1007.2V1009M983.1 1027.4V1029.2M984.1 1053.5V1055.3M985.1 1078.7V1080.5M989.1 1091.2V1093M990.1 1071.5V1073.3M991.1 1048.2V1050M992.1 1025.8V1027.6M995.1 1002.2V1004M996.1 1015.7V1017.5M997.1 1038.2V1040M998.1 1065.1V1066.9M999.1 1089.6V1091.4M1001.1 1103.9V1105.7M1002.1 1085.9V1087.7M1003.1 1055V1056.8M1004.1 1022V1023.8M1006.1 1004.6V1006.4M1007.1 1033.1V1034.9M1008.1 1073.7V1075.5M1010.1 1100.2V1102M1011.1 1063.8V1065.6M1012.1 1018.1V1019.9M1013.1 999.6V1001.4M1014.1 1026.6V1028.4M1015.1 1078.1V1079.9M1016.1 1106.3V1108.1M1017.1 1080.9V1082.7M1018.1 1025.5V1027.3M1019.1 999.6V1001.4M1020.1 1034.5V1036.3M1022.1 1101.9V1103.7M1023.1 1051.2V1053M1025.1 1018.9V1020.7M1027.1 1105.4V1107.2M1028.1 1060.4V1062.2M1030.1 1013.8V1015.6M1031.1 1074V1075.8M1032.1 1106.3V1108.1M1033.1 1069.5V1071.3M1035.1 1005.5V1007.3M1036.1 1056.6V1058.4M1038.1 1092V1093.8M1039.1 1038.7V1040.5M1041.1 1015.5V1017.3M1042.1 1065.2V1067M1044.1 1097.6V1099.4M1045.1 1057.1V1058.9M1046.1 1014.5V1016.3M1047.1 999.6V1001.4M1048.1 1019.2V1021M1049.1 1058.1V1059.9M1050.1 1092.9V1094.7M1052.1 1094.7V1096.5M1053.1 1065.8V1067.6M1054.1 1033V1034.8M1057.1 1006.8V1008.6M1058.1 1026.7V1028.5M1059.1 1052.7V1054.5M1060.1 1077.9V1079.7M1064.1 1091.8V1093.6M1065.1 1072.3V1074.1M1066.1 1049.1V1050.9M1067.1 1026.6V1028.4M1070.1 1001.9V1003.7M1071.1 1015.1V1016.9M1072.1 1037.4V1039.2M1073.1 1064.2V1066M1074.1 1089V1090.8M1076.1 1104.1V1105.9M1077.1 1086.6V1088.4M1078.1 1055.8V1057.6M1079.1 1022.7V1024.5M1081.1 1004.2V1006M1082.1 1032.3V1034.1M1083.1 1072.9V1074.7M1085.1 1100.6V1102.4M1086.1 1064.6V1066.4M1087.1 1018.8V1020.6M1088.1 999.5V1001.3M1089.1 1025.8V1027.6M1090.1 1077.4V1079.2M1091.1 1106.3V1108.1M1092.1 1081.7V1083.5M1093.1 1026.2V1028M1094.1 999.5V1001.3M1095.1 1033.7V1035.5M1097.1 1102.3V1104.1M1098.1 1052V1053.8M1100.1 1018.3V1020.1M1102.1 1105.5V1107.3M1103.1 1061.3V1063.1M1105.1 1013.2V1015M1106.1 1073.2V1075M1107.1 1106.4V1108.2M1108.1 1070.3V1072.1M1110.1 1005.1V1006.9M1111.1 1055.8V1057.6M1113.1 1092.6V1094.4M1114.1 1039.5V1041.3M1116.1 1014.9V1016.7M1117.1 1064.4V1066.2M1119.1 1098.1V1099.9M1120.1 1057.9V1059.7M1121.1 1015.1V1016.9M1122.1 999.5V1001.3M1123.1 1018.5V1020.3M1124.1 1057.3V1059.1M1125.1 1092.3V1094.1M1127.1 1095.2V1097M1128.1 1066.6V1068.4M1129.1 1033.7V1035.5M1132.1 1006.4V1008.2M1133.1 1026V1027.8M1134.1 1051.8V1053.6M1135.1 1077.2V1079M1139.1 1092.3V1094.1M1140.1 1073V1074.8M1141.1 1049.9V1051.7M1142.1 1027.3V1029.1M1146.1 1014.5V1016.3M1147.1 1036.6V1038.4M1148.1 1063.4V1065.2M1149.1 1088.4V1090.2M1151.1 1104.4V1106.2M1152.1 1087.2V1089M1153.1 1056.7V1058.5M1154.1 1023.4V1025.2M1156.1 1003.9V1005.7M1157.1 1031.5V1033.3M1158.1 1072.2V1074M1160.1 1100.9V1102.7M1161.1 1065.4V1067.2M1162.1 1019.4V1021.2M1163.1 999.5V1001.3M1164.1 1025.1V1026.9M1165.1 1076.6V1078.4M1166.1 1106.2V1108M1167.1 1082.4V1084.2M1168.1 1026.9V1028.7M1169.1 999.5V1001.3M1170.1 1032.9V1034.7M1172.1 1102.6V1104.4M1173.1 1052.9V1054.7M1175.1 1017.7V1019.5M1177.1 1105.7V1107.5M1178.1 1062.1V1063.9M1180.1 1012.7V1014.5M1181.1 1072.4V1074.2M1182.1 1106.4V1108.2M1183.1 1071.1V1072.9M1185.1 1004.7V1006.5M1186.1 1054.9V1056.7M1188.1 1093.2V1095M1189.1 1040.3V1042.1M1191.1 1014.3V1016.1M1192.1 1063.6V1065.4M1194.1 1098.5V1100.3M1195.1 1058.8V1060.6M1196.1 1015.7V1017.5M1197.1 999.5V1001.3M1198.1 1017.9V1019.7M1199.1 1056.4V1058.2M1200.1 1091.8V1093.6M1202.1 1095.8V1097.6M1203.1 1067.4V1069.2M1204.1 1034.5V1036.3M1207.1 1005.9V1007.7M1208.1 1025.2V1027M1209.1 1051V1052.8M1210.1 1076.4V1078.2M1214.1 1092.9V1094.7M1215.1 1073.8V1075.6M1216.1 1050.7V1052.5M1217.1 1028V1029.8M1221.1 1013.9V1015.7M1222.1 1035.8V1037.6M1223.1 1062.6V1064.4M1224.1 1087.8V1089.6M1226.1 1104.6V1106.4M1227.1 1087.9V1089.7M1228.1 1057.5V1059.3M1229.1 1024.1V1025.9M1231.1 1003.5V1005.3M1232.1 1030.7V1032.5M1233.1 1071.4V1073.2M1235.1 1101.3V1103.1M1236.1 1066.2V1068M1237.1 1020.1V1021.9M1238.1 999.4V1001.2M1239.1 1024.4V1026.2M1240.1 1075.9V1077.7M1241.1 1106.2V1108M1242.1 1083.1V1084.9M1243.1 1027.7V1029.5M1244.1 999.4V1001.2M1245.1 1032.1V1033.9M1247.1 1102.9V1104.7M1248.1 1053.7V1055.5M1250.1 1017V1018.8M1251.1 1078.1V1079.9M1252.1 1105.8V1107.6M1253.1 1062.9V1064.7" fill="none" stroke="#fbb050" stroke-width="1.3"/><text x="280.5" y="1004.2" font-size="11.6" font-weight="bold" fill="#fff" stroke="#1b1b1b" stroke-width="4" stroke-linejoin="round" paint-order="stroke">10 V</text><text x="280.5" y="1057.7" font-size="11.6" font-weight="bold" fill="#fff" stroke="#1b1b1b" stroke-width="4" stroke-linejoin="round" paint-order="stroke">0 V</text><text x="280.5" y="1111.2" font-size="11.6" font-weight="bold" fill="#fff" stroke="#1b1b1b" stroke-width="4" stroke-linejoin="round" paint-order="stroke">-10 V</text></svg>
<div class="abs" style="left:1177px;top:618px;width:51px;height:51px;background:#141414;border:1px solid #3a3a3f;border-radius:5px"></div>
<svg style="left:1194px;top:634px" width="20" height="22" viewBox="-10 -11 20 22"><path d="M-7.6 -8.2H7.6M-7.6 8.2H7.6" stroke="#8a8a8a" stroke-width="1.5" fill="none"/><path d="M0 -5.6L4 -1.4H0.9V1.4H4L0 5.6L-4 1.4H-0.9V-1.4H-4Z" fill="#8a8a8a"/></svg>
<div class="abs" style="left:1177px;top:751px;width:51px;height:51px;background:#141414;border:1px solid #3a3a3f;border-radius:5px"></div>
<svg style="left:1194px;top:767px" width="20" height="22" viewBox="-10 -11 20 22"><path d="M-7.6 -8.2H7.6M-7.6 8.2H7.6" stroke="#8a8a8a" stroke-width="1.5" fill="none"/><path d="M0 -5.6L4 -1.4H0.9V1.4H4L0 5.6L-4 1.4H-0.9V-1.4H-4Z" fill="#8a8a8a"/></svg>
<div class="abs" style="left:1177px;top:885px;width:51px;height:51px;background:#141414;border:1px solid #3a3a3f;border-radius:5px"></div>
<svg style="left:1194px;top:901px" width="20" height="22" viewBox="-10 -11 20 22"><path d="M-7.6 -8.2H7.6M-7.6 8.2H7.6" stroke="#8a8a8a" stroke-width="1.5" fill="none"/><path d="M0 -5.6L4 -1.4H0.9V1.4H4L0 5.6L-4 1.4H-0.9V-1.4H-4Z" fill="#8a8a8a"/></svg>
<div class="abs" style="left:1177px;top:1018px;width:51px;height:51px;background:#141414;border:1px solid #3a3a3f;border-radius:5px"></div>
<svg style="left:1194px;top:1034px" width="20" height="22" viewBox="-10 -11 20 22"><path d="M-7.6 -8.2H7.6M-7.6 8.2H7.6" stroke="#8a8a8a" stroke-width="1.5" fill="none"/><path d="M0 -5.6L4 -1.4H0.9V1.4H4L0 5.6L-4 1.4H-0.9V-1.4H-4Z" fill="#8a8a8a"/></svg>
<svg style="left:271px;top:84px" width="8" height="12" viewBox="271 84 8 12"><path d="M277.4 86L272 90.4L277.4 94.8Z" fill="#050505"/></svg>
<div class="t" style="left:280.0px;top:82px;font-size:14.27px;color:#fff;font-weight:bold;-webkit-text-stroke:0.3px #fff;transform:scaleX(1.145);transform-origin:0 0;">395 ms</div>
<div class="t" style="left:896.8px;top:82px;font-size:14.27px;color:#fff;font-weight:bold;-webkit-text-stroke:0.3px #fff;transform:scaleX(1.145);transform-origin:0 0;">396 ms</div>
<div class="abs" style="left:271px;top:96px;width:984px;height:22px;overflow:hidden">
<div class="t" style="left:35.2px;top:4px;font-size:13.72px;color:#fff;font-weight:bold;-webkit-text-stroke:0.3px #fff;transform:scaleX(1.179);transform-origin:0 0;">+0.5 ms</div>
<div class="t" style="left:152.6px;top:4px;font-size:13.72px;color:#fff;font-weight:bold;-webkit-text-stroke:0.3px #fff;transform:scaleX(1.179);transform-origin:0 0;">+0.6 ms</div>
<div class="t" style="left:269.9px;top:4px;font-size:13.72px;color:#fff;font-weight:bold;-webkit-text-stroke:0.3px #fff;transform:scaleX(1.179);transform-origin:0 0;">+0.7 ms</div>
<div class="t" style="left:387.2px;top:4px;font-size:13.72px;color:#fff;font-weight:bold;-webkit-text-stroke:0.3px #fff;transform:scaleX(1.179);transform-origin:0 0;">+0.8 ms</div>
<div class="t" style="left:504.6px;top:4px;font-size:13.72px;color:#fff;font-weight:bold;-webkit-text-stroke:0.3px #fff;transform:scaleX(1.179);transform-origin:0 0;">+0.9 ms</div>
<div class="t" style="left:739.3px;top:4px;font-size:13.72px;color:#fff;font-weight:bold;-webkit-text-stroke:0.3px #fff;transform:scaleX(1.179);transform-origin:0 0;">+0.1 ms</div>
<div class="t" style="left:856.6px;top:4px;font-size:13.72px;color:#fff;font-weight:bold;-webkit-text-stroke:0.3px #fff;transform:scaleX(1.179);transform-origin:0 0;">+0.2 ms</div>
<div class="t" style="left:974.0px;top:4px;font-size:13.72px;color:#fff;font-weight:bold;-webkit-text-stroke:0.3px #fff;transform:scaleX(1.179);transform-origin:0 0;">+0.3 ms</div>
</div>
</main>
<aside id="analyzers-panel">
<div class="t" style="left:1277.7px;top:111px;font-size:23.05px;color:#ececec;letter-spacing:-0.51px;font-weight:bold;">Analyzers</div>
<svg style="left:1642px;top:112px" width="20" height="20" viewBox="1642 112 20 20"><path d="M1643.8 121.7H1659.6M1651.7 113.8V129.6" stroke="#a6a6a6" stroke-width="2" fill="none"/></svg>
<div style="position:absolute;left:1282.2px;top:180.8px;width:12.0px;height:12.0px;background:#cfb468;border-radius:2.5px;"></div>
<div class="t" style="left:1308.0px;top:177px;font-size:20.48px;color:#ececec;">Async Serial</div>
<svg style="left:1433.6px;top:177.0px" width="19.8" height="19.8" viewBox="-10 -10 20 20"><circle r="10" fill="#2e994a"/><path d="M-4.9 0.3L-1.75 3.4L4.7 -3.3" fill="none" stroke="#fff" stroke-width="2.1"/></svg>
<div style="position:absolute;left:1282.2px;top:238.3px;width:12.0px;height:12.0px;background:#86a3fb;border-radius:2.5px;"></div>
<div class="t" style="left:1308.0px;top:235px;font-size:19.54px;color:#ececec;">I2C</div>
<svg style="left:1351.2px;top:234.0px" width="19.6" height="19.6" viewBox="-10 -10 20 20"><circle r="10" fill="#2e994a"/><path d="M-4.9 0.3L-1.75 3.4L4.7 -3.3" fill="none" stroke="#fff" stroke-width="2.1"/></svg>
<div class="abs" style="left:1278px;top:273px;width:389px;height:47px;background:#2b2b2d;border:1px solid #515157;border-radius:5.5px"></div>
<svg style="left:1290px;top:286px" width="16" height="22" viewBox="1290 286 16 22"><path d="M1294.8 292.1L1300.4 297.1L1294.8 302.1" stroke="#e6e6e6" stroke-width="2.4" fill="none"/></svg>
<div class="t" style="left:1315.5px;top:288px;font-size:18.11px;color:#ececec;font-weight:bold;">Trigger View</div>
<svg style="left:1429px;top:289px" width="18" height="16" viewBox="1429 289 18 16"><path d="M1438 291.2L1445.6 303.6H1430.4Z" fill="#ececec" stroke="#ececec" stroke-width="1" stroke-linejoin="round"/><path d="M1438 295.4V299.8M1438 301.2V302.6" stroke="#29292b" stroke-width="1.7"/></svg>
<div class="abs" style="left:1602px;top:280px;width:52px;height:28px;border:1px solid #54545a;border-radius:15px"></div>
<svg style="left:1606px;top:284px" width="22" height="22" viewBox="1606 284 22 22"><circle cx="1617" cy="294.6" r="10.4" fill="#5e5e60"/><path d="M1611.7 289.3L1622.3 299.9M1622.3 289.3L1611.7 299.9" stroke="#fff" stroke-width="2.1" fill="none"/></svg>
<div class="t" style="left:1278.2px;top:355px;font-size:23.32px;color:#ececec;letter-spacing:-0.58px;font-weight:bold;">Data</div>
<svg style="left:1338px;top:352px" width="26" height="26" viewBox="1338 352 26 26"><circle cx="1351.2" cy="365.1" r="11.5" fill="none" stroke="#57575c" stroke-width="1.5"/><text x="1351.2" y="371.8" font-size="18" text-anchor="middle" fill="#6a6a6e">?</text></svg>
<svg style="left:1374.9px;top:354.9px" width="20.2" height="20.2" viewBox="-10 -10 20 20"><circle r="10" fill="#2e994a"/><path d="M-4.9 0.3L-1.75 3.4L4.7 -3.3" fill="none" stroke="#fff" stroke-width="2.1"/></svg>
<svg style="left:1582px;top:351px" width="32" height="28" viewBox="1582 351 32 28" fill="none" stroke="#e6e6e6"><rect x="1585.1" y="354.1" width="25.8" height="21.7" rx="4" stroke-width="2.6"/><path d="M1593.6 354.1V375.8M1602 354.1V375.8" stroke-width="2.8"/><path d="M1585.1 361.3H1610.9M1585.1 368.4H1610.9" stroke-width="3.2"/></svg>
<svg style="left:1626px;top:351px" width="33" height="28" viewBox="1626 351 33 28" fill="none" stroke="#4d4d4f" stroke-width="2.6"><rect x="1629.4" y="354.6" width="25.9" height="21" rx="4"/><path d="M1635.6 361.7L1640 365.3L1635.6 368.9M1643.2 368.5H1649.4" stroke-width="2.3" stroke-linecap="round" stroke-linejoin="round"/></svg>
<div class="abs" style="left:1278.2px;top:403.2px;width:353px;height:45.6px;background:#2b2b2d;border:1px solid #46464b;border-radius:4px"></div>
<div class="t" style="left:1290.6px;top:418px;font-size:19.15px;color:#7c7c7c;">Type to search</div>
<svg style="left:1647px;top:416px" width="10" height="24" viewBox="1647 416 10 24" fill="#b4b4b4"><circle cx="1651.5" cy="420.7" r="1.6"/><circle cx="1651.5" cy="428" r="1.6"/><circle cx="1651.5" cy="435.3" r="1.6"/></svg>
<div style="position:absolute;left:1278.0px;top:467.0px;width:391.0px;height:1.0px;background:#46464b;"></div>
<div class="abs" style="left:1278px;top:468px;width:391px;height:656.6px;overflow:hidden">
<div class="t" style="left:35.6px;top:20px;font-size:17.83px;color:#ececec;letter-spacing:-0.33px;font-weight:bold;">Type</div>
<div class="t" style="left:148.0px;top:20px;font-size:17.83px;color:#ececec;letter-spacing:-0.16px;font-weight:bold;">Start</div>
<div class="t" style="left:313.0px;top:20px;font-size:17.83px;color:#ececec;letter-spacing:-0.59px;font-weight:bold;">Duration</div>
<div class="abs" style="left:0;top:54px;width:391px;height:1px;background:#46464b"></div>
<div class="abs" style="left:0;top:54.7px;width:380px;height:42.0px;background:#141414"></div>
<div class="abs" style="left:8.9px;top:72.1px;width:9.2px;height:9.2px;background:#cfb468;border-radius:1px"></div>
<div class="t" style="left:36.8px;top:68px;font-size:18.05px;color:#e6e6e6;">data</div>
<div class="t" style="left:149.3px;top:68px;font-size:18.05px;color:#e6e6e6;">86.8 µs</div>
<div class="abs" style="left:314.2px;top:54.7px;width:65.5px;height:42.0px;overflow:hidden">
<div class="t" style="left:0.0px;top:13px;font-size:18.05px;color:#e6e6e6;">82.464 µs</div>
</div>
<div class="abs" style="left:0;top:96.7px;width:380px;height:42.0px;background:#1d1d1d"></div>
<div class="abs" style="left:8.9px;top:114.1px;width:9.2px;height:9.2px;background:#cfb468;border-radius:1px"></div>
<div class="t" style="left:36.8px;top:110px;font-size:18.05px;color:#e6e6e6;">data</div>
<div class="t" style="left:149.3px;top:110px;font-size:18.05px;color:#e6e6e6;">260.416 µs</div>
<div class="abs" style="left:314.2px;top:96.7px;width:65.5px;height:42.0px;overflow:hidden">
<div class="t" style="left:0.0px;top:13px;font-size:18.05px;color:#e6e6e6;">82.464 µs</div>
</div>
<div class="abs" style="left:0;top:138.7px;width:380px;height:42.0px;background:#141414"></div>
<div class="abs" style="left:8.9px;top:156.1px;width:9.2px;height:9.2px;background:#cfb468;border-radius:1px"></div>
<div class="t" style="left:36.8px;top:152px;font-size:18.05px;color:#e6e6e6;">data</div>
<div class="t" style="left:149.3px;top:152px;font-size:18.05px;color:#e6e6e6;">434.024 µs</div>
<div class="abs" style="left:314.2px;top:138.7px;width:65.5px;height:42.0px;overflow:hidden">
<div class="t" style="left:0.0px;top:13px;font-size:18.05px;color:#e6e6e6;">82.464 µs</div>
</div>
<div class="abs" style="left:0;top:180.7px;width:380px;height:42.0px;background:#1d1d1d"></div>
<div class="abs" style="left:8.9px;top:198.1px;width:9.2px;height:9.2px;background:#cfb468;border-radius:1px"></div>
<div class="t" style="left:36.8px;top:194px;font-size:18.05px;color:#e6e6e6;">data</div>
<div class="t" style="left:149.3px;top:194px;font-size:18.05px;color:#e6e6e6;">607.632 µs</div>
<div class="abs" style="left:314.2px;top:180.7px;width:65.5px;height:42.0px;overflow:hidden">
<div class="t" style="left:0.0px;top:13px;font-size:18.05px;color:#e6e6e6;">82.464 µs</div>
</div>
<div class="abs" style="left:0;top:222.7px;width:380px;height:42.0px;background:#141414"></div>
<div class="abs" style="left:8.9px;top:240.1px;width:9.2px;height:9.2px;background:#cfb468;border-radius:1px"></div>
<div class="t" style="left:36.8px;top:236px;font-size:18.05px;color:#e6e6e6;">data</div>
<div class="t" style="left:149.3px;top:236px;font-size:18.05px;color:#e6e6e6;">781.248 µs</div>
<div class="abs" style="left:314.2px;top:222.7px;width:65.5px;height:42.0px;overflow:hidden">
<div class="t" style="left:0.0px;top:13px;font-size:18.05px;color:#e6e6e6;">82.464 µs</div>
</div>
<div class="abs" style="left:0;top:264.7px;width:380px;height:42.0px;background:#1d1d1d"></div>
<div class="abs" style="left:8.9px;top:282.1px;width:9.2px;height:9.2px;background:#cfb468;border-radius:1px"></div>
<div class="t" style="left:36.8px;top:278px;font-size:18.05px;color:#e6e6e6;">data</div>
<div class="t" style="left:149.3px;top:278px;font-size:18.05px;color:#e6e6e6;">954.856 µs</div>
<div class="abs" style="left:314.2px;top:264.7px;width:65.5px;height:42.0px;overflow:hidden">
<div class="t" style="left:0.0px;top:13px;font-size:18.05px;color:#e6e6e6;">82.464 µs</div>
</div>
<div class="abs" style="left:0;top:306.7px;width:380px;height:42.0px;background:#141414"></div>
<div class="abs" style="left:8.9px;top:324.1px;width:9.2px;height:9.2px;background:#cfb468;border-radius:1px"></div>
<div class="t" style="left:36.8px;top:320px;font-size:18.05px;color:#e6e6e6;">data</div>
<div class="t" style="left:149.3px;top:320px;font-size:18.05px;color:#e6e6e6;">1.128472 ms</div>
<div class="abs" style="left:314.2px;top:306.7px;width:65.5px;height:42.0px;overflow:hidden">
<div class="t" style="left:0.0px;top:13px;font-size:18.05px;color:#e6e6e6;">82.464 µs</div>
</div>
<div class="abs" style="left:0;top:348.7px;width:380px;height:42.0px;background:#1d1d1d"></div>
<div class="abs" style="left:8.9px;top:366.1px;width:9.2px;height:9.2px;background:#86a3fb;border-radius:1px"></div>
<div class="t" style="left:36.8px;top:362px;font-size:18.05px;color:#e6e6e6;">start</div>
<div class="t" style="left:149.3px;top:362px;font-size:18.05px;color:#e6e6e6;">1.277496 ms</div>
<div class="abs" style="left:314.2px;top:348.7px;width:65.5px;height:42.0px;overflow:hidden">
<div class="t" style="left:0.0px;top:13px;font-size:18.05px;color:#e6e6e6;">8 ns</div>
</div>
<div class="abs" style="left:0;top:390.7px;width:380px;height:42.0px;background:#141414"></div>
<div class="abs" style="left:8.9px;top:408.1px;width:9.2px;height:9.2px;background:#86a3fb;border-radius:1px"></div>
<div class="t" style="left:36.8px;top:404px;font-size:18.05px;color:#e6e6e6;">address</div>
<div class="t" style="left:149.3px;top:404px;font-size:18.05px;color:#e6e6e6;">1.287496 ms</div>
<div class="abs" style="left:314.2px;top:390.7px;width:65.5px;height:42.0px;overflow:hidden">
<div class="t" style="left:0.0px;top:13px;font-size:18.05px;color:#e6e6e6;">42.504 µs</div>
</div>
<div class="abs" style="left:0;top:432.7px;width:380px;height:42.0px;background:#1d1d1d"></div>
<div class="abs" style="left:8.9px;top:450.1px;width:9.2px;height:9.2px;background:#cfb468;border-radius:1px"></div>
<div class="t" style="left:36.8px;top:446px;font-size:18.05px;color:#e6e6e6;">data</div>
<div class="t" style="left:149.3px;top:446px;font-size:18.05px;color:#e6e6e6;">1.30208 ms</div>
<div class="abs" style="left:314.2px;top:432.7px;width:65.5px;height:42.0px;overflow:hidden">
<div class="t" style="left:0.0px;top:13px;font-size:18.05px;color:#e6e6e6;">82.464 µs</div>
</div>
<div class="abs" style="left:0;top:474.7px;width:380px;height:42.0px;background:#141414"></div>
<div class="abs" style="left:8.9px;top:492.1px;width:9.2px;height:9.2px;background:#86a3fb;border-radius:1px"></div>
<div class="t" style="left:36.8px;top:488px;font-size:18.05px;color:#e6e6e6;">data</div>
<div class="t" style="left:149.3px;top:488px;font-size:18.05px;color:#e6e6e6;">1.342496 ms</div>
<div class="abs" style="left:314.2px;top:474.7px;width:65.5px;height:42.0px;overflow:hidden">
<div class="t" style="left:0.0px;top:13px;font-size:18.05px;color:#e6e6e6;">42.504 µs</div>
</div>
<div class="abs" style="left:0;top:516.7px;width:380px;height:42.0px;background:#1d1d1d"></div>
<div class="abs" style="left:8.9px;top:534.1px;width:9.2px;height:9.2px;background:#86a3fb;border-radius:1px"></div>
<div class="t" style="left:36.8px;top:530px;font-size:18.05px;color:#e6e6e6;">data</div>
<div class="t" style="left:149.3px;top:530px;font-size:18.05px;color:#e6e6e6;">1.397496 ms</div>
<div class="abs" style="left:314.2px;top:516.7px;width:65.5px;height:42.0px;overflow:hidden">
<div class="t" style="left:0.0px;top:13px;font-size:18.05px;color:#e6e6e6;">42.504 µs</div>
</div>
<div class="abs" style="left:0;top:558.7px;width:380px;height:42.0px;background:#141414"></div>
<div class="abs" style="left:8.9px;top:576.1px;width:9.2px;height:9.2px;background:#86a3fb;border-radius:1px"></div>
<div class="t" style="left:36.8px;top:572px;font-size:18.05px;color:#e6e6e6;">stop</div>
<div class="t" style="left:149.3px;top:572px;font-size:18.05px;color:#e6e6e6;">1.457496 ms</div>
<div class="abs" style="left:314.2px;top:558.7px;width:65.5px;height:42.0px;overflow:hidden">
<div class="t" style="left:0.0px;top:13px;font-size:18.05px;color:#e6e6e6;">8 ns</div>
</div>
<div class="abs" style="left:0;top:600.7px;width:380px;height:42.0px;background:#1d1d1d"></div>
<div class="abs" style="left:8.9px;top:618.1px;width:9.2px;height:9.2px;background:#cfb468;border-radius:1px"></div>
<div class="t" style="left:36.8px;top:614px;font-size:18.05px;color:#e6e6e6;">data</div>
<div class="t" style="left:149.3px;top:614px;font-size:18.05px;color:#e6e6e6;">1.475688 ms</div>
<div class="abs" style="left:314.2px;top:600.7px;width:65.5px;height:42.0px;overflow:hidden">
<div class="t" style="left:0.0px;top:13px;font-size:18.05px;color:#e6e6e6;">82.464 µs</div>
</div>
<div class="abs" style="left:0;top:642.7px;width:380px;height:42.0px;background:#141414"></div>
<div class="abs" style="left:26.0px;top:1px;width:1px;height:53px;background:#46464b"></div>
<div class="abs" style="left:138.0px;top:1px;width:1px;height:53px;background:#46464b"></div>
<div class="abs" style="left:303.0px;top:1px;width:1px;height:53px;background:#46464b"></div>
<div class="abs" style="left:26.0px;top:54px;width:1px;height:606px;background:#46464b"></div>
<div class="abs" style="left:139.0px;top:54px;width:1px;height:606px;background:#46464b"></div>
<div class="abs" style="left:304.0px;top:54px;width:1px;height:606px;background:#46464b"></div>
<div class="abs" style="left:380.2px;top:54.8px;width:10.8px;height:42.6px;background:#3e3e3e"></div>
</div>
<div style="position:absolute;left:1278.2px;top:1124.6px;width:163.7px;height:12.6px;background:#3e3e3e;"></div>
</aside>
<nav id="sidebar">
<div style="position:absolute;left:1690.0px;top:76.0px;width:1.0px;height:1061.0px;background:#3c3c40;"></div>
<div style="position:absolute;left:1691.0px;top:297.0px;width:88.0px;height:90.0px;background:#38383c;"></div>
<div style="position:absolute;left:1691.0px;top:297.0px;width:3.0px;height:90.0px;background:#fff;"></div>
<svg style="left:1699px;top:106px" width="74" height="74" viewBox="1699 106 74 74"><circle cx="1735.5" cy="142.4" r="34.7" fill="#2e994a"/><path d="M1730.2 133.5L1746.3 142.6L1730.2 151.7Z" fill="#fff" stroke="#fff" stroke-width="3" stroke-linejoin="round"/></svg>
<svg style="left:1710px;top:218px" width="54" height="38" viewBox="1710 218 54 38" fill="none" stroke="#8c8c8c" stroke-width="1.7"><path d="M1724.5 222.8H1749.5Q1755.2 222.8 1756.2 228L1758.3 241Q1759.6 250.6 1751 250.6H1723Q1714.4 250.6 1715.7 241L1717.8 228Q1718.8 222.8 1724.5 222.8Z"/><path d="M1715.6 242.6H1758.4"/></svg>
<svg style="left:1715px;top:324px" width="44" height="36" viewBox="1715 324 44 36"><path d="M1720.2 342L1725.6 329H1748.4L1753.8 342L1748.4 355H1725.6Z" fill="none" stroke="#fff" stroke-width="2.3" stroke-linejoin="miter"/><text x="1737.2" y="347.2" font-size="14.2" font-weight="bold" text-anchor="middle" fill="#fff" stroke="#fff" stroke-width="0.3">1F</text></svg>
<svg style="left:1716px;top:428px" width="42" height="38" viewBox="1716 428 42 38" fill="none" stroke="#8c8c8c" stroke-width="1.5"><path d="M1722.5 452.3L1745.8 433L1752.3 441.2L1729 460.5Z"/><path d="M1726.6 457.4L1749.9 438.1"/><path d="M1726.1 449.3L1727.7 451.3M1729.9 446.2L1731.5 448.2M1733.7 443L1735.3 445M1737.5 439.9L1739.1 441.9M1741.3 436.7L1742.9 438.7"/></svg>
<svg style="left:1718px;top:534px" width="38" height="36" viewBox="1718 534 38 36" fill="none" stroke="#8c8c8c" stroke-width="1.7"><rect x="1722.8" y="538.2" width="11.3" height="10.8"/><path d="M1739.4 543.6H1750.8V565.2H1728.4V554.4H1750.8M1739.4 543.6V565.2"/></svg>
<svg style="left:1718px;top:1026px" width="36" height="30" viewBox="1718 1026 36 30" fill="none" stroke="#8c8c8c" stroke-width="1.8"><path d="M1723.2 1051.6V1032Q1723.2 1030.3 1725 1030.3H1746.4Q1748.2 1030.3 1748.2 1032V1044.1Q1748.2 1045.8 1746.4 1045.8H1729.4Z" stroke-linejoin="round"/><g fill="#8c8c8c" stroke="none"><circle cx="1730" cy="1038.4" r="1.3"/><circle cx="1735.6" cy="1038.4" r="1.3"/><circle cx="1741.2" cy="1038.4" r="1.3"/></g></svg>
<svg style="left:1718px;top:1088px" width="36" height="24" viewBox="1718 1088 36 24" fill="none" stroke="#9c9c9c" stroke-width="2.9" stroke-linecap="round"><path d="M1722.4 1093.4H1749.6M1722.4 1100.4H1749.6M1722.4 1107.5H1749.6"/></svg>
</nav>
<footer id="session-tabs">
<div style="position:absolute;left:1.0px;top:1137.0px;width:1778.0px;height:1.0px;background:#4a4a4e;"></div>
<div style="position:absolute;left:156.7px;top:1139.0px;width:152.3px;height:3.0px;background:#fff;"></div>
<div class="t" style="left:23.9px;top:1158px;font-size:20.47px;color:#8a8a8a;">Session 0</div>
<div class="t" style="left:178.4px;top:1158px;font-size:20.15px;color:#ececec;">Session 1</div>
<svg style="left:126px;top:1160px" width="14" height="14" viewBox="126 1160 14 14"><path d="M1 1" /><path d="M128.8 1162.6L137.8 1171.6M137.8 1162.6L128.8 1171.6" stroke="#9a9a9a" stroke-width="1.7" fill="none"/></svg>
<svg style="left:280px;top:1160px" width="14" height="14" viewBox="280 1160 14 14"><path d="M282.8 1162.6L291.8 1171.6M291.8 1162.6L282.8 1171.6" stroke="#9a9a9a" stroke-width="1.7" fill="none"/></svg>
<div style="position:absolute;left:154.6px;top:1153.0px;width:1.0px;height:28.0px;background:#4a4a4e;"></div>
<div style="position:absolute;left:308.6px;top:1153.0px;width:1.0px;height:28.0px;background:#4a4a4e;"></div>
<svg style="left:324px;top:1157px" width="20" height="20" viewBox="324 1157 20 20"><path d="M326.7 1167H342.1M334.4 1159.3V1174.7" stroke="#b4b4b4" stroke-width="2" fill="none"/></svg>
<div class="t" style="left:1679.9px;top:1159px;font-size:18.56px;color:#8a8a8a;">128 µs</div>
<svg style="left:1740px;top:1163px" width="18" height="14" viewBox="1740 1163 18 14"><path d="M1743.6 1173L1748.4 1168.2L1753.2 1173" stroke="#9c9c9c" stroke-width="2" fill="none"/></svg>
</footer>
</body></html>
